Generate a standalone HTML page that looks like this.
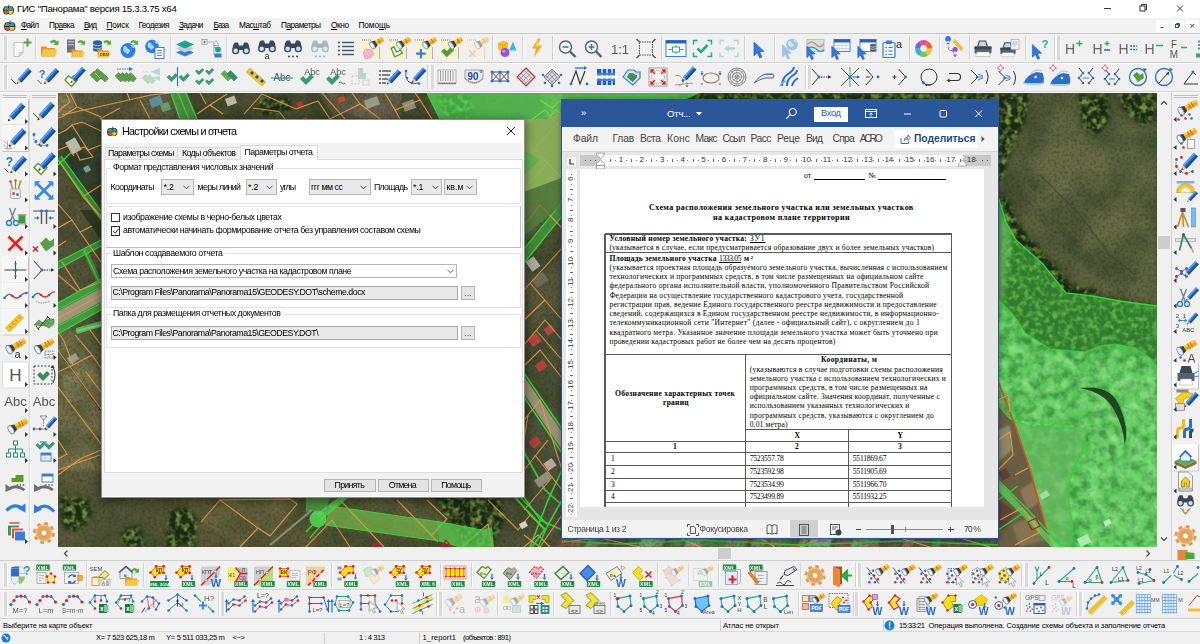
<!DOCTYPE html><html><head><meta charset="utf-8"><title>GIS</title><style>
*{box-sizing:border-box;margin:0;padding:0}
html,body{width:1200px;height:644px;overflow:hidden;background:#f0f0f0;font-family:"Liberation Sans",sans-serif;}
.a{position:absolute}
.t{position:absolute;white-space:nowrap;color:#000;line-height:1}
#title{left:0;top:0;width:1200px;height:18px;background:#fff}
#menu{left:0;top:18px;width:1200px;height:15px;background:#f3f3f3}
.sepv{position:absolute;width:1px;background:#d2d2d2;box-shadow:1px 0 0 #fbfbfb}
.seph{position:absolute;height:1px;background:#d0d0d0;box-shadow:0 1px 0 #fff}
.grip{position:absolute;width:3px;background:#dadada;box-shadow:-1px 0 0 #fafafa,1px 0 0 #fafafa}
svg{position:absolute;overflow:visible}
</style></head><body><svg width="0" height="0" style="left:0;top:0"><defs>
<g id="pen"><path d="M-7.500 8l1.300-4.800 3.600 3.400z" fill="#f2c48a"/><path d="M-7.500 8l.6-2.100 1.500 1.400z" fill="#2b2b2b"/><path d="M-6.200 3.200l10.200-11.200 3.600 3.400-10.200 11.200z" fill="#2468c8"/><path d="M-6.200 3.200l10.200-11.200 1.200 1.100-10.200 11.200z" fill="#5fa2ee"/><path d="M-3.800 5.500l10.200-11.200 1.200 1.100-10.200 11.200z" fill="#174a98"/></g>
<g id="flL"><g transform="rotate(-30)"><rect x="-2" y="-2.800" width="13" height="5.600" rx="1" fill="#f5a81c"/><rect x="-2" y="-2.800" width="13" height="2" rx="1" fill="#fbd24e"/><rect x="2" y="-2.800" width="1.300" height="5.600" fill="#c97f10"/><rect x="5" y="-2.800" width="1.300" height="5.600" fill="#c97f10"/><path d="M-7.500-4.600l5.500 1.600v6l-5.500 1.600z" fill="#323e4a"/><ellipse cx="-7.500" cy="0" rx="2.300" ry="4.600" fill="#e9f0f7" stroke="#7f8d9d" stroke-width=".9"/></g></g>
<g id="fl"><g transform="rotate(-32)"><rect x="-1" y="-2.600" width="8.500" height="5.200" rx=".8" fill="#f5a81c"/><rect x="-1" y="-2.600" width="8.500" height="1.800" fill="#fbd24e"/><rect x="2.300" y="-2.600" width="1.200" height="5.200" fill="#c97f10"/><path d="M-6-4.300l5 1.300v6l-5 1.300z" fill="#323e4a"/><ellipse cx="-6" cy="0" rx="2.100" ry="4.300" fill="#e9f0f7" stroke="#7f8d9d" stroke-width=".9"/></g></g>
<g id="xml"><rect x="-6.700" y="-3" width="13.400" height="6" rx=".6" fill="#1e8a3c"/><text x="0" y="2" font-size="5.200" font-weight="bold" fill="#fff" text-anchor="middle" font-family="'Liberation Sans',sans-serif" letter-spacing=".3">XML</text></g>
<g id="W"><text x="0" y="0" font-size="11" font-weight="bold" fill="#2b6cc4" text-anchor="middle" font-family="'Liberation Sans',sans-serif">W</text></g>
<g id="xl"><rect x="-4" y="-4.500" width="8" height="9" fill="#1d7a43"/><rect x="1" y="-3.500" width="4.500" height="7" fill="#7fc89a"/><text x="-1.200" y="2.500" font-size="6.500" font-weight="bold" fill="#fff" text-anchor="middle" font-family="'Liberation Sans',sans-serif">x</text></g>
<g id="ptr"><path d="M-4-6l0 11 2.600-2.500 2 4.300 1.800-.8-2-4.300 3.600-.2z" fill="#2f7be0" stroke="#1c55b0" stroke-width=".5"/></g>
<g id="ptrg"><path d="M-4-6l0 11 2.600-2.500 2 4.300 1.800-.8-2-4.300 3.600-.2z" fill="#fff" stroke="#777" stroke-width=".7"/></g>
<g id="bino"><path d="M-8.500 1.500q0-6 2.500-7.500h3l1 3h4l1-3h3q2.500 1.500 2.500 7.500z" fill="#3b4753"/><circle cx="-5.300" cy="2.200" r="3.600" fill="#3b4753"/><circle cx="5.300" cy="2.200" r="3.600" fill="#3b4753"/><circle cx="-5.300" cy="2.200" r="2.300" fill="#bfe2fa"/><circle cx="5.300" cy="2.200" r="2.300" fill="#bfe2fa"/></g>
<g id="gear"><circle r="8.100" fill="none" stroke="#dc9850" stroke-width="2.800" stroke-dasharray="3.180 3.180"/><circle r="5" fill="none" stroke="#e6a45c" stroke-width="4.600"/><circle r="6.800" fill="none" stroke="#f0c48c" stroke-width=".9"/><circle r="2.700" fill="#fbf6ee" stroke="#c98840" stroke-width=".7"/></g>
<g id="fold"><path d="M-8 6v-10h5l1.500 1.500h7.500v8.500z" fill="#e59a1c"/><path d="M-8 6l2.200-7h14.300l-2.500 7z" fill="#f8c450"/></g>
<g id="garr"><path d="M-4-1q4-3.500 7 0l1.500-1.500v5h-5l1.600-1.600q-2-2-4 0z" fill="#57ad3c"/></g>
<g id="globe"><circle r="6.500" fill="#2d7de0"/><path d="M-4-3q2-2 3 0t2 2q2 1 0 3t-3 0q-3-1-2-5zM2-5q3 0 3.500 2.500q-2 1-3.500-2.500z" fill="#a8d5ff"/></g>
<g id="prn"><path d="M-6-2l2-6h7l2 6z" fill="#3d4852"/><path d="M-4.500-2.500l1.300-4.500h5.400l1.300 4.500z" fill="#cfd6dd"/><rect x="-8.500" y="-2" width="17" height="7" rx="1" fill="#56616c"/><rect x="-8.500" y="-2" width="17" height="2.500" fill="#3d4852"/><path d="M-6 3.500h12l1.500 4.500h-15z" fill="#fff" stroke="#9aa3ab" stroke-width=".5"/></g>
<g id="poly5"><path d="M-7-4.500l7.500-2 5.500 3-2 8-8 1.500z" fill="none" stroke="#2aa58c" stroke-width="1.100"/><g fill="#2a6fd0"><circle cx="-7" cy="-4.500" r="1.500"/><circle cx=".5" cy="-6.500" r="1.500"/><circle cx="6" cy="-3.500" r="1.500"/><circle cx="4" cy="4.500" r="1.500"/><circle cx="-4" cy="6" r="1.500"/></g></g>
<g id="ypoly"><path d="M-9 0l6-6.500h8v7h-4.500l-5 4.500z" fill="#f7e018" stroke="#e25a1a" stroke-width=".9"/><g fill="#e02020"><circle cx="-9" cy="0" r="1.400"/><circle cx="-3" cy="-6.500" r="1.400"/><circle cx="5" cy="-6.500" r="1.400"/><circle cx="5" cy=".5" r="1.400"/><circle cx=".5" cy=".5" r="1.400"/><circle cx="-4.500" cy="5" r="1.400"/></g></g>
<g id="arc"><path d="M-10 3l6-8h8" fill="none" stroke="#e05050" stroke-width="1" stroke-dasharray="1.500 1"/><path d="M4-5l4.500 5.500" fill="none" stroke="#2aa58c" stroke-width="1.100"/><g fill="#2a6fd0"><circle cx="-10" cy="3" r="1.600"/><circle cx="-4" cy="-5" r="1.600"/><circle cx="4" cy="-5" r="1.600"/></g><g fill="#e02020"><circle cx="-7" cy="-1" r="1.600"/><circle cx="0" cy="-5.300" r="1.600"/><circle cx="8.500" cy=".5" r="1.600"/></g></g>
<g id="dots"><g fill="#2a6fd0"><circle cx="-7" cy="-3" r="1.300"/><circle cx="-3" cy="-6" r="1.300"/><circle cx="-5" cy="2" r="1.300"/><circle cx="-1" cy="6" r="1.300"/></g><g fill="#e02020"><circle cx="-2" cy="-1" r="1.300"/><circle cx="-7" cy="6" r="1.300"/><circle cx="2" cy="3" r="1.300"/></g></g>
<g id="chk"><path d="M-6-1l3-3 3 3 5-5 3 3-8 8z" fill="#3d9a74"/></g>
<g id="arrd"><path d="M0-3v4" stroke="#2a6fd0" stroke-width="1.500"/><path d="M-2.200 1h4.400l-2.200 3z" fill="#2a6fd0"/></g>
</defs></svg><div class="a" id="title"></div><svg style="left:3.0px;top:3.5px" width="11" height="11" viewBox="0 0 20 20"><ellipse cx="6" cy="11.500" rx="5.800" ry="7.600" fill="#1b1b1b"/><ellipse cx="14" cy="11.500" rx="5.800" ry="7.600" fill="#1b1b1b"/><path d="M1.500 11a4.500 6 0 0 1 8.500-3v3z" fill="#2fb34a"/><path d="M18.500 11a4.500 6 0 0 0-8.500-3v3z" fill="#3b8eea"/><path d="M1.500 12a4.500 6 0 0 0 8.500 3v-3z" fill="#e94a5a"/><path d="M18.500 12a4.500 6 0 0 1-8.500 3v-3z" fill="#f2d21a"/><path d="M10 6q-.5-3 1.500-5" stroke="#1b1b1b" stroke-width="1.600" fill="none"/></svg><div class="t" style="left:17.0px;top:3.8px;font-size:9.70px;letter-spacing:-0.303px;color:#000;">ГИС "Панорама" версия 15.3.3.75 x64</div><svg style="left:1100px;top:0" width="100" height="18" viewBox="0 0 100 18"><g stroke="#222" stroke-width="0.9" fill="none"><path d="M4 8.5h7"/><rect x="40" y="6" width="5" height="5"/><path d="M41.5 6v-1.5h5v5h-1.5"/><path d="M77 5.5l6 6M83 5.5l-6 6"/></g></svg><div class="a" id="menu"></div><svg style="left:4.0px;top:20.0px" width="11.5" height="11.5" viewBox="0 0 20 20"><ellipse cx="6" cy="11.500" rx="5.800" ry="7.600" fill="#1b1b1b"/><ellipse cx="14" cy="11.500" rx="5.800" ry="7.600" fill="#1b1b1b"/><path d="M1.500 11a4.500 6 0 0 1 8.500-3v3z" fill="#2fb34a"/><path d="M18.500 11a4.500 6 0 0 0-8.500-3v3z" fill="#3b8eea"/><path d="M1.500 12a4.500 6 0 0 0 8.500 3v-3z" fill="#e94a5a"/><path d="M18.500 12a4.500 6 0 0 1-8.500 3v-3z" fill="#f2d21a"/><path d="M10 6q-.5-3 1.500-5" stroke="#1b1b1b" stroke-width="1.600" fill="none"/></svg><div class="t" style="left:21.0px;top:20.9px;font-size:8.30px;letter-spacing:-0.802px;color:#000;"><u>Ф</u>айл</div><div class="t" style="left:49.0px;top:20.9px;font-size:8.30px;letter-spacing:-0.507px;color:#000;">Пр<u>а</u>вка</div><div class="t" style="left:84.0px;top:20.9px;font-size:8.30px;letter-spacing:-1.008px;color:#000;"><u>В</u>ид</div><div class="t" style="left:106.5px;top:20.9px;font-size:8.30px;letter-spacing:-0.125px;color:#000;"><u>П</u>оиск</div><div class="t" style="left:138.5px;top:20.9px;font-size:8.30px;letter-spacing:-0.600px;color:#000;">Геодезия</div><div class="t" style="left:179.0px;top:20.9px;font-size:8.30px;letter-spacing:-0.673px;color:#000;"><u>З</u>адачи</div><div class="t" style="left:213.5px;top:20.9px;font-size:8.30px;letter-spacing:-0.964px;color:#000;"><u>Б</u>аза</div><div class="t" style="left:239.0px;top:20.9px;font-size:8.30px;letter-spacing:-0.585px;color:#000;">Мас<u>ш</u>таб</div><div class="t" style="left:281.0px;top:20.9px;font-size:8.30px;letter-spacing:-0.531px;color:#000;">П<u>а</u>раметры</div><div class="t" style="left:331.0px;top:20.9px;font-size:8.30px;letter-spacing:-0.429px;color:#000;"><u>О</u>кно</div><div class="t" style="left:358.5px;top:20.9px;font-size:8.30px;letter-spacing:-0.111px;color:#000;">Помо<u>щ</u>ь</div><div class="a" style="left:1156px;top:20px;width:13px;height:12px;background:#fcfcfc"></div><div class="a" style="left:1171px;top:20px;width:13px;height:12px;background:#fcfcfc"></div><div class="a" style="left:1186px;top:20px;width:13px;height:12px;background:#fcfcfc"></div><svg style="left:1155px;top:18px" width="45" height="15" viewBox="0 0 45 15"><g stroke="#2f4f78" stroke-width="1" fill="none"><path d="M5.5 9.5h3"/><rect x="20.5" y="6.5" width="3" height="3"/><path d="M21.5 6.5v-1h3v3h-1"/><path d="M35.5 6l3.5 3.5M39 6l-3.500 3.500"/></g></svg><div class="a" style="left:0;top:32.500px;width:1200px;height:1.500px;background:#c8c8c8"></div><div class="a" style="left:0;top:34px;width:1200px;height:59px;background:#f0f0f0"></div><div class="a" style="left:0;top:62px;width:1200px;height:1px;background:#d4d4d4"></div><div class="a" style="left:0;top:63px;width:1200px;height:1px;background:#fbfbfb"></div><div class="a" style="left:0;top:91px;width:1200px;height:1px;background:#d4d4d4"></div><div class="a" style="left:0;top:92px;width:1200px;height:1px;background:#fbfbfb"></div><div class="a" style="left:0;top:93px;width:58px;height:467px;background:#f0f0f0"></div><div class="a" style="left:29px;top:95px;width:1px;height:452px;background:#d8d8d8"></div><div class="a" style="left:30px;top:95px;width:1px;height:452px;background:#fcfcfc"></div><div class="a" style="left:1157px;top:93px;width:14px;height:454px;background:#f0f0f0"></div><div class="a" style="left:1158px;top:235.500px;width:12px;height:13px;background:#cdcdcd"></div><svg style="left:1157px;top:93px" width="14" height="454" viewBox="0 0 14 454"><g stroke="#404040" stroke-width="1.1" fill="none"><path d="M4 11.500l3-3 3 3"/><path d="M4 444.500l3 3 3-3"/></g></svg><div class="a" style="left:1171px;top:93px;width:1px;height:467px;background:#d0d0d0"></div><div class="a" style="left:1172px;top:93px;width:28px;height:467px;background:#f0f0f0"></div><div class="a" style="left:1174px;top:95px;width:24px;height:3px;border-top:1px solid #c0c0c0;border-bottom:1px solid #c0c0c0"></div><div class="a" style="left:3px;top:95px;width:24px;height:3px;border-top:1px solid #c0c0c0;border-bottom:1px solid #c0c0c0"></div><div class="a" style="left:32px;top:95px;width:24px;height:3px;border-top:1px solid #c0c0c0;border-bottom:1px solid #c0c0c0"></div><div class="a" style="left:58px;top:547px;width:1113px;height:13px;background:#f0f0f0"></div><div class="a" style="left:718px;top:548px;width:13px;height:11px;background:#cdcdcd"></div><svg style="left:58px;top:547px" width="1099" height="13" viewBox="0 0 1099 13"><g stroke="#404040" stroke-width="1.1" fill="none"><path d="M9.500 3.500l-3 3 3 3"/><path d="M1088.500 3.500l3 3-3 3"/></g></svg><div class="a" style="left:0;top:560px;width:1200px;height:1px;background:#cfcfcf"></div><div class="a" style="left:0;top:561px;width:1200px;height:58px;background:#f0f0f0"></div><div class="a" style="left:0;top:589px;width:1200px;height:1px;background:#d4d4d4"></div><div class="a" style="left:0;top:590px;width:1200px;height:1px;background:#fbfbfb"></div><div class="a" style="left:0;top:618px;width:1200px;height:1px;background:#cfcfcf"></div><div class="a" style="left:0;top:619px;width:1200px;height:13px;background:#f3f3f3"></div><div class="a" style="left:0;top:631px;width:1200px;height:1px;background:#d9d9d9"></div><div class="a" style="left:0;top:632px;width:1200px;height:12px;background:#f0f0f0"></div><div class="a" style="left:719.5px;top:620px;width:1px;height:11px;background:#cfcfcf"></div><div class="a" style="left:883.0px;top:620px;width:1px;height:11px;background:#cfcfcf"></div><div class="a" style="left:324.0px;top:633px;width:1px;height:11px;background:#cfcfcf"></div><div class="a" style="left:419.0px;top:633px;width:1px;height:11px;background:#cfcfcf"></div><div class="t" style="left:3.0px;top:621.7px;font-size:7.60px;letter-spacing:-0.173px;color:#000;">Выберите на карте объект</div><div class="t" style="left:723.0px;top:621.7px;font-size:7.60px;letter-spacing:-0.097px;color:#000;">Атлас не открыт</div><div class="t" style="left:899.0px;top:621.7px;font-size:7.60px;letter-spacing:-0.512px;color:#000;">15:33:21</div><div class="t" style="left:928.5px;top:621.7px;font-size:7.60px;letter-spacing:-0.132px;color:#000;">Операция выполнена. Создание схемы объекта и заполнение отчета</div><svg style="left:884px;top:620px" width="11" height="11" viewBox="0 0 11 11"><circle cx="5.5" cy="5.5" r="5" fill="#1a7fd8"/><rect x="4.900" y="2" width="1.3" height="4.500" fill="#fff"/><rect x="4.900" y="7.300" width="1.3" height="1.400" fill="#fff"/></svg><div class="t" style="left:96.0px;top:633.9px;font-size:7.60px;letter-spacing:-0.340px;color:#000;">X= 7 523 625,18 m</div><div class="t" style="left:166.0px;top:633.9px;font-size:7.60px;letter-spacing:-0.305px;color:#000;">Y= 5 511 033,25 m</div><div class="t" style="left:232.5px;top:633.9px;font-size:7.60px;letter-spacing:-0.407px;color:#000;">&lt;~&gt;</div><div class="t" style="left:359.0px;top:633.9px;font-size:7.60px;letter-spacing:-0.448px;color:#000;">1 : 4 313</div><div class="t" style="left:422.5px;top:633.9px;font-size:7.60px;letter-spacing:0.121px;color:#000;">1_report1</div><div class="t" style="left:463.0px;top:633.9px;font-size:7.60px;letter-spacing:-0.563px;color:#000;">(объектов : 891)</div><svg style="left:1px;top:633px" width="10" height="10" viewBox="0 0 10 10"><circle cx="5" cy="5" r="4.500" fill="#1e78d2"/><path d="M2 3q2-1 2.500 1t2 .5q1 1-.5 2.500" stroke="#bfe0ff" fill="none" stroke-width="1.200"/></svg><svg style="left:58px;top:93px" width="1099" height="454" viewBox="58 93 1099 454"><defs>
<filter color-interpolation-filters="sRGB" id="nz" x="0" y="0" width="100%" height="100%"><feTurbulence type="fractalNoise" baseFrequency="0.022" numOctaves="3" seed="7"/><feColorMatrix type="matrix" values="0 0 0 0 0.19  0 0 0 0 0.24  0 0 0 0 0.13  1.5 0 0 0 -0.55"/></filter>
<filter color-interpolation-filters="sRGB" id="nl" x="0" y="0" width="100%" height="100%"><feTurbulence type="fractalNoise" baseFrequency="0.035" numOctaves="3" seed="21"/><feColorMatrix type="matrix" values="0 0 0 0 0.46  0 0 0 0 0.45  0 0 0 0 0.29  0 1.5 0 0 -0.62"/></filter>
<filter color-interpolation-filters="sRGB" id="gr" x="0" y="0" width="100%" height="100%"><feTurbulence type="fractalNoise" baseFrequency="0.35" numOctaves="2" seed="3"/><feColorMatrix type="matrix" values="0 0 0 0 0.12  0 0 0 0 0.15  0 0 0 0 0.08  0 0 0.8 0 -0.34"/></filter>
<filter color-interpolation-filters="sRGB" id="tr" x="-5%" y="-5%" width="110%" height="110%"><feTurbulence type="fractalNoise" baseFrequency="0.11" numOctaves="3" seed="4"/><feColorMatrix type="matrix" values="0 0 0 0 0.07  0 0 0 0 0.30  0 0 0 0 0.10  0 0 2.6 0 -1.0"/><feComposite in2="SourceGraphic" operator="in"/></filter>
<filter color-interpolation-filters="sRGB" id="tw" x="-5%" y="-5%" width="110%" height="110%"><feTurbulence type="fractalNoise" baseFrequency="0.09" numOctaves="3" seed="14"/><feColorMatrix type="matrix" values="0 0 0 0 0.72  0 0 0 0 1.0  0 0 0 0 0.68  0 2.4 0 0 -0.95"/><feComposite in2="SourceGraphic" operator="in"/></filter>
<filter color-interpolation-filters="sRGB" id="tl" x="-10%" y="-10%" width="120%" height="120%"><feGaussianBlur in="SourceAlpha" stdDeviation="2.200" result="m"/><feTurbulence type="fractalNoise" baseFrequency="0.17" numOctaves="2" seed="9"/><feColorMatrix type="matrix" values="0 0 0 0 0.45  0 0 0 0 0.56  0 0 0 0 0.26  0 3.2 0 0 -1.36"/><feComposite in2="m" operator="in"/></filter>
<filter color-interpolation-filters="sRGB" id="td" x="-10%" y="-10%" width="120%" height="120%"><feGaussianBlur in="SourceAlpha" stdDeviation="2.500" result="m"/><feTurbulence type="fractalNoise" baseFrequency="0.12" numOctaves="2" seed="19"/><feColorMatrix type="matrix" values="0 0 0 0 0.10  0 0 0 0 0.16  0 0 0 0 0.07  0 0 2.0 0 0.05"/><feComposite in2="m" operator="in"/></filter>
<filter color-interpolation-filters="sRGB" id="bl"><feGaussianBlur stdDeviation="2.500"/></filter>
<filter color-interpolation-filters="sRGB" id="bl1"><feGaussianBlur stdDeviation="1.200"/></filter>
<clipPath id="mc"><rect x="58" y="93" width="1099" height="454"/></clipPath>
</defs><g clip-path="url(#mc)"><rect x="58" y="93" width="1099" height="454" fill="#50533a"/><g filter="url(#bl)"><polygon points="58,93 180,93 175,120 58,130" fill="#625d40" stroke="none" stroke-width="1"/><polygon points="58,130 101,120 101,160 70,175 58,160" fill="#3d4630" stroke="none" stroke-width="1"/><polygon points="58,160 80,185 101,240 101,270 58,290" fill="#565438" stroke="none" stroke-width="1"/><polygon points="58,330 101,330 101,470 58,470" fill="#6f6b48" stroke="none" stroke-width="1"/><polygon points="58,470 101,470 160,480 200,497 200,547 58,547" fill="#585a3a" stroke="none" stroke-width="1"/><polygon points="150,497 340,497 330,547 160,547" fill="#5a5837" stroke="none" stroke-width="1"/><polygon points="340,497 470,497 480,547 330,547" fill="#4f5234" stroke="none" stroke-width="1"/><polygon points="180,93 430,93 430,120 180,120" fill="#454a30" stroke="none" stroke-width="1"/><polygon points="998,93 1157,93 1157,310 1090,300 1040,265 998,200" fill="#5d6441" stroke="none" stroke-width="1"/><polygon points="1020,150 1100,140 1157,170 1157,260 1080,250" fill="#676b47" stroke="none" stroke-width="1"/></g><g filter="url(#bl1)"><polygon points="201,522 222,498 258,531 240,547" fill="#6b6640" stroke="none" stroke-width="1" opacity="0.9"/><polygon points="222,498 290,497 297,512 270,536 258,531" fill="#6f6a42" stroke="none" stroke-width="1" opacity="0.9"/><polygon points="345,497 352,510 430,497" fill="#5d5e3a" stroke="none" stroke-width="1" opacity="0.9"/><polygon points="352,510 430,497 445,525 400,540 340,530" fill="#66643e" stroke="none" stroke-width="1" opacity="0.8"/><polygon points="58,345 75,336 101,380 101,440 58,375" fill="#7d7650" stroke="none" stroke-width="1" opacity="0.85"/><polygon points="58,375 101,440 101,470 58,470" fill="#77724c" stroke="none" stroke-width="1" opacity="0.85"/><polygon points="60,158 76,150 101,160 101,205 84,196" fill="#2c3a2a" stroke="none" stroke-width="1" opacity="0.85"/><polygon points="62,375 80,372 84,400 66,402" fill="#a0966c" stroke="none" stroke-width="1" opacity="0.7"/><polygon points="60,100 140,95 150,112 100,119 70,125" fill="#615b3d" stroke="none" stroke-width="1" opacity="0.8"/><polygon points="200,93 262,93 260,100 215,119" fill="#5b583a" stroke="none" stroke-width="1" opacity="0.8"/><polygon points="310,93 352,93 360,104 345,119" fill="#3a4a30" stroke="none" stroke-width="1" opacity="0.8"/><polygon points="524,130 562,180 562,200 524,245" fill="#6a7a45" stroke="none" stroke-width="1" opacity="0.8"/><polygon points="524,270 562,222 562,330 524,320" fill="#5a583c" stroke="none" stroke-width="1" opacity="0.8"/></g><g filter="url(#bl1)"><polygon points="318,93 402,93 398,119 335,119" fill="#7b6c5c" stroke="none" stroke-width="1" opacity="0.75"/><polygon points="58,93 76,93 72,112 58,118" fill="#8a8058" stroke="none" stroke-width="1" opacity="0.8"/><polygon points="540,93 562,93 562,119 548,119" fill="#9aa870" stroke="none" stroke-width="1" opacity="0.5"/></g><g filter="url(#bl1)"><polygon points="562,536 584,536 579,547 557,547" fill="#8e5a4c" stroke="none" stroke-width="1" opacity="0.8"/><polygon points="590,536 612,536 607,547 585,547" fill="#9fb88a" stroke="none" stroke-width="1" opacity="0.8"/><polygon points="616,536 642,536 637,547 611,547" fill="#5a7a48" stroke="none" stroke-width="1" opacity="0.8"/><polygon points="643,536 667,536 662,547 638,547" fill="#9fb88a" stroke="none" stroke-width="1" opacity="0.8"/><polygon points="672,536 685,536 680,547 667,547" fill="#6f9a5a" stroke="none" stroke-width="1" opacity="0.8"/><polygon points="688,536 705,536 700,547 683,547" fill="#a9a58a" stroke="none" stroke-width="1" opacity="0.8"/><polygon points="705,536 730,536 725,547 700,547" fill="#4f8a4a" stroke="none" stroke-width="1" opacity="0.8"/><polygon points="730,536 750,536 745,547 725,547" fill="#9fb88a" stroke="none" stroke-width="1" opacity="0.8"/><polygon points="755,536 768,536 763,547 750,547" fill="#c9c4b0" stroke="none" stroke-width="1" opacity="0.8"/><polygon points="768,536 792,536 787,547 763,547" fill="#6f9a5a" stroke="none" stroke-width="1" opacity="0.8"/><polygon points="792,536 801,536 796,547 787,547" fill="#5a7a48" stroke="none" stroke-width="1" opacity="0.8"/><polygon points="802,536 810,536 805,547 797,547" fill="#9fb88a" stroke="none" stroke-width="1" opacity="0.8"/><polygon points="812,536 834,536 829,547 807,547" fill="#c9c4b0" stroke="none" stroke-width="1" opacity="0.8"/><polygon points="840,536 854,536 849,547 835,547" fill="#8e5a4c" stroke="none" stroke-width="1" opacity="0.8"/><polygon points="855,536 872,536 867,547 850,547" fill="#9fb88a" stroke="none" stroke-width="1" opacity="0.8"/><polygon points="872,536 882,536 877,547 867,547" fill="#9fb88a" stroke="none" stroke-width="1" opacity="0.8"/><polygon points="887,536 903,536 898,547 882,547" fill="#6a6248" stroke="none" stroke-width="1" opacity="0.8"/><polygon points="907,536 917,536 912,547 902,547" fill="#b08a78" stroke="none" stroke-width="1" opacity="0.8"/><polygon points="919,536 934,536 929,547 914,547" fill="#8e5a4c" stroke="none" stroke-width="1" opacity="0.8"/><polygon points="936,536 944,536 939,547 931,547" fill="#6f9a5a" stroke="none" stroke-width="1" opacity="0.8"/><polygon points="948,536 959,536 954,547 943,547" fill="#6a6248" stroke="none" stroke-width="1" opacity="0.8"/><polygon points="959,536 976,536 971,547 954,547" fill="#6a6248" stroke="none" stroke-width="1" opacity="0.8"/><polygon points="976,536 984,536 979,547 971,547" fill="#4f8a4a" stroke="none" stroke-width="1" opacity="0.8"/><polygon points="984,536 998,536 993,547 979,547" fill="#5a7a48" stroke="none" stroke-width="1" opacity="0.8"/></g><rect x="58" y="93" width="1099" height="454" filter="url(#nz)"/><rect x="58" y="93" width="1099" height="454" filter="url(#nl)" opacity="0.35"/><rect x="58" y="93" width="1099" height="454" filter="url(#gr)"/><g filter="url(#td)"><polygon points="998,93 1030,93 1026,120 1012,150 1004,175 998,190" fill="#fff" stroke="none" stroke-width="1"/></g><g filter="url(#tl)"><polygon points="998,93 1030,93 1026,120 1012,150 1004,175 998,190" fill="#fff" stroke="none" stroke-width="1"/></g><g filter="url(#td)"><polygon points="1078,93 1108,93 1110,118 1098,136 1082,128" fill="#fff" stroke="none" stroke-width="1"/></g><g filter="url(#tl)"><polygon points="1078,93 1108,93 1110,118 1098,136 1082,128" fill="#fff" stroke="none" stroke-width="1"/></g><g filter="url(#td)"><polygon points="1118,93 1157,93 1157,122 1140,126 1124,112" fill="#fff" stroke="none" stroke-width="1"/></g><g filter="url(#tl)"><polygon points="1118,93 1157,93 1157,122 1140,126 1124,112" fill="#fff" stroke="none" stroke-width="1"/></g><g filter="url(#td)"><polygon points="1003,190 1020,225 1048,258 1072,285 1100,290 1100,300 1062,298 1036,270 1010,238 998,200" fill="#fff" stroke="none" stroke-width="1"/></g><g filter="url(#tl)"><polygon points="1003,190 1020,225 1048,258 1072,285 1100,290 1100,300 1062,298 1036,270 1010,238 998,200" fill="#fff" stroke="none" stroke-width="1"/></g><g filter="url(#td)"><polygon points="60,497 88,497 92,515 80,532 62,528" fill="#fff" stroke="none" stroke-width="1"/></g><g filter="url(#tl)"><polygon points="60,497 88,497 92,515 80,532 62,528" fill="#fff" stroke="none" stroke-width="1"/></g><g filter="url(#td)"><polygon points="168,512 185,505 198,520 195,547 165,547" fill="#fff" stroke="none" stroke-width="1"/></g><g filter="url(#tl)"><polygon points="168,512 185,505 198,520 195,547 165,547" fill="#fff" stroke="none" stroke-width="1"/></g><g filter="url(#td)"><polygon points="120,530 140,526 146,547 122,547" fill="#fff" stroke="none" stroke-width="1"/></g><g filter="url(#tl)"><polygon points="120,530 140,526 146,547 122,547" fill="#fff" stroke="none" stroke-width="1"/></g><g filter="url(#td)"><polygon points="432,497 500,497 505,520 492,547 462,547 448,520" fill="#fff" stroke="none" stroke-width="1"/></g><g filter="url(#tl)"><polygon points="432,497 500,497 505,520 492,547 462,547 448,520" fill="#fff" stroke="none" stroke-width="1"/></g><g filter="url(#td)"><polygon points="680,93 1000,93 1000,101 675,101" fill="#fff" stroke="none" stroke-width="1"/></g><g filter="url(#tl)"><polygon points="680,93 1000,93 1000,101 675,101" fill="#fff" stroke="none" stroke-width="1"/></g><g filter="url(#td)"><polygon points="436,93 470,93 474,119 446,119" fill="#fff" stroke="none" stroke-width="1"/></g><g filter="url(#tl)"><polygon points="436,93 470,93 474,119 446,119" fill="#fff" stroke="none" stroke-width="1"/></g><g filter="url(#td)"><polygon points="258,98 288,96 292,112 262,116" fill="#fff" stroke="none" stroke-width="1"/></g><g filter="url(#tl)"><polygon points="258,98 288,96 292,112 262,116" fill="#fff" stroke="none" stroke-width="1"/></g><polyline points="1040,175 1080,215 1110,255 1135,275" fill="none" stroke="#3f432b" stroke-width="1.5" opacity="0.6"/><polyline points="1020,178 1062,222 1100,262" fill="none" stroke="#62643f" stroke-width="1.2" opacity="0.5"/><polygon points="58,311 101,288 101,302 58,325" fill="#a39a7c" stroke="none" stroke-width="1" opacity="0.95"/><polygon points="58,303 101,279 101,287 58,310" fill="#46b846" stroke="none" stroke-width="1" opacity="0.7"/><polyline points="58,303 101,279" fill="none" stroke="#35d23a" stroke-width="1.3"/><polyline points="58,310 101,287" fill="none" stroke="#35d23a" stroke-width="1.3"/><polygon points="58,326 101,303 101,310 58,334" fill="#46b846" stroke="none" stroke-width="1" opacity="0.7"/><polyline points="58,326 101,303" fill="none" stroke="#35d23a" stroke-width="1.3"/><polyline points="58,334 101,310" fill="none" stroke="#35d23a" stroke-width="1.3"/><polyline points="58,318 101,295" fill="none" stroke="#e39a4c" stroke-width="1"/><polygon points="58,158 62,156 101,212 101,220" fill="#3fae3f" stroke="none" stroke-width="1" opacity="0.55"/><polyline points="58,160 101,219" fill="none" stroke="#35d23a" stroke-width="1.4"/><polyline points="61,156 101,211" fill="none" stroke="#35d23a" stroke-width="1.2"/><polyline points="58,165 74,150" fill="none" stroke="#35d23a" stroke-width="1.5"/><polygon points="58,262 100,240 101,246 58,269" fill="#48b548" stroke="none" stroke-width="1" opacity="0.55"/><polyline points="58,262 101,240" fill="none" stroke="#35d23a" stroke-width="1.2"/><polyline points="58,269 101,246" fill="none" stroke="#35d23a" stroke-width="1.2"/><polygon points="82,250 87,248 101,280 97,283" fill="#48b548" stroke="none" stroke-width="1" opacity="0.5"/><polyline points="84,250 99,282" fill="none" stroke="#35d23a" stroke-width="1.2"/><polygon points="80,210 92,210 101,222 101,240" fill="#27351f" stroke="none" stroke-width="1" opacity="0.85"/><polyline points="59,351 101,410" fill="none" stroke="#1c1c14" stroke-width="1.3" opacity="0.8"/><polyline points="76,331 101,325" fill="none" stroke="#35d23a" stroke-width="2"/><polygon points="76,328 101,321 101,327 77,334" fill="#7fe07f" stroke="none" stroke-width="1" opacity="0.6"/><polygon points="171,93 186,93 197,119 180,119" fill="#55b04a" stroke="none" stroke-width="1" opacity="0.6"/><polyline points="171,93 180,119" fill="none" stroke="#35d23a" stroke-width="1.4"/><polyline points="178,93 189,119" fill="none" stroke="#35d23a" stroke-width="1.2"/><polyline points="186,93 197,119" fill="none" stroke="#35d23a" stroke-width="1.4"/><polygon points="524,376 562,432 562,450 524,394" fill="#9f977b" stroke="none" stroke-width="1" opacity="0.92"/><polyline points="524,373 562,429" fill="none" stroke="#35d23a" stroke-width="1.5"/><polyline points="524,397 562,453" fill="none" stroke="#35d23a" stroke-width="1.5"/><polygon points="524,250 562,203 562,215 524,262" fill="#45b845" stroke="none" stroke-width="1" opacity="0.55"/><polyline points="524,249 562,202" fill="none" stroke="#35d23a" stroke-width="1.4"/><polyline points="524,263 562,216" fill="none" stroke="#35d23a" stroke-width="1.4"/><polyline points="524,452 545,490 562,505" fill="none" stroke="#35d23a" stroke-width="1.6"/><polyline points="530,547 548,500 562,470" fill="none" stroke="#35d23a" stroke-width="1.6"/><polyline points="524,497 540,520 562,530" fill="none" stroke="#35d23a" stroke-width="1.4"/><rect x="531" y="205" width="9" height="8" fill="#b5413c" transform="rotate(-35 535.5 209)"/><rect x="529" y="335" width="11" height="10" fill="#b2443f" transform="rotate(-35 534.5 340)"/><rect x="545" y="326" width="9" height="8" fill="#a84a44" transform="rotate(-35 549.5 330)"/><rect x="536" y="362" width="10" height="8" fill="#b0423d" transform="rotate(-35 541 366)"/><rect x="530" y="438" width="10" height="9" fill="#a8403c" transform="rotate(-35 535 442.5)"/><rect x="545" y="460" width="10" height="9" fill="#b9a79c" transform="rotate(-35 550 464.5)"/><rect x="528" y="258" width="10" height="12" fill="#a9a99b" transform="rotate(-35 533 264)"/><rect x="533" y="275" width="14" height="10" fill="#6c6a58" transform="rotate(-35 540 280)"/><rect x="535" y="475" width="16" height="9" fill="#8f8d7c" transform="rotate(-35 543 479.5)"/><rect x="68" y="139" width="11" height="14" fill="#b4bcb0" transform="rotate(-30 73.5 146)"/><rect x="84" y="166" width="6" height="6" fill="#7f9a8f" transform="rotate(-30 87 169)"/><rect x="68" y="355" width="10" height="7" fill="#9aa090" transform="rotate(-30 73 358.5)"/><rect x="150" y="97" width="12" height="9" fill="#5f8da0" transform="rotate(-20 156 101.5)"/><rect x="161" y="103" width="9" height="8" fill="#6a9a6a" transform="rotate(-20 165.5 107)"/><rect x="226" y="97" width="10" height="8" fill="#b9b7a6" transform="rotate(-20 231 101)"/><rect x="297" y="102" width="6" height="6" fill="#b5352c" transform="rotate(-25 300 105)"/><rect x="300" y="118" width="8" height="6" fill="#b5352c" transform="rotate(-25 304 121)"/><rect x="365" y="98" width="14" height="9" fill="#9a9a88" transform="rotate(-20 372 102.5)"/><rect x="403" y="101" width="12" height="9" fill="#8d8b78" transform="rotate(-20 409 105.5)"/><rect x="338" y="97" width="7" height="5" fill="#c2472f" transform="rotate(-20 341.5 99.5)"/><polyline points="66,93 70,102 62,108 58,112" fill="none" stroke="#e39a4c" stroke-width="1.1" opacity="0.95"/><polyline points="70,93 77,107 62,117 58,118" fill="none" stroke="#e39a4c" stroke-width="1.1" opacity="0.95"/><polyline points="77,107 101,117" fill="none" stroke="#e39a4c" stroke-width="1.1" opacity="0.95"/><polyline points="72,125 82,122 101,131" fill="none" stroke="#e39a4c" stroke-width="1.1" opacity="0.95"/><polyline points="72,125 88,150 101,145" fill="none" stroke="#e39a4c" stroke-width="1.1" opacity="0.95"/><polyline points="75,150 85,147 93,157 80,160 75,150" fill="none" stroke="#e39a4c" stroke-width="1.1" opacity="0.95"/><polyline points="58,134 66,130 72,125" fill="none" stroke="#e39a4c" stroke-width="1.1" opacity="0.95"/><polyline points="58,150 68,146 74,156" fill="none" stroke="#e39a4c" stroke-width="1.1" opacity="0.95"/><polyline points="84,196 101,185" fill="none" stroke="#e39a4c" stroke-width="1.1" opacity="0.95"/><polyline points="86,200 101,218" fill="none" stroke="#e39a4c" stroke-width="1.1" opacity="0.95"/><polyline points="60,162 84,198 101,216" fill="none" stroke="#e39a4c" stroke-width="1.1" opacity="0.95"/><polyline points="58,228 72,220 58,204" fill="none" stroke="#e39a4c" stroke-width="1.1" opacity="0.95"/><polyline points="72,220 80,232 101,262" fill="none" stroke="#e39a4c" stroke-width="1.1" opacity="0.95"/><polyline points="58,246 66,241" fill="none" stroke="#e39a4c" stroke-width="1.1" opacity="0.95"/><polyline points="80,232 92,226" fill="none" stroke="#e39a4c" stroke-width="1.1" opacity="0.95"/><polyline points="62,262 80,290 101,282" fill="none" stroke="#e39a4c" stroke-width="1.1" opacity="0.95"/><polyline points="58,275 78,292" fill="none" stroke="#e39a4c" stroke-width="1.1" opacity="0.95"/><polyline points="58,350 101,409" fill="none" stroke="#e39a4c" stroke-width="1.1" opacity="0.95"/><polyline points="58,387 101,444" fill="none" stroke="#e39a4c" stroke-width="1.1" opacity="0.95"/><polyline points="75,335 92,355 101,368" fill="none" stroke="#e39a4c" stroke-width="1.1" opacity="0.95"/><polyline points="73,365 92,355" fill="none" stroke="#e39a4c" stroke-width="1.1" opacity="0.95"/><polyline points="64,341 73,365 58,372" fill="none" stroke="#e39a4c" stroke-width="1.1" opacity="0.95"/><polyline points="58,475 80,459 101,450" fill="none" stroke="#e39a4c" stroke-width="1.1" opacity="0.95"/><polyline points="58,440 67,454 58,459" fill="none" stroke="#e39a4c" stroke-width="1.1" opacity="0.95"/><polyline points="86,372 101,392" fill="none" stroke="#e39a4c" stroke-width="1.1" opacity="0.95"/><polyline points="58,332 64,341" fill="none" stroke="#e39a4c" stroke-width="1.1" opacity="0.95"/><polyline points="90,330 101,345" fill="none" stroke="#e39a4c" stroke-width="1.1" opacity="0.95"/><polyline points="62,115 151,95 170,93" fill="none" stroke="#e39a4c" stroke-width="1.1" opacity="0.95"/><polyline points="127,93 130,100" fill="none" stroke="#e39a4c" stroke-width="1.1" opacity="0.95"/><polyline points="197,114 210,105 223,114" fill="none" stroke="#e39a4c" stroke-width="1.1" opacity="0.95"/><polyline points="227,94 210,105" fill="none" stroke="#e39a4c" stroke-width="1.1" opacity="0.95"/><polyline points="244,114 262,94" fill="none" stroke="#e39a4c" stroke-width="1.1" opacity="0.95"/><polyline points="253,108 279,111.5" fill="none" stroke="#e39a4c" stroke-width="1.1" opacity="0.95"/><polyline points="262,94 296,109 318,101" fill="none" stroke="#e39a4c" stroke-width="1.1" opacity="0.95"/><polyline points="200,93 206,104" fill="none" stroke="#e39a4c" stroke-width="1.1" opacity="0.95"/><polyline points="279,111.5 285,119" fill="none" stroke="#e39a4c" stroke-width="1.1" opacity="0.95"/><polyline points="318,101 330,119" fill="none" stroke="#e39a4c" stroke-width="1.1" opacity="0.95"/><polyline points="322,93 345,119" fill="none" stroke="#e39a4c" stroke-width="1.1" opacity="0.95"/><polyline points="330,119 360,104 352,93" fill="none" stroke="#e39a4c" stroke-width="1.1" opacity="0.95"/><polyline points="360,104 380,119" fill="none" stroke="#e39a4c" stroke-width="1.1" opacity="0.95"/><polyline points="385,93 395,110 420,100 415,93" fill="none" stroke="#e39a4c" stroke-width="1.1" opacity="0.95"/><polyline points="395,110 400,119" fill="none" stroke="#e39a4c" stroke-width="1.1" opacity="0.95"/><polyline points="420,100 432,119" fill="none" stroke="#e39a4c" stroke-width="1.1" opacity="0.95"/><polyline points="540,100 552,108 562,100" fill="none" stroke="#e39a4c" stroke-width="1.1" opacity="0.95"/><polyline points="548,119 556,110 562,114" fill="none" stroke="#e39a4c" stroke-width="1.1" opacity="0.95"/><polyline points="100,119 120,108" fill="none" stroke="#e39a4c" stroke-width="1.1" opacity="0.95"/><polyline points="140,100 150,119" fill="none" stroke="#e39a4c" stroke-width="1.1" opacity="0.95"/><polyline points="524,125 545,110 562,130" fill="none" stroke="#e39a4c" stroke-width="1.1" opacity="0.95"/><polyline points="524,160 562,118" fill="none" stroke="#e39a4c" stroke-width="1.1" opacity="0.95"/><polyline points="535,150 562,178" fill="none" stroke="#e39a4c" stroke-width="1.1" opacity="0.95"/><polyline points="524,190 550,160" fill="none" stroke="#e39a4c" stroke-width="1.1" opacity="0.95"/><polyline points="524,225 540,205 562,228" fill="none" stroke="#e39a4c" stroke-width="1.1" opacity="0.95"/><polyline points="524,290 562,248" fill="none" stroke="#e39a4c" stroke-width="1.1" opacity="0.95"/><polyline points="530,283 562,320" fill="none" stroke="#e39a4c" stroke-width="1.1" opacity="0.95"/><polyline points="524,320 545,300" fill="none" stroke="#e39a4c" stroke-width="1.1" opacity="0.95"/><polyline points="524,345 545,320 562,340" fill="none" stroke="#e39a4c" stroke-width="1.1" opacity="0.95"/><polyline points="536,330 562,360" fill="none" stroke="#e39a4c" stroke-width="1.1" opacity="0.95"/><polyline points="524,366 540,350 562,378" fill="none" stroke="#e39a4c" stroke-width="1.1" opacity="0.95"/><polyline points="524,420 540,400 562,470" fill="none" stroke="#e39a4c" stroke-width="1.1" opacity="0.95"/><polyline points="528,415 524,440" fill="none" stroke="#e39a4c" stroke-width="1.1" opacity="0.95"/><polyline points="524,470 548,440" fill="none" stroke="#e39a4c" stroke-width="1.1" opacity="0.95"/><polyline points="535,455 562,490" fill="none" stroke="#e39a4c" stroke-width="1.1" opacity="0.95"/><polyline points="524,510 550,480" fill="none" stroke="#e39a4c" stroke-width="1.1" opacity="0.95"/><polyline points="540,547 562,515" fill="none" stroke="#e39a4c" stroke-width="1.1" opacity="0.95"/><polyline points="524,535 540,547" fill="none" stroke="#e39a4c" stroke-width="1.1" opacity="0.95"/><polyline points="201,522 220,500 258,528 240,547" fill="none" stroke="#e39a4c" stroke-width="1.1" opacity="0.95"/><polyline points="220,500 290,499 297,504 270,536 258,528" fill="none" stroke="#e39a4c" stroke-width="1.1" opacity="0.95"/><polyline points="340,500 384,547" fill="none" stroke="#e39a4c" stroke-width="1.1" opacity="0.95"/><polyline points="397,500 438,542" fill="none" stroke="#e39a4c" stroke-width="1.1" opacity="0.95"/><polyline points="427,500 447,519 431,536" fill="none" stroke="#e39a4c" stroke-width="1.1" opacity="0.95"/><polyline points="306,547 332,520 350,547" fill="none" stroke="#e39a4c" stroke-width="1.1" opacity="0.95"/><polyline points="488,500 518,530 530,515 516,497" fill="none" stroke="#e39a4c" stroke-width="1.1" opacity="0.95"/><polyline points="462,547 488,524 492,547" fill="none" stroke="#e39a4c" stroke-width="1.1" opacity="0.95"/><polyline points="530,515 545,530" fill="none" stroke="#e39a4c" stroke-width="1.1" opacity="0.95"/><polyline points="524,547 538,535 550,547" fill="none" stroke="#e39a4c" stroke-width="1.1" opacity="0.95"/><polyline points="58,470 80,462 100,455" fill="none" stroke="#e39a4c" stroke-width="1.1" opacity="0.95"/><polyline points="562,542 600,538 640,547" fill="none" stroke="#e39a4c" stroke-width="1.1" opacity="0.95"/><polyline points="680,538 700,547" fill="none" stroke="#e39a4c" stroke-width="1.1" opacity="0.95"/><polyline points="760,538 775,547" fill="none" stroke="#e39a4c" stroke-width="1.1" opacity="0.95"/><polyline points="800,547 820,538" fill="none" stroke="#e39a4c" stroke-width="1.1" opacity="0.95"/><polyline points="900,538 930,547" fill="none" stroke="#e39a4c" stroke-width="1.1" opacity="0.95"/><polyline points="960,538 990,547" fill="none" stroke="#e39a4c" stroke-width="1.1" opacity="0.95"/><polyline points="730,538 800,547" fill="none" stroke="#d8402a" stroke-width="1.2"/><polyline points="850,538 880,547" fill="none" stroke="#d8402a" stroke-width="1.2"/><polygon points="306,497 330,497 326,510 306,512" fill="#4fc34f" stroke="none" stroke-width="1" opacity="0.55"/><polygon points="330,506 440,522 482,530 492,527 494,547 460,547 440,541 325,525" fill="#7fc850" stroke="none" stroke-width="1" opacity="0.6"/><polygon points="436,521 482,530 492,527 494,547 460,547 440,541" fill="#3fc850" stroke="none" stroke-width="1" opacity="0.45"/><polyline points="330,506 440,522 482,530" fill="none" stroke="#35d23a" stroke-width="1.2"/><polyline points="325,525 440,541 460,547" fill="none" stroke="#35d23a" stroke-width="1.2"/><circle cx="318" cy="519" r="8.500" fill="#5bd65b" opacity="0.85"/><polygon points="316,514 343,494 348,498 322,520" fill="#5bd65b" stroke="none" stroke-width="1" opacity="0.7"/><polyline points="306,532 318,519 345,497" fill="none" stroke="#35d23a" stroke-width="1.6"/><polyline points="310,538 322,524" fill="none" stroke="#35d23a" stroke-width="1.3"/><polyline points="520,497 548,525 562,500" fill="none" stroke="#35d23a" stroke-width="1.6"/><polyline points="514,497 545,529 532,547" fill="none" stroke="#35d23a" stroke-width="1.6"/><polyline points="548,525 538,547" fill="none" stroke="#35d23a" stroke-width="1.4"/><polyline points="562,541 620,544 700,540 800,545 900,541 998,545" fill="none" stroke="#35d23a" stroke-width="1.5" opacity="0.8"/><polyline points="270,545 312,510" fill="none" stroke="#9a9884" stroke-width="2.2" opacity="0.8"/><polygon points="441,547 446,540 452,547" fill="none" stroke="#c02020" stroke-width="1.3"/><polygon points="372,547 377,542 382,547" fill="none" stroke="#c02020" stroke-width="1.3"/><rect x="520" y="522" width="7" height="6" fill="#d8d0c0" transform="rotate(-30 523.5 525)"/><polygon points="427,93 700,93 685,100 562,100 562,112 545,119 440,119" fill="#58e65c" stroke="none" stroke-width="1" opacity="0.66"/><polygon points="524,119 545,119 562,112 562,178 524,192" fill="#8db35c" stroke="none" stroke-width="1" opacity="0.92"/><polygon points="524,192 562,178 562,205 524,236" fill="#55803f" stroke="none" stroke-width="1" opacity="0.8"/><polygon points="524,150 540,160 524,175" fill="#5fb050" stroke="none" stroke-width="1" opacity="0.8"/><polyline points="427,93 440,119" fill="none" stroke="#35d23a" stroke-width="1.2"/><g filter="url(#bl1)"><polygon points="1013,420 1086,428 1083,450 1070,478 1069,500 1073,530 1070,547 1052,547 1030,470" fill="#6a7a55" stroke="none" stroke-width="1" opacity="0.9"/><polygon points="1040,460 1062,470 1066,495 1048,500" fill="#7a7a66" stroke="none" stroke-width="1" opacity="0.8"/><polygon points="998,383 1013,420 1030,470 1045,525 1052,547 998,547" fill="#6e6248" stroke="none" stroke-width="1" opacity="0.85"/><polygon points="998,430 1010,425 1012,450 998,462" fill="#9a9270" stroke="none" stroke-width="1" opacity="0.8"/><polygon points="1020,490 1035,480 1042,500 1028,510" fill="#9a8060" stroke="none" stroke-width="1" opacity="0.8"/><polygon points="998,498 1015,512 1005,530 998,528" fill="#5a3f34" stroke="none" stroke-width="1" opacity="0.85"/><polygon points="1012,525 1035,515 1045,540 1020,547" fill="#8a7a58" stroke="none" stroke-width="1" opacity="0.8"/></g><g filter="url(#td)"><polygon points="1000,236 1013,232 1040,262 1066,295 1100,296 1157,307 1157,367 1135,348 1100,346 1085,352 1050,349 1025,333 1015,317 1003,300" fill="#fff" stroke="none" stroke-width="1"/></g><g filter="url(#tl)"><polygon points="1000,236 1013,232 1040,262 1066,295 1100,296 1157,307 1157,367 1135,348 1100,346 1085,352 1050,349 1025,333 1015,317 1003,300" fill="#fff" stroke="none" stroke-width="1"/></g><polygon points="998,196 1006,222 1016,240 1042,263 1066,293 1092,296 1120,301 1157,306 1157,547 1052,547 1045,525 1030,470 1013,420 1006,405 998,383" fill="#46cf4c" stroke="none" stroke-width="1" opacity="0.5"/><polygon points="998,299 1015,317 1025,333 1050,349 1085,352 1100,346 1115,344 1135,348 1150,358 1157,367 1157,547 1070,547 1073,530 1069,500 1070,478 1083,450 1086,428 1030,426 1010,419 998,405" fill="#5ef062" stroke="none" stroke-width="1" opacity="0.5"/><polygon points="1013,420 1086,428 1083,450 1070,478 1069,500 1073,530 1070,547 1052,547 1030,470" fill="#6fe070" stroke="none" stroke-width="1" opacity="0.3"/><g filter="url(#bl)"><polygon points="1000,200 1012,236 1003,300 998,300" fill="#9af090" stroke="none" stroke-width="1" opacity="0.35"/><polygon points="1090,360 1157,372 1157,547 1080,547 1076,480 1092,445" fill="#8fe88a" stroke="none" stroke-width="1" opacity="0.3"/><polygon points="1000,320 1030,345 1085,362 1085,420 1000,400" fill="#8fe88a" stroke="none" stroke-width="1" opacity="0.22"/></g><g filter="url(#tr)" opacity="0.4"><polygon points="998,299 1015,317 1025,333 1050,349 1085,352 1100,346 1115,344 1135,348 1150,358 1157,367 1157,547 1070,547 1073,530 1069,500 1070,478 1083,450 1086,428 1030,426 1010,419 998,405" fill="#fff" stroke="none" stroke-width="1"/></g><g filter="url(#tw)" opacity="0.45"><polygon points="998,299 1015,317 1025,333 1050,349 1085,352 1100,346 1115,344 1135,348 1150,358 1157,367 1157,547 1070,547 1073,530 1069,500 1070,478 1083,450 1086,428 1030,426 1010,419 998,405" fill="#fff" stroke="none" stroke-width="1"/></g><g filter="url(#tw)" opacity="0.25"><polygon points="1013,420 1086,428 1083,450 1070,478 1069,500 1073,530 1070,547 1052,547 1030,470" fill="#fff" stroke="none" stroke-width="1"/></g><polyline points="998,196 1006,222 1016,240 1042,263 1066,293 1092,296 1120,301 1157,306" fill="none" stroke="#35d23a" stroke-width="1.300"/><polyline points="998,299 1015,317 1025,333 1050,349 1085,352 1100,346 1115,344 1135,348 1150,358 1157,367" fill="none" stroke="#35d23a" stroke-width="1.100" opacity=".9"/><polyline points="1070,547 1073,530 1069,500 1070,478 1083,450 1086,428 1030,426 1010,419 998,405" fill="none" stroke="#35d23a" stroke-width="1.100" opacity=".9"/><path d="M1080 388q30-5 40 18t5 40q-2-22-12-38t-33-20z" fill="#1d3a1c" opacity="0.92"/><path d="M1080 388q30-5 40 18t5 40" fill="none" stroke="#2fc23a" stroke-width="1"/><rect x="1078" y="536" width="12" height="9" fill="#a8eea8" transform="rotate(-25 1084 540.5)"/><rect x="1104" y="520" width="7" height="5" fill="#b5f2b5" transform="rotate(-25 1107.5 522.5)"/><rect x="1040" y="492" width="9" height="6" fill="#a8d8b0" transform="rotate(-30 1044.5 495)"/><polyline points="998,381 1013,420 1030,470 1045,525 1052,547" fill="none" stroke="#c8502a" stroke-width="1.7"/><polygon points="998,481 1060,547 1052,547 998,489" fill="#6fe06f" stroke="none" stroke-width="1" opacity="0.6"/><polyline points="998,480 1030,512 1062,547" fill="none" stroke="#35d23a" stroke-width="1.5"/><polyline points="998,490 1025,517 1052,547" fill="none" stroke="#35d23a" stroke-width="1.3"/><polyline points="998,500 1018,486" fill="none" stroke="#35d23a" stroke-width="1.3"/><polyline points="998,530 1025,512" fill="none" stroke="#35d23a" stroke-width="1.3"/><polyline points="998,440 1010,432 1013,455 998,470" fill="none" stroke="#e39a4c" stroke-width="1.1"/><polyline points="1000,520 1022,508 1040,532 1015,545" fill="none" stroke="#e39a4c" stroke-width="1.1"/><polyline points="1015,475 1028,468" fill="none" stroke="#e39a4c" stroke-width="1.1"/><polyline points="998,400 1008,395 1010,412" fill="none" stroke="#e39a4c" stroke-width="1.1"/><polygon points="1028,522 1036,518 1040,526 1032,530" fill="none" stroke="#b02020" stroke-width="1.2"/><rect x="1000" y="470" width="9" height="9" fill="#5a4038" transform="rotate(-30 1004.5 474.5)"/></g></svg><svg style="left:0;top:0" width="1200" height="644" viewBox="0 0 1200 644"><g transform="translate(21 48.5)"><path d="M-7-6h9v10l-4 4h-5z" fill="#fafafa" stroke="#b5b5b5" stroke-width="0.8"/><path d="M2 4l-4 4v-4z" fill="#ddd" stroke="#b5b5b5" stroke-width="0.6"/><path d="M2.500-6h8M6.500-10v8" fill="none" stroke="#4aa83c" stroke-width="2"/></g><g transform="translate(50 48.5)"><use href="#fold" transform="translate(-1 2)"/><use href="#garr" transform="translate(4 -6)"/></g><g transform="translate(76 48.5)"><rect x="-9" y="-9" width="8" height="13" fill="#6a737c"/><rect x="-8" y="-7.5" width="6" height="1.5" fill="#aeb6be"/><rect x="-8" y="-4.5" width="6" height="1.5" fill="#aeb6be"/><use href="#fold" transform="translate(2 4) scale(0.8)"/><use href="#garr" transform="translate(5 -6) scale(0.9)"/></g><g transform="translate(102 48.5)"><path d="M-9-7q4.500-2.500 9 0v9q-4.500 2.500-9 0z" fill="#2f5f9e"/><path d="M-9-4q4.500 2.500 9 0M-9-1q4.500 2.500 9 0" fill="none" stroke="#9cc4f0" stroke-width="1.2"/><use href="#fold" transform="translate(2 4) scale(0.8)"/><text x="2.5" y="7.5" font-size="4" fill="#7a4a00" text-anchor="middle" font-weight="bold" font-family="'Liberation Sans',sans-serif">DBM</text><use href="#garr" transform="translate(5 -6) scale(0.9)"/></g><g transform="translate(129 48.5)"><use href="#globe" transform="translate(-1 2) scale(1.15)"/><use href="#garr" transform="translate(5 -6) scale(0.9)"/></g><g transform="translate(155 48.5)"><use href="#globe" transform="translate(-3 -2) scale(1.05)"/><rect x="0" y="-1" width="9" height="11" fill="#fff" stroke="#3d7dcc" stroke-width="1"/><path d="M2 2h5M2 4.500h5M2 7h5" fill="none" stroke="#3d7dcc" stroke-width="0.9"/></g><g transform="translate(185 48.5)"><path d="M-9 4l9-4 9 4-9 4z" fill="#2f7de0"/><path d="M-9 0l9-4 9 4-9 4z" fill="#c9cdd2"/><path d="M-9-4l9-4 9 4-9 4z" fill="#1fa393"/></g><g transform="translate(211 48.5)"><rect x="-9" y="-9" width="5" height="5" fill="#fff" stroke="#888" stroke-width="0.7"/><path d="M-8-6.500h3M-6.500-8v3" fill="none" stroke="#555" stroke-width="0.7"/><path d="M-3-6.500h6v13h3M3-1h3" fill="none" stroke="#999" stroke-width="0.8"/><path d="M2-3l3-5 3 5z" fill="#eee" stroke="#999" stroke-width="0.7"/><circle cx="7" cy="1" r="3" fill="#22a890"/><rect x="3.5" y="5" width="7" height="4" fill="#2f7de0"/></g><g transform="translate(241 48.5)"><use href="#bino" transform="translate(0 0)"/></g><g transform="translate(267 48.5)"><use href="#bino" transform="translate(0 -2)"/><text x="0" y="10" font-size="9" fill="#333" text-anchor="middle" font-family="'Liberation Sans',sans-serif">a</text></g><g transform="translate(293 48.5)"><use href="#bino" transform="translate(0 -2)"/><circle cx="-4" cy="8" r="0.9" fill="#333"/><circle cx="0" cy="8" r="0.9" fill="#333"/><circle cx="4" cy="8" r="0.9" fill="#333"/></g><g transform="translate(320 48.5)"><g opacity="0.35"><use href="#bino" transform="translate(0 -2)"/></g><circle cx="-4" cy="8" r="0.9" fill="#7aa7e8"/><circle cx="0" cy="8" r="0.9" fill="#9ab"/><circle cx="4" cy="8" r="0.9" fill="#7aa7e8"/></g><g transform="translate(346 48.5)"><circle cx="-7" cy="-6" r="1" fill="#4a545e"/><path d="M-4 -6h12" fill="none" stroke="#4a545e" stroke-width="1.4"/><circle cx="-7" cy="-2" r="1" fill="#4a545e"/><path d="M-4 -2h12" fill="none" stroke="#4a545e" stroke-width="1.4"/><circle cx="-7" cy="2" r="1" fill="#4a545e"/><path d="M-4 2h12" fill="none" stroke="#4a545e" stroke-width="1.4"/><circle cx="-7" cy="6" r="1" fill="#4a545e"/><path d="M-4 6h12" fill="none" stroke="#4a545e" stroke-width="1.4"/></g><g transform="translate(372 48.5)"><g><rect x="-10" y="-8" width="17.5" height="18.5" fill="#f8f4c8"/><path d="M-10-8.500h9" fill="none" stroke="#777" stroke-width="1" stroke-dasharray="1 1"/><path d="M7.500-1v11" fill="none" stroke="#777" stroke-width="1" stroke-dasharray="1 1"/><g transform="translate(-1.500 2) scale(1.050)"><path d="M-7 2l3-3.500 5 1 2 4-3 3.500-5 1z" fill="#f6b4cc" stroke="#e78aa8" stroke-width="0.7"/></g><use href="#fl" transform="translate(5 -6) scale(0.95)"/></g></g><g transform="translate(399 48.5)"><g><rect x="-10" y="-8" width="17.5" height="18.5" fill="#f8f4c8"/><path d="M-10-8.500h9" fill="none" stroke="#777" stroke-width="1" stroke-dasharray="1 1"/><path d="M7.500-1v11" fill="none" stroke="#777" stroke-width="1" stroke-dasharray="1 1"/><g transform="translate(-1.500 2) scale(1.050)"><path d="M-6-2l2.500-1.500 2.500 5 4-2 1.500 3-7 3.500z" fill="#fff" stroke="#4f9a45" stroke-width="1.3"/></g><use href="#fl" transform="translate(5 -6) scale(0.95)"/></g></g><g transform="translate(425 48.5)"><g><rect x="-10" y="-8" width="17.5" height="18.5" fill="#f8f4c8"/><path d="M-10-8.500h9" fill="none" stroke="#777" stroke-width="1" stroke-dasharray="1 1"/><path d="M7.500-1v11" fill="none" stroke="#777" stroke-width="1" stroke-dasharray="1 1"/><g transform="translate(-1.500 2) scale(1.050)"><path d="M-7 3h9M-2.500-1.500v9" fill="none" stroke="#2f7de0" stroke-width="2"/></g><use href="#fl" transform="translate(5 -6) scale(0.95)"/></g></g><g transform="translate(451 48.5)"><g><rect x="-10" y="-8" width="17.5" height="18.5" fill="#f8f4c8"/><path d="M-10-8.500h9" fill="none" stroke="#777" stroke-width="1" stroke-dasharray="1 1"/><path d="M7.500-1v11" fill="none" stroke="#777" stroke-width="1" stroke-dasharray="1 1"/><g transform="translate(-1.500 2) scale(1.050)"><path d="M-8 1l3-3 2.500 2.500 4-4 3 3-7 7z" fill="#4f9a45"/></g><use href="#fl" transform="translate(5 -6) scale(0.95)"/></g></g><g transform="translate(477 48.5)"><g opacity="0.45"><rect x="-10" y="-8" width="17.5" height="18.5" fill="#f8f4c8"/><path d="M-10-8.500h9" fill="none" stroke="#777" stroke-width="1" stroke-dasharray="1 1"/><path d="M7.500-1v11" fill="none" stroke="#777" stroke-width="1" stroke-dasharray="1 1"/><g transform="translate(-1.500 2) scale(1.050)"><path d="M-6 0l6 6M0 0l-6 6" fill="none" stroke="#e68aa0" stroke-width="1.5"/></g><use href="#fl" transform="translate(5 -6) scale(0.95)"/></g></g><g transform="translate(506 48.5)"><path d="M-8-5l5-3 5 2v6l-5 3-5-2z" fill="#f6c12a"/><path d="M-8-5l5 2 5-2M-3-3v6" fill="none" stroke="#d99a10" stroke-width="0.7"/><path d="M3 2l4-9 3.500 9z" fill="#38b7e8"/><circle cx="-1" cy="4" r="4.5" fill="#9a4fd8"/><circle cx="-2.2" cy="2.8" r="1.5" fill="#c99af0"/></g><g transform="translate(537 48.5)"><path d="M1-10l-6 10h4l-2 9 8-12h-4.500l3-7z" fill="#f7a81b"/><path d="M1-10l-3 8h3z" fill="#fbd04a"/></g><g transform="translate(567 48.5)"><circle cx="-1.5" cy="-1.5" r="6" fill="#f4f6f8" stroke="#56616c" stroke-width="1.4"/><path d="M3 3l5.500 5.500" fill="none" stroke="#56616c" stroke-width="2.4"/><path d="M-4.500-1.500h6" fill="none" stroke="#2a6fd0" stroke-width="1.5"/></g><g transform="translate(593 48.5)"><circle cx="-1.5" cy="-1.5" r="6" fill="#f4f6f8" stroke="#56616c" stroke-width="1.4"/><path d="M3 3l5.500 5.500" fill="none" stroke="#56616c" stroke-width="2.4"/><path d="M-4.500-1.500h6" fill="none" stroke="#2a6fd0" stroke-width="1.5"/><path d="M-1.500-4.500v6" fill="none" stroke="#2a6fd0" stroke-width="1.5"/></g><g transform="translate(620 48.5)"><text x="0" y="5" font-size="13" fill="#555" text-anchor="middle" font-family="'Liberation Sans',sans-serif">1:1</text></g><g transform="translate(646 48.5)"><rect x="-6.5" y="-6.5" width="13" height="13" fill="none" stroke="#444" stroke-width="1" stroke-dasharray="1.500 1"/><path d="M-9.500-9.500l3 3M9.500-9.500l-3 3M-9.500 9.500l3-3M9.500 9.500l-3-3" fill="none" stroke="#444" stroke-width="1.2"/></g><g transform="translate(676 48.5)"><rect x="-10" y="-8" width="20" height="16" fill="#fff" stroke="#3d7dcc" stroke-width="1"/><rect x="-10" y="-8" width="20" height="3" fill="#2b62b8"/><rect x="-3.5" y="-1.5" width="7" height="5" fill="#fff" stroke="#22a890" stroke-width="1"/><path d="M-7.500 1h4M3.500 1h4M0-1.500v-2M0 3.500v2" fill="none" stroke="#22a890" stroke-width="1"/></g><g transform="translate(702.5 48.5)"><path d="M-9-4v-4h4M5-8h4v4M9 4v4h-4M-5 8h-4v-4" fill="none" stroke="#22a890" stroke-width="1.5"/><path d="M-5 0l3.500 3.500 6.500-7" fill="none" stroke="#22a890" stroke-width="2.6"/></g><g transform="translate(729 48.5)"><g opacity="0.3"><path d="M-9-4v-4h4M5-8h4v4M9 4v4h-4M-5 8h-4v-4" fill="none" stroke="#22a890" stroke-width="1.5"/><path d="M6-1.300h-6v-2.200l-5 3.500 5 3.500v-2.200h6z" fill="#22a890"/></g></g><g transform="translate(759 48.5)"><use href="#ptr" transform="translate(0 1) scale(1.25)"/></g><g transform="translate(790 48.5)"><g opacity="0.4"><use href="#globe" transform="translate(2 -4) scale(0.9)"/><use href="#ptr" transform="translate(-3 3) scale(1.1)"/></g></g><g transform="translate(815 48.5)"><rect x="-8" y="-9" width="17" height="12" fill="#cfe8c0" stroke="#9ab" stroke-width="0.6"/><path d="M-8-4q5-5 9 0t8-1" fill="none" stroke="#e07ad0" stroke-width="1.4"/><path d="M-8 0q6-3 10 1t7 0" fill="none" stroke="#4a90e2" stroke-width="1.4"/><use href="#ptr" transform="translate(-4 4) scale(1.05)"/></g><g transform="translate(841 48.5)"><rect x="-7" y="-9" width="16" height="12" fill="#fff" stroke="#2b62b8" stroke-width="0.8"/><rect x="-7" y="-9" width="16" height="3" fill="#2b62b8"/><path d="M-7-3h16M-7 0h16M-3-6v9M1-6v9M5-6v9" fill="none" stroke="#9bb7e0" stroke-width="0.5"/><use href="#ptr" transform="translate(-5 4) scale(1.05)"/></g><g transform="translate(867 48.5)"><rect x="-7" y="-9" width="16" height="12" fill="#fff" stroke="#2b62b8" stroke-width="0.8"/><rect x="-7" y="-9" width="16" height="3" fill="#2b62b8"/><path d="M3-4q3-1.500 6 0v6q-3 1.500-6 0z" fill="#56616c"/><path d="M3-2q3 1.500 6 0M3 0q3 1.500 6 0" fill="none" stroke="#cfd6dd" stroke-width="0.7"/><use href="#ptr" transform="translate(-5 4) scale(1.05)"/></g><g transform="translate(892 48.5)"><rect x="-9" y="-6" width="12" height="15" fill="#eef5fc" stroke="#3d7dcc" stroke-width="1.2" rx="1"/><rect x="-6" y="-8" width="6" height="3.5" fill="#3d7dcc"/><path d="M-6.500-1h1.500M-3.500-1h4M-6.500 2.500h1.500M-3.500 2.500h4M-6.500 6h1.500M-3.500 6h4" fill="none" stroke="#3d7dcc" stroke-width="1.1"/><text x="7" y="-1" font-size="11" fill="#222" text-anchor="middle" font-family="'Liberation Sans',sans-serif">a</text></g><g transform="translate(923.6 48.5)"><path d="M0 0L8.5 0A8.500 8.500 0 0 1 4.24998 7.36123Z" fill="#f2c230"/><path d="M0 0L4.24998 7.36123A8.500 8.500 0 0 1 -4.25004 7.3612Z" fill="#7ac74f"/><path d="M0 0L-4.25004 7.3612A8.500 8.500 0 0 1 -8.5 -6.24445e-05Z" fill="#2fb4e0"/><path d="M0 0L-8.5 -6.24445e-05A8.500 8.500 0 0 1 -4.24993 -7.36126Z" fill="#7a5fd8"/><path d="M0 0L-4.24993 -7.36126A8.500 8.500 0 0 1 4.25009 -7.36116Z" fill="#e0509a"/><path d="M0 0L4.25009 -7.36116A8.500 8.500 0 0 1 8.5 0.000124889Z" fill="#f0603a"/><circle cx="0" cy="0" r="3.3" fill="#f0f0f0"/></g><g transform="translate(954 48.5)"><path d="M-6-6.500a3 3 0 1 1 .1 0zM-6-3.500l-2-2.500h4z" fill="#2f7de0"/><circle cx="-6" cy="-6.5" r="1.1" fill="#fff"/><path d="M-6-2q0 4 3 4t3 3" fill="none" stroke="#888" stroke-width="1"/><path d="M1 4a2.800 2.800 0 1 1 .1 0zM1 9l-2-3h4z" fill="#9a4fd8"/><circle cx="1" cy="4" r="1" fill="#fff"/><path d="M1-9l8 9-2 2-8-9z" fill="#f4c22a" stroke="#d49a10" stroke-width="0.5"/></g><g transform="translate(983 48.5)"><use href="#prn" transform="translate(0 0)"/></g><g transform="translate(1010 48.5)"><use href="#prn" transform="translate(-2 1) scale(0.9)"/><rect x="1" y="-9" width="8" height="10" fill="#eef2f6" stroke="#9aa3ab" stroke-width="0.6"/><path d="M2.500-6.500h5M2.500-4.500h5M2.500-2.500h3" fill="none" stroke="#9aa3ab" stroke-width="0.7"/></g><g transform="translate(1039 48.5)"><use href="#ptr" transform="translate(-2 3) scale(1.15)"/><text x="6" y="-1" font-size="11" fill="#22a890" text-anchor="middle" font-weight="bold" font-family="'Liberation Sans',sans-serif">?</text></g><g transform="translate(1073.5 48.5)"><text x="-3.5" y="5" font-size="14" fill="#666" text-anchor="middle" font-family="'Liberation Sans',sans-serif">H</text><path d="M3-5h6M6-8v6" fill="none" stroke="#3aa860" stroke-width="1.4"/></g><g transform="translate(1101 48.5)"><text x="-3.5" y="5" font-size="14" fill="#666" text-anchor="middle" font-family="'Liberation Sans',sans-serif">H</text><path d="M3.500-5h5M6-7.500v5" fill="none" stroke="#3aa860" stroke-width="1.3"/><path d="M3 1.500h6" fill="none" stroke="#2a6fd0" stroke-width="1.6"/></g><g transform="translate(1127 48.5)"><text x="-3.5" y="5" font-size="14" fill="#666" text-anchor="middle" font-family="'Liberation Sans',sans-serif">H</text><path d="M3-2.500h7M3 1h7" fill="none" stroke="#2a6fd0" stroke-width="1.4" stroke-dasharray="2 1"/></g><g transform="translate(1153 48.5)"><text x="-3.5" y="5" font-size="14" fill="#666" text-anchor="middle" font-family="'Liberation Sans',sans-serif">H</text><path d="M3-3h7" fill="none" stroke="#3aa860" stroke-width="1.5"/></g><g transform="translate(1178 48.5)"><text x="-4" y="-1" font-size="10" fill="#555" text-anchor="middle" font-family="'Liberation Sans',sans-serif">F</text><text x="-4" y="9" font-size="10" fill="#555" text-anchor="middle" font-family="'Liberation Sans',sans-serif">M</text><path d="M3-1h6" fill="none" stroke="#3aa860" stroke-width="1.5"/></g><g transform="translate(1199 48.5)"><path d="M0-8v10" fill="none" stroke="#2a6fd0" stroke-width="1.5" stroke-dasharray="2 1.500"/><rect x="-3" y="5" width="6" height="4" fill="#3aa860"/></g><g transform="translate(21 77)"><use href="#pen" transform="translate(3 -1)"/><path d="M-10 2l5 5" fill="none" stroke="#333" stroke-width="0.9"/></g><g transform="translate(47.5 77)"><use href="#pen" transform="translate(4 -1)"/><path d="M-10 3l4 4" fill="none" stroke="#333" stroke-width="0.9"/><text x="-5.5" y="1" font-size="11" fill="#2a6fd0" text-anchor="middle" font-weight="bold" font-family="'Liberation Sans',sans-serif">?</text></g><g transform="translate(74 77)"><path d="M-9 3l3.500-4 3 2 2-2 4 4-6 6.500z" fill="#fff" stroke="#5c9a2e" stroke-width="1.4"/><use href="#pen" transform="translate(4 -2)"/></g><g transform="translate(99 77)"><path d="M-9 -2l7 7l3.500-3.500l-7 -7z" fill="#5f9e4f" stroke="#3f7a36" stroke-width="0.5"/><path d="M-5 -5l7 7l3.500-3.500l-7 -7z" fill="#5f9e4f" stroke="#3f7a36" stroke-width="0.5"/><path d="M-1 -2l7 7l3.500-3.500l-7 -7z" fill="#5f9e4f" stroke="#3f7a36" stroke-width="0.5"/><path d="M-4-4l5 5" fill="none" stroke="#d9e84a" stroke-width="0.9"/></g><g transform="translate(125 77)"><path d="M-10 -1l6 6l3.500-3.500l-6 -6z" fill="#5f9e4f" stroke="#3f7a36" stroke-width="0.5"/><path d="M-6 -1l6 6l3.500-3.500l-6 -6z" fill="#5f9e4f" stroke="#3f7a36" stroke-width="0.5"/><path d="M-2 -1l6 6l3.500-3.500l-6 -6z" fill="#5f9e4f" stroke="#3f7a36" stroke-width="0.5"/><path d="M2 -1l6 6l3.500-3.500l-6 -6z" fill="#5f9e4f" stroke="#3f7a36" stroke-width="0.5"/><path d="M-8-8h12" fill="none" stroke="#2a6fd0" stroke-width="1.2" stroke-dasharray="1.500 1"/><path d="M4-10l4 2-4 2z" fill="#2a6fd0"/></g><g transform="translate(151 77)"><g opacity="0.45"><path d="M-9 1l6 6l3.500-3.500l-6 -6z" fill="#7ab88a" stroke="#7ab88a" stroke-width="0.5"/><path d="M-5 1l6 6l3.500-3.500l-6 -6z" fill="#7ab88a" stroke="#7ab88a" stroke-width="0.5"/><path d="M9-9l-10 4 10 3zM9-1l-8 1.500 8 3.500z" fill="#5fc0b0"/><path d="M-8-5h6" fill="none" stroke="#999" stroke-width="1" stroke-dasharray="1 1"/></g></g><g transform="translate(177.5 77)"><g transform="translate(-6 1) scale(0.8)"><use href="#chk" transform="translate(0 0)"/></g><g transform="translate(6 1) scale(0.8)"><use href="#chk" transform="translate(0 0)"/></g><path d="M0-10v19" fill="none" stroke="#2a6fd0" stroke-width="1.1"/></g><g transform="translate(204 77)"><g transform="translate(-5 -5) scale(0.65)"><use href="#chk" transform="translate(0 0)"/></g><g transform="translate(5 -5) scale(0.65)"><use href="#chk" transform="translate(0 0)"/></g><g transform="translate(-5 5) scale(0.65)"><use href="#chk" transform="translate(0 0)"/></g><g transform="translate(5 5) scale(0.65)"><use href="#chk" transform="translate(0 0)"/></g></g><g transform="translate(230 77)"><path d="M-9 -3l7 7l3.500-3.500l-7 -7z" fill="#6aa85a" stroke="#4f8a40" stroke-width="0.5"/><path d="M-3 -3l7 7l3.500-3.500l-7 -7z" fill="#2f8f6a" stroke="#1f6f50" stroke-width="0.5"/></g><g transform="translate(256 77)"><path d="M-10-5l4-4 16 14-4 4z" fill="#f2c428" stroke="#c99a10" stroke-width="0.5"/><path d="M-6 -4l2-2 2 2-2 2z" fill="#1d4fa0"/><path d="M-1 0l2-2 2 2-2 2z" fill="#1d4fa0"/><path d="M4 4l2-2 2 2-2 2z" fill="#1d4fa0"/></g><g transform="translate(282 77)"><text x="0" y="4" font-size="10" fill="#555" text-anchor="middle" font-family="'Liberation Sans',sans-serif">Abc</text><path d="M-11 1h22" fill="none" stroke="#2a9a80" stroke-width="1.2"/></g><g transform="translate(309 77)"><g transform="translate(-3 3) scale(1)"><use href="#chk" transform="translate(0 0)"/></g><text x="3" y="-2" font-size="9" fill="#555" text-anchor="middle" font-family="'Liberation Sans',sans-serif">Abc</text></g><g transform="translate(335 77)"><g transform="translate(-3 3) scale(1)"><use href="#chk" transform="translate(0 0)"/></g><text x="3" y="-2" font-size="9" fill="#555" text-anchor="middle" font-family="'Liberation Sans',sans-serif">Abc</text><path d="M4 6q1.500-2 3 0t3 0" fill="none" stroke="#555" stroke-width="1"/></g><g transform="translate(361 77)"><g opacity="0.35"><rect x="-9" y="-1" width="7" height="8" fill="none" stroke="#e0506a" stroke-width="1" stroke-dasharray="2 1.500"/><path d="M-3-9h5v5h3v6h-8z" fill="#5fa86a"/><rect x="2" y="3" width="6" height="5" fill="none" stroke="#8aa0c0" stroke-width="1"/></g></g><g transform="translate(389 77)"><circle cx="-9" cy="-6" r="0.9" fill="#444"/><path d="M-7 -6h9" fill="none" stroke="#444" stroke-width="1.3"/><circle cx="-9" cy="-2" r="0.9" fill="#444"/><path d="M-7 -2h8" fill="none" stroke="#444" stroke-width="1.3"/><circle cx="-9" cy="2" r="0.9" fill="#444"/><path d="M-7 2h6" fill="none" stroke="#444" stroke-width="1.3"/><circle cx="-9" cy="6" r="0.9" fill="#444"/><path d="M-7 6h4" fill="none" stroke="#444" stroke-width="1.3"/><use href="#pen" transform="translate(5 0) scale(0.95)"/></g><g transform="translate(415 77)"><path d="M-9-6q-1 8 3 11t9 1" fill="none" stroke="#555" stroke-width="1"/><circle cx="-9" cy="-6" r="1.3" fill="#2a6fd0"/><circle cx="-8" cy="1" r="1.3" fill="#2a6fd0"/><circle cx="-3" cy="6" r="1.3" fill="#2a6fd0"/><circle cx="4" cy="6.5" r="1.3" fill="#2a6fd0"/><use href="#pen" transform="translate(4 -2) scale(0.95)"/></g><g transform="translate(447 77)"><rect x="-9" y="-7" width="18" height="13" fill="#f4f4f4" stroke="#999" stroke-width="0.7"/><path d="M-6.5-6v10" fill="none" stroke="#8a8a8a" stroke-width="0.8"/><path d="M-4-6v10" fill="none" stroke="#8a8a8a" stroke-width="0.8"/><path d="M-1.5-6v10" fill="none" stroke="#8a8a8a" stroke-width="0.8"/><path d="M1-6v10" fill="none" stroke="#8a8a8a" stroke-width="0.8"/><path d="M3.5-6v10" fill="none" stroke="#8a8a8a" stroke-width="0.8"/><path d="M6-6v10" fill="none" stroke="#8a8a8a" stroke-width="0.8"/><path d="M-9 6.500h18" fill="none" stroke="#e0506a" stroke-width="1.4"/></g><g transform="translate(474 77)"><path d="M-9-7h18v9q-9 9-18 0z" fill="#e8eaee" stroke="#888" stroke-width="0.7"/><path d="M-9 1q9 9 18 0" fill="none" stroke="#e02020" stroke-width="1" stroke-dasharray="1 1"/><text x="-1" y="3" font-size="10" fill="#1d4fa0" text-anchor="middle" font-weight="bold" font-family="'Liberation Sans',sans-serif">90</text><text x="7" y="-1" font-size="7" fill="#1d4fa0" text-anchor="middle" font-weight="bold" font-family="'Liberation Sans',sans-serif">°</text></g><g transform="translate(500 77)"><path d="M-8-5h16M-8 4h16M-8-5v9M0-5v9M8-5v9M-8-5l8 9 8-9M-8 4l8-9 8 9" fill="none" stroke="#333" stroke-width="0.8"/><circle cx="-8" cy="-5" r="1.5" fill="#2a6fd0"/><circle cx="-8" cy="4" r="1.5" fill="#2a6fd0"/><circle cx="0" cy="-5" r="1.5" fill="#2a6fd0"/><circle cx="0" cy="4" r="1.5" fill="#2a6fd0"/><circle cx="8" cy="-5" r="1.5" fill="#2a6fd0"/><circle cx="8" cy="4" r="1.5" fill="#2a6fd0"/></g><g transform="translate(526 77)"><path d="M0-9l9 9-9 9-9-9z" fill="#d9dce0" stroke="#e02020" stroke-width="1.1"/><path d="M-5-4l9 9M-2-7l9 9M-7-1l8 8M-4 5l8-8M-6 2l8-8M-1 7l7-7" fill="none" stroke="#888" stroke-width="0.6"/></g><g transform="translate(552 77)"><path d="M0-8l8 8-8 8-8-8z" fill="#d0d4d8" stroke="#555" stroke-width="0.8"/><path d="M-4-4l8 8M-1-6l7 7M-6-1l7 7M-4 4l8-8M-6 1l7-7M-1 6l6-6" fill="none" stroke="#777" stroke-width="0.6"/><circle cx="-9" cy="-2" r="1.3" fill="#2a6fd0"/><circle cx="9" cy="-2" r="1.3" fill="#2a6fd0"/><circle cx="-7" cy="6" r="1.3" fill="#2a6fd0"/><circle cx="7" cy="6" r="1.3" fill="#2a6fd0"/><circle cx="0" cy="9" r="1.3" fill="#2a6fd0"/></g><g transform="translate(579 77)"><path d="M-8 7l5-13 4 13 5-13" fill="none" stroke="#333" stroke-width="1.2"/><circle cx="-8" cy="7" r="1.4" fill="#2a6fd0"/><circle cx="8" cy="7" r="1.4" fill="#2a6fd0"/><path d="M-4-9h9" fill="none" stroke="#2a6fd0" stroke-width="1.3"/><path d="M5-11l3 2-3 2z" fill="#2a6fd0"/></g><g transform="translate(606 77)"><rect x="-9" y="-8" width="18" height="16" fill="#1f5fc0"/><path d="M-9-3h18M-9 3h18M-4-8v16M1-8v16M6-8v16" fill="none" stroke="#fff" stroke-width="1.3"/><rect x="-11" y="-1.5" width="22" height="3" fill="#fff"/><path d="M-9-3h18M-9 3h18" fill="none" stroke="#1f5fc0" stroke-width="1.5"/></g><g transform="translate(632 77)"><path d="M-9 0l5-7h6l2 2h4v6l-7 7z" fill="#cfe2f5" stroke="#3d7dcc" stroke-width="1.2"/><path d="M-6 0l3.500-4.500h3.500l2 2h2.500v3l-5 5z" fill="#3f8f5a" stroke="#fff" stroke-width="0.8"/></g><g transform="translate(658 77)"><rect x="-9" y="-9" width="18" height="18" fill="#f6f6f4" stroke="#888" stroke-width="0.8"/><circle cx="0" cy="0" r="6.5" fill="none" stroke="#999" stroke-width="0.7"/><path d="M-3-3l-4-4M-7-4v-3h3" fill="none" stroke="#e02020" stroke-width="1.3"/><path d="M3-3l4-4M7-4v-3h-3" fill="none" stroke="#e02020" stroke-width="1.3"/><path d="M-3 3l-4 4M-7 4v3h3" fill="none" stroke="#e02020" stroke-width="1.3"/><path d="M3 3l4 4M7 4v3h-3" fill="none" stroke="#e02020" stroke-width="1.3"/></g><g transform="translate(685 77)"><path d="M-10-2q6 0 8 4t-4 7M-10 8q8-1 18-2" fill="none" stroke="#b89a6a" stroke-width="1"/><use href="#pen" transform="translate(4 -3) scale(0.95)"/><circle cx="-2" cy="3.5" r="1.4" fill="#2a6fd0"/><path d="M2 5v5M1 8.500l1 1.500 1-1.500" fill="#2a6fd0" stroke="#2a6fd0" stroke-width="0.6"/></g><g transform="translate(711 77)"><ellipse cx="0" cy="1" rx="8" ry="5" fill="none" stroke="#9a7a4a" stroke-width="1.200"/><path d="M-9-6v4M9-6v4" fill="none" stroke="#2a6fd0" stroke-width="1"/><path d="M-10.500-4l1.500 2.500 1.500-2.500zM7.500-4l1.500 2.500 1.500-2.500z" fill="#2a6fd0"/><path d="M-9 6v2M9 6v2" fill="none" stroke="#2a6fd0" stroke-width="1"/></g><g transform="translate(737 77)"><circle cx="0" cy="0" r="2" fill="none" stroke="#666" stroke-width="0.8"/><circle cx="0" cy="0" r="4.5" fill="none" stroke="#666" stroke-width="0.8"/><circle cx="0" cy="0" r="7" fill="none" stroke="#666" stroke-width="0.8"/><circle cx="0" cy="0" r="9" fill="none" stroke="#666" stroke-width="0.8"/><path d="M-9 0h18M0-9v18M-6.500-6.500l13 13M6.500-6.500l-13 13" fill="none" stroke="#888" stroke-width="0.5"/></g><g transform="translate(764 77)"><path d="M-10 6q6-8 12-9l7 0q2 2 0 4l-8 0q-5 1-11 5z" fill="#e4e8ee" stroke="#55657a" stroke-width="1"/><path d="M2-2.500h6" fill="none" stroke="#55657a" stroke-width="0.8"/></g><g transform="translate(790 77)"><path d="M-8 9q0-8 6-12t6-7M-3 9q0-7 5-10t5-6M2 9q1-5 6-8" fill="none" stroke="#2f6ec8" stroke-width="2"/><path d="M-10 9q2-4 6-5" fill="none" stroke="#7ab0f0" stroke-width="1.5"/></g><g transform="translate(822 77)"><path d="M-10-8l7 8-7 8" fill="none" stroke="#333" stroke-width="1"/><circle cx="-3" cy="0" r="1.5" fill="#2a6fd0"/><path d="M-1 0h7" fill="none" stroke="#333" stroke-width="1" stroke-dasharray="1.500 1"/><path d="M6-1.800l3.500 1.800-3.500 1.800z" fill="#333"/></g><g transform="translate(850 77)"><path d="M-9-9l9 9-9 9M9-9l-9 9 9 9" fill="none" stroke="#333" stroke-width="0.9"/><path d="M0-10v20" fill="none" stroke="#5fc090" stroke-width="1.4"/><circle cx="0" cy="0" r="1.6" fill="#2a6fd0"/><path d="M2 0h6" fill="none" stroke="#2a6fd0" stroke-width="1.1"/><path d="M7-1.800l3 1.800-3 1.800z" fill="#2a6fd0"/></g><g transform="translate(875 77)"><path d="M-9-8l7 8-7 8" fill="none" stroke="#333" stroke-width="1"/><circle cx="3" cy="0" r="1.4" fill="#2a6fd0"/><path d="M-9 0h4" fill="none" stroke="#333" stroke-width="1"/></g><g transform="translate(901.6 77)"><path d="M-3-8l7 8-7 8" fill="none" stroke="#333" stroke-width="1"/><circle cx="4" cy="0" r="1.4" fill="#2a6fd0"/><path d="M-9 0h4M-7-2v4" fill="none" stroke="#333" stroke-width="0.9"/></g><g transform="translate(929 77)"><circle cx="0" cy="0" r="8" fill="none" stroke="#333" stroke-width="1"/><circle cx="-5.5" cy="5.8" r="1.5" fill="#2a6fd0"/><path d="M-2 8h4" fill="none" stroke="#333" stroke-width="1"/><path d="M-2 6.500l-2.500 1.500 2.500 1.500z" fill="#333"/></g><g transform="translate(955 77)"><path d="M-6-3.500h8a3.500 3.500 0 0 1 0 7h-10" fill="none" stroke="#333" stroke-width="1.1"/><path d="M-5.500 1.500l-3 2 3 2z" fill="#333"/></g><g transform="translate(980 77)"><path d="M-9-7l7 7-7 7" fill="none" stroke="#333" stroke-width="1"/><path d="M6-7q4 7 0 14" fill="none" stroke="#333" stroke-width="1"/><path d="M-2 0h5M-2-3l5 2M-2 3l5-2" fill="none" stroke="#2a6fd0" stroke-width="0.9"/><circle cx="-3" cy="0" r="1.2" fill="#2a6fd0"/></g><g transform="translate(1007.5 77)"><path d="M-9-6l7 7-7 7" fill="none" stroke="#333" stroke-width="1"/><path d="M6-6q4 7 0 14" fill="none" stroke="#333" stroke-width="1"/><path d="M-2 1h5M-2-2l5 2M-2 4l5-2" fill="none" stroke="#2a6fd0" stroke-width="0.9"/><circle cx="-3" cy="1" r="1.2" fill="#2a6fd0"/><path d="M-7-12.500l1.200 2.300 2.300 1.200-2.300 1.200-1.200 2.300-1.200-2.300-2.300-1.200 2.300-1.200z" fill="#fff" stroke="#e05068" stroke-width="0.8"/></g><g transform="translate(1033.6 77)"><path d="M-10 6q3-8 13-11l6 1q2 5 1 10z" fill="#2f6ec8"/><path d="M-10 6q10 2.500 20 0" fill="none" stroke="#9cc4f0" stroke-width="1.4"/><path d="M-3-3q5-6 11-3" fill="none" stroke="#b8c4d0" stroke-width="1.2"/><circle cx="2" cy="0" r="1.2" fill="#fff"/></g><g transform="translate(1060 77)"><g transform="translate(0 1)"><path d="M-10 6q3-8 13-11l6 1q2 5 1 10z" fill="#2f6ec8"/><path d="M-10 6q10 2.500 20 0" fill="none" stroke="#9cc4f0" stroke-width="1.4"/><path d="M-3-3q5-6 11-3" fill="none" stroke="#b8c4d0" stroke-width="1.2"/><circle cx="2" cy="0" r="1.2" fill="#fff"/></g><path d="M-7-12.500l1.200 2.300 2.300 1.200-2.300 1.200-1.200 2.300-1.200-2.300-2.300-1.200 2.300-1.200z" fill="#fff" stroke="#e05068" stroke-width="0.8"/></g><g transform="translate(1086 77)"><path d="M-7-9l4 5-4 5 4 5M7-9l-4 5 4 5-4 5" fill="none" stroke="#333" stroke-width="1"/><path d="M-3 1h6" fill="none" stroke="#2a6fd0" stroke-width="0.9"/><circle cx="-3" cy="-4" r="1.3" fill="#2a6fd0"/><circle cx="3" cy="-4" r="1.3" fill="#2a6fd0"/><circle cx="-3" cy="6" r="1.3" fill="#2a6fd0"/><circle cx="3" cy="6" r="1.3" fill="#2a6fd0"/><circle cx="-7" cy="1" r="1.3" fill="#2a6fd0"/><circle cx="7" cy="1" r="1.3" fill="#2a6fd0"/></g><g transform="translate(1112 77)"><path d="M-7-8l4 5-4 5 4 5M7-8l-4 5 4 5-4 5" fill="none" stroke="#333" stroke-width="1"/><path d="M-3 2h6" fill="none" stroke="#2a6fd0" stroke-width="0.9"/><circle cx="-3" cy="-3" r="1.3" fill="#2a6fd0"/><circle cx="3" cy="-3" r="1.3" fill="#2a6fd0"/><circle cx="-3" cy="7" r="1.3" fill="#2a6fd0"/><circle cx="3" cy="7" r="1.3" fill="#2a6fd0"/><circle cx="-7" cy="2" r="1.3" fill="#2a6fd0"/><circle cx="7" cy="2" r="1.3" fill="#2a6fd0"/><path d="M-7-12.500l1.200 2.300 2.300 1.200-2.300 1.200-1.200 2.300-1.200-2.300-2.300-1.200 2.300-1.200z" fill="#fff" stroke="#e05068" stroke-width="0.8"/></g><g transform="translate(1138 77)"><circle cx="0" cy="0" r="8.5" fill="none" stroke="#2f6ec8" stroke-width="1.3"/><path d="M-5-2l4-3 3 3 3-2 1 5-6 4z" fill="#5c9a3e"/><path d="M5-9l4 1-2.500 3z" fill="#2f6ec8"/></g><g transform="translate(1164 77)"><circle cx="0" cy="0" r="8.5" fill="none" stroke="#2f6ec8" stroke-width="1.3"/><path d="M-5 6l10-11" fill="none" stroke="#333" stroke-width="1"/><path d="M5-5l-.5 3.500-2.500-2.500z" fill="#333"/><path d="M5-9l4 1-2.500 3z" fill="#2f6ec8"/></g><g transform="translate(1192 77)"><path d="M-8 7l9-12 3 3M-8 7h14" fill="none" stroke="#333" stroke-width="1"/><circle cx="1" cy="-5" r="1.5" fill="#2a6fd0"/></g><g transform="translate(19 575.5)"><path d="M-8-7h8v8h-8z" fill="#2f6ec8"/><path d="M-8-7q0-2 4-2h4v2z" fill="#2f6ec8"/><path d="M0-9q6 0 6 7h-6z" fill="#e6eef8" stroke="#99a" stroke-width="0.5"/><path d="M-8 1h8v0q0 6-5 8q-3-3-3-8z" fill="#e6eef8" stroke="#99a" stroke-width="0.5"/><path d="M0 1h6q0 5-6 8z" fill="#8fc46a"/><text x="8" y="-1" font-size="12" fill="#22a890" text-anchor="middle" font-weight="bold" font-family="'Liberation Sans',sans-serif">?</text></g><g transform="translate(46 575.5)"><use href="#xml" transform="translate(-3 -8)"/><rect x="-9" y="-3" width="9" height="11" fill="#eee" stroke="#999" stroke-width="0.7"/><path d="M-7 0h5M-7 2.500h5M-7 5h3" fill="none" stroke="#aaa" stroke-width="0.8"/><path d="M1 1l4-3 4 3-1 6h-6z" fill="#f7e88a" stroke="#c9a020" stroke-width="0.7"/><circle cx="1" cy="1" r="1.2" fill="#e02020"/><circle cx="5" cy="-2" r="1.2" fill="#e02020"/><circle cx="9" cy="1" r="1.2" fill="#e02020"/><circle cx="8" cy="7" r="1.2" fill="#e02020"/><circle cx="2" cy="7" r="1.2" fill="#e02020"/></g><g transform="translate(72.5 575.5)"><use href="#xml" transform="translate(-3 -8)"/><rect x="-8" y="-3" width="14" height="11" fill="#f4f4f4" stroke="#999" stroke-width="0.7"/><path d="M-4 2a4 4 0 0 1 7-1M3 5a4 4 0 0 1-7 1" fill="none" stroke="#2f5fb0" stroke-width="1.4"/><path d="M3-1.500v3h-3zM-4 8.500v-3h3z" fill="#2f5fb0"/><rect x="5" y="0" width="5" height="5" fill="#f4a83a" stroke="#c97a10" stroke-width="0.5"/></g><g transform="translate(101 575.5)"><text x="-5" y="-5" font-size="5.8" fill="#444" text-anchor="middle" font-family="'Liberation Sans',sans-serif">SEM</text><path d="M-3 2l7-7 4 4-4 4-3-1z" fill="#f4e67a" stroke="#7a7a2a" stroke-width="1"/><rect x="-9" y="2" width="7" height="8" fill="#f4f0e0" stroke="#c99a40" stroke-width="0.9"/><rect x="-7.5" y="0.8" width="4" height="2" fill="#c99a40"/><rect x="0" y="4" width="9" height="6" fill="#eee" stroke="#999" stroke-width="0.6"/><text x="4.5" y="9" font-size="4.5" fill="#666" text-anchor="middle" font-family="'Liberation Sans',sans-serif">A B</text></g><g transform="translate(129 575.5)"><path d="M-9-3l6-5 6 5v6h-12z" fill="#e8eef2" stroke="#667" stroke-width="0.6"/><path d="M-10-3l7-6 7 6" fill="none" stroke="#4a5560" stroke-width="1.4"/><rect x="-5" y="-1" width="2.5" height="2.5" fill="#4a90e2"/><use href="#fold" transform="translate(3 5) scale(0.85)"/><use href="#garr" transform="translate(6 -5) scale(0.9)"/></g><g transform="translate(159 575.5)"><use href="#ypoly" transform="translate(0 -3) scale(0.95)"/><text x="0" y="-3.5" font-size="5" fill="#5a4a00" text-anchor="middle" font-weight="bold" font-family="'Liberation Sans',sans-serif">КП</text><use href="#arrd" transform="translate(7 2) scale(0.8)"/><g transform="translate(0 8.500)"><rect x="-9" y="-3" width="19" height="6" fill="#1e8a3c" rx="0.6"/><text x="0.5" y="2" font-size="4.3" fill="#fff" text-anchor="middle" font-weight="bold" font-family="'Liberation Sans',sans-serif">XML 2024</text></g></g><g transform="translate(185 575.5)"><use href="#ypoly" transform="translate(0 -3) scale(0.95)"/><text x="0" y="-3.5" font-size="5" fill="#5a4a00" text-anchor="middle" font-weight="bold" font-family="'Liberation Sans',sans-serif">КП</text><use href="#arrd" transform="translate(7 2) scale(0.8)"/><use href="#xml" transform="translate(3.5 8.5)"/></g><g transform="translate(211 575.5)"><path d="M-10-9h19v8l-11 11h-8z" fill="#cfcfcf"/><path d="M-10 10l19-19" fill="none" stroke="#e02020" stroke-width="1.5"/><circle cx="4" cy="-4" r="1.3" fill="#fff" stroke="#777" stroke-width="0.6"/><circle cx="-5" cy="5" r="1.3" fill="#fff" stroke="#777" stroke-width="0.6"/><text x="-4" y="-2" font-size="5.5" fill="#444" text-anchor="middle" font-family="'Liberation Sans',sans-serif">КПТ</text><use href="#arrd" transform="translate(5 0) scale(0.8)"/><use href="#W" transform="translate(5 11)"/></g><g transform="translate(237.5 575.5)"><path d="M-10-8h8l5 6-5 8h-8z" fill="#f0ee7a"/><path d="M-2-8h12v6h-7z" fill="#b9bcc2"/><path d="M3-2h7v8h-12z" fill="#c8a8dc"/><path d="M-2-8l5 6h7M3-2l-5 8" fill="none" stroke="#e02020" stroke-width="1.4"/><text x="-6" y="1" font-size="4.8" fill="#555" text-anchor="middle" font-family="'Liberation Sans',sans-serif">Ж1</text><text x="6" y="-3.5" font-size="4.5" fill="#555" text-anchor="middle" font-family="'Liberation Sans',sans-serif">П</text><text x="5" y="4" font-size="4.5" fill="#555" text-anchor="middle" font-family="'Liberation Sans',sans-serif">ОД</text><use href="#xml" transform="translate(3.5 8.5)"/></g><g transform="translate(264 575.5)"><path d="M-10-9h19l-19 19z" fill="#cfcfcf"/><path d="M9-9v19h-19z" fill="#b4dc7a"/><path d="M-10 10l19-19" fill="none" stroke="#e02020" stroke-width="1.5"/><circle cx="3" cy="-3" r="1.3" fill="#fff" stroke="#777" stroke-width="0.6"/><circle cx="-4" cy="4" r="1.3" fill="#fff" stroke="#777" stroke-width="0.6"/><text x="-4" y="-2" font-size="5.5" fill="#444" text-anchor="middle" font-family="'Liberation Sans',sans-serif">НП</text><use href="#xml" transform="translate(4 8.5)"/></g><g transform="translate(290 575.5)"><path d="M-10-7h8v8h-8z" fill="#f7e018" stroke="#e25a1a" stroke-width="0.8"/><circle cx="-10" cy="-7" r="1.2" fill="#e02020"/><circle cx="-2" cy="-7" r="1.2" fill="#e02020"/><circle cx="-2" cy="1" r="1.2" fill="#e02020"/><circle cx="-10" cy="1" r="1.2" fill="#e02020"/><text x="-6" y="-1.5" font-size="4.5" fill="#5a4a00" text-anchor="middle" font-weight="bold" font-family="'Liberation Sans',sans-serif">ВИ</text><rect x="0" y="-5" width="10" height="10" fill="#f0f0f0" stroke="#aaa" stroke-width="0.6"/><path d="M2-2h6M2 0h6M2 2h4" fill="none" stroke="#aaa" stroke-width="0.7"/><use href="#xml" transform="translate(3.5 8.5)"/></g><g transform="translate(316 575.5)"><path d="M-10-9h19v4l-15 15h-4z" fill="#f0cfa0"/><path d="M-8 10l17-17" fill="none" stroke="#e02020" stroke-width="1.6" stroke-dasharray="4 2"/><text x="-4" y="-1" font-size="6.5" fill="#6a4a2a" text-anchor="middle" font-family="'Liberation Sans',sans-serif">РФ</text><use href="#xml" transform="translate(4 8.5)"/></g><g transform="translate(347.5 575.5)"><rect x="-10" y="-9" width="4" height="3" fill="#999"/><rect x="-10" y="2" width="4" height="3" fill="#999"/><use href="#ypoly" transform="translate(1 -3) scale(0.95)"/><use href="#arrd" transform="translate(8 1) scale(0.8)"/><use href="#xml" transform="translate(3.5 8.5)"/></g><g transform="translate(372.5 575.5)"><g opacity="0.45"><path d="M-9-6l6-3 5 3-2 6-7 1z" fill="#a8d89a" stroke="#7ab87a" stroke-width="0.7"/><path d="M-4 0l8-3 4 6-7 6z" fill="#f4e89a" stroke="#e0a0a0" stroke-width="0.7"/><use href="#fl" transform="translate(5.5 -5.5) scale(0.86)"/></g></g><g transform="translate(399 575.5)"><use href="#ypoly" transform="translate(0 -3) scale(0.95)"/><text x="0" y="-3.5" font-size="5" fill="#5a4a00" text-anchor="middle" font-weight="bold" font-family="'Liberation Sans',sans-serif">ЗУ</text><use href="#arrd" transform="translate(7 2) scale(0.8)"/><use href="#xml" transform="translate(3.5 8.5)"/></g><g transform="translate(425 575.5)"><use href="#ypoly" transform="translate(0 -3) scale(0.95)"/><text x="0" y="-3.5" font-size="5" fill="#5a4a00" text-anchor="middle" font-weight="bold" font-family="'Liberation Sans',sans-serif">ЗУ</text><g transform="translate(3 8.500)"><rect x="-8" y="-3" width="16" height="6" fill="#1e8a3c" rx="0.6"/><text x="0" y="2" font-size="4.6" fill="#fff" text-anchor="middle" font-weight="bold" font-family="'Liberation Sans',sans-serif">XML 6</text></g></g><g transform="translate(455 575.5)"><rect x="-11" y="-9.5" width="22" height="13" fill="#f4ece0" stroke="#d89a9a" stroke-width="0.9"/><rect x="-9" y="-7" width="18" height="8" fill="#f7e018" stroke="#e02020" stroke-width="0.6"/><path d="M-4.500-7v8M0-7v8M4.500-7v8" fill="none" stroke="#e02020" stroke-width="0.6"/><circle cx="-9" cy="-7" r="0.9" fill="#e02020"/><circle cx="-9" cy="1" r="0.9" fill="#e02020"/><circle cx="-4.5" cy="-7" r="0.9" fill="#e02020"/><circle cx="-4.5" cy="1" r="0.9" fill="#e02020"/><circle cx="0" cy="-7" r="0.9" fill="#e02020"/><circle cx="0" cy="1" r="0.9" fill="#e02020"/><circle cx="4.5" cy="-7" r="0.9" fill="#e02020"/><circle cx="4.5" cy="1" r="0.9" fill="#e02020"/><circle cx="9" cy="-7" r="0.9" fill="#e02020"/><circle cx="9" cy="1" r="0.9" fill="#e02020"/><use href="#xml" transform="translate(3 8.5)"/></g><g transform="translate(485 575.5)"><path d="M-8-3l5-6 4 2 2-2 3 3-7 9z" fill="#f4f4d0" stroke="#4f8a3e" stroke-width="1.2"/><text x="-2" y="-1" font-size="3.5" fill="#333" text-anchor="middle" font-family="'Liberation Sans',sans-serif">К№</text><use href="#arrd" transform="translate(7 1) scale(0.9)"/><use href="#xml" transform="translate(3.5 8.5)"/></g><g transform="translate(511 575.5)"><path d="M-8-2l5-6 4 2 2-2 3 3-7 9z" fill="#aab0a8" stroke="#777" stroke-width="1"/><circle cx="-3" cy="-8" r="1" fill="#f4d21a"/><circle cx="3" cy="-8" r="1" fill="#f4d21a"/><circle cx="6" cy="-5" r="1" fill="#f4d21a"/><text x="-2" y="-1" font-size="3.5" fill="#333" text-anchor="middle" font-family="'Liberation Sans',sans-serif">К№</text><use href="#arrd" transform="translate(7 1) scale(0.9)"/><use href="#xml" transform="translate(3.5 8.5)"/></g><g transform="translate(537.5 575.5)"><path d="M-8-3l5-6 4 2 2-2 3 3-7 9z" fill="#f4b0b8" stroke="#c0506a" stroke-width="1.2" stroke-dasharray="2 1"/><text x="-2" y="-1" font-size="3.5" fill="#333" text-anchor="middle" font-family="'Liberation Sans',sans-serif">К№</text><use href="#arrd" transform="translate(7 1) scale(0.9)"/><use href="#xml" transform="translate(3.5 8.5)"/></g><g transform="translate(564 575.5)"><path d="M-9-2l8-7 6 6-8 7z" fill="#e4f0d8" stroke="#3f7a3e" stroke-width="1.3"/><text x="-1" y="-2" font-size="4" fill="#333" text-anchor="middle" font-family="'Liberation Sans',sans-serif">…</text><use href="#arrd" transform="translate(7 1) scale(0.9)"/><use href="#xml" transform="translate(3.5 8.5)"/></g><g transform="translate(590 575.5)"><path d="M-10-2l8-8 7 7-8 8z" fill="#4a8ae0" stroke="#1f5fc0" stroke-width="1.3"/><use href="#arrd" transform="translate(7 2) scale(0.9)"/><use href="#xml" transform="translate(3.5 8.5)"/></g><g transform="translate(616 575.5)"><path d="M-10-2l11-7 5 7-11 7z" fill="#f4f0c0" stroke="#667" stroke-width="0.8"/><text x="-3" y="1" font-size="4" fill="#333" text-anchor="middle" font-family="'Liberation Sans',sans-serif">К№</text><path d="M5-10l4 2-3 3z" fill="#eee" stroke="#888" stroke-width="0.6"/><use href="#arrd" transform="translate(5 1) scale(0.8)"/><use href="#W" transform="translate(5 11) scale(0.95)"/></g><g transform="translate(642.5 575.5)"><path d="M-10-3l6-6 4 4-3 3 4 3-4 4z" fill="#f7e018" stroke="#c9a020" stroke-width="0.8"/><path d="M3-4l6 6M9-4l-6 6" fill="none" stroke="#e02020" stroke-width="1.6"/><use href="#xml" transform="translate(3.5 8.5)"/></g><g transform="translate(672.5 575.5)"><g opacity="0.45"><path d="M-9-5l5-4 6 3-3 5-6 1z" fill="#f0b0b8" stroke="#a0c0a0" stroke-width="0.7"/><path d="M-6 2l8-3 5 6-8 5z" fill="#f0c0c0" stroke="#a0c0a0" stroke-width="0.7"/><circle cx="-9" cy="-5" r="1" fill="#7ab89a"/><circle cx="-4" cy="-9" r="1" fill="#7ab89a"/><circle cx="2" cy="-6" r="1" fill="#7ab89a"/><circle cx="-6" cy="2" r="1" fill="#7ab89a"/><circle cx="7" cy="5" r="1" fill="#7ab89a"/><circle cx="-1" cy="10" r="1" fill="#7ab89a"/><use href="#fl" transform="translate(5.5 -5.5) scale(0.86)"/></g></g><g transform="translate(702.5 575.5)"><g opacity="0.4"><rect x="-9" y="-7" width="14" height="12" fill="#eee" stroke="#aaa" stroke-width="0.7"/><path d="M-6-1l3-5 3 5z" fill="#7ac08a"/><use href="#fl" transform="translate(5.5 -5.5) scale(0.82)"/><use href="#xml" transform="translate(3 8.5)"/></g></g><g transform="translate(732.5 575.5)"><use href="#xml" transform="translate(-3 -8)"/><rect x="-7" y="-4" width="12" height="13" fill="#dfeafc" stroke="#7aa0d8" stroke-width="0.8"/><path d="M-7-4l3-2h12v13l-3 2" fill="none" stroke="#7aa0d8" stroke-width="0.7"/><path d="M0 0v8M-4 4h8" fill="none" stroke="#e02020" stroke-width="2.2"/></g><g transform="translate(759 575.5)"><use href="#xml" transform="translate(-3 -8)"/><rect x="-4" y="-4" width="12" height="13" fill="#f0f0f0" stroke="#888" stroke-width="0.8"/><path d="M-1 0h6M-1 3h6M-1 6h4" fill="none" stroke="#aaa" stroke-width="0.8"/><path d="M-9-4l9 10-1 2-2-.5-8-10z" fill="#e8852a" stroke="#a04a10" stroke-width="0.5"/><path d="M-9-4l2-1.500 1 1" fill="none" stroke="#e02020" stroke-width="1.2"/></g><g transform="translate(786 575.5)"><path d="M8-9l3 3-9 6-4-1 1-4z" fill="#e4e8ee" stroke="#333" stroke-width="0.9"/><path d="M7-7l2 2" fill="none" stroke="#2f6ec8" stroke-width="1.5"/><path d="M-3 0l-3 4" fill="none" stroke="#333" stroke-width="1.2"/><path d="M-9 8q3-3 5 0t4-1 5 0M-10 10h18" fill="none" stroke="#333" stroke-width="0.9"/></g><g transform="translate(815 575.5)"><use href="#gear" transform="translate(0 0) scale(1.1)"/></g><g transform="translate(841 575.5)"><path d="M-8-9h9l0 18h-9z" fill="#a05a2a"/><path d="M-8-9l7 3v18l-7-3z" fill="#e8893a"/><path d="M11 0h-8M6-4.500l-5 4.500 5 4.500z" fill="#2fa84a" stroke="#2fa84a" stroke-width="2.2"/></g><g transform="translate(877 575.5)"><path d="M-10-8l12 16" fill="none" stroke="#555" stroke-width="1"/><use href="#dots" transform="translate(-1 1) scale(0.95)"/><use href="#fl" transform="translate(6 -6) scale(0.9)"/></g><g transform="translate(903 575.5)"><path d="M-10-8l12 16" fill="none" stroke="#555" stroke-width="1"/><use href="#dots" transform="translate(-1 1) scale(0.95)"/><use href="#fl" transform="translate(6 -6) scale(0.9)"/></g><g transform="translate(929 575.5)"><path d="M-10-8l12 16" fill="none" stroke="#555" stroke-width="1"/><use href="#dots" transform="translate(-1 1) scale(0.95)"/><use href="#fl" transform="translate(6 -6) scale(0.9)"/></g><g transform="translate(955 575.5)"><rect x="-7" y="-7" width="9" height="14" fill="none" stroke="#555" stroke-width="0.8" stroke-dasharray="1.500 1"/><use href="#dots" transform="translate(-1 1) scale(0.95)"/><use href="#fl" transform="translate(6 -6) scale(0.9)"/><use href="#ptrg" transform="translate(5 5) scale(0.9)"/></g><g transform="translate(981 575.5)"><path d="M-9-5l6-3 4 4-3 8-7-2z" fill="none" stroke="#555" stroke-width="0.8" stroke-dasharray="1.500 1"/><use href="#dots" transform="translate(-1 1) scale(0.95)"/><use href="#fl" transform="translate(6 -6) scale(0.9)"/><use href="#ptrg" transform="translate(5 5) scale(0.9)"/></g><g transform="translate(1007.5 575.5)"><path d="M-9-3l7-5 6 4-3 10-8-1z" fill="#f7e84a" stroke="#c9a020" stroke-width="0.7"/><use href="#dots" transform="translate(-1 1) scale(0.95)"/><use href="#fl" transform="translate(6 -6) scale(0.9)"/><use href="#ptrg" transform="translate(5 5) scale(0.9)"/></g><g transform="translate(1042 575.5)"><path d="M-7-9l2 5M-3-9l-2 5v8l-3 4M-5 4l12-12" fill="none" stroke="#2aa58c" stroke-width="1.1"/><circle cx="-8" cy="8" r="1.4" fill="#2a6fd0"/><circle cx="7" cy="-8" r="1.4" fill="#e02020"/><text x="-1" y="0" font-size="5.5" fill="#333" text-anchor="middle" font-family="'Liberation Sans',sans-serif">L</text><text x="5" y="9" font-size="6.5" fill="#333" text-anchor="middle" font-family="'Liberation Sans',sans-serif">L</text></g><g transform="translate(1068 575.5)"><path d="M-9 6l15-13M-9 6h13" fill="none" stroke="#2aa58c" stroke-width="1.1"/><circle cx="-9" cy="6" r="1.4" fill="#2a6fd0"/><circle cx="6" cy="-7" r="1.4" fill="#2a6fd0"/><circle cx="4" cy="6" r="1.4" fill="#e02020"/><text x="-1" y="4" font-size="5.5" fill="#333" text-anchor="middle" font-family="'Liberation Sans',sans-serif">α</text><text x="6" y="12" font-size="6.5" fill="#333" text-anchor="middle" font-family="'Liberation Sans',sans-serif">L</text></g><g transform="translate(1094 575.5)"><path d="M-9 7L3 -8L8 7z" fill="none" stroke="#2aa58c" stroke-width="1.1"/><circle cx="-9" cy="7" r="1.4" fill="#2a6fd0"/><circle cx="3" cy="-8" r="1.4" fill="#2a6fd0"/><circle cx="8" cy="7" r="1.4" fill="#e02020"/><text x="-4" y="6" font-size="5.5" fill="#333" text-anchor="middle" font-family="'Liberation Sans',sans-serif">α</text><text x="3" y="3" font-size="5.5" fill="#333" text-anchor="middle" font-family="'Liberation Sans',sans-serif">β</text></g><g transform="translate(1120 575.5)"><path d="M-9 7L3 -8L8 5z" fill="none" stroke="#2aa58c" stroke-width="1.1"/><circle cx="-9" cy="7" r="1.4" fill="#2a6fd0"/><circle cx="3" cy="-8" r="1.4" fill="#2a6fd0"/><circle cx="8" cy="5" r="1.4" fill="#e02020"/><text x="-5" y="-5" font-size="5.5" fill="#333" text-anchor="middle" font-family="'Liberation Sans',sans-serif">L2</text><text x="1" y="5" font-size="5.5" fill="#333" text-anchor="middle" font-family="'Liberation Sans',sans-serif">L1</text></g><g transform="translate(1146 575.5)"><path d="M-8-3l8 2 8 6-15 3" fill="none" stroke="#2aa58c" stroke-width="1.1"/><circle cx="-8" cy="-3" r="1.4" fill="#2a6fd0"/><circle cx="0" cy="-1" r="1.4" fill="#2a6fd0"/><circle cx="8" cy="5" r="1.4" fill="#e02020"/><circle cx="-7" cy="8" r="1.4" fill="#2a6fd0"/><circle cx="4" cy="-6" r="1.4" fill="#2a6fd0"/><text x="-7" y="-6" font-size="5" fill="#333" text-anchor="middle" font-family="'Liberation Sans',sans-serif">L2</text><text x="2" y="-3" font-size="4.5" fill="#333" text-anchor="middle" font-family="'Liberation Sans',sans-serif">L3</text><text x="-5" y="6" font-size="5" fill="#333" text-anchor="middle" font-family="'Liberation Sans',sans-serif">L1</text></g><g transform="translate(1172.5 575.5)"><path d="M-9 7l9-8 9 5M0-1l5-8" fill="none" stroke="#2aa58c" stroke-width="1.1"/><circle cx="-9" cy="7" r="1.4" fill="#2a6fd0"/><circle cx="0" cy="-1" r="1.4" fill="#fff"/><circle cx="9" cy="4" r="1.4" fill="#2a6fd0"/><circle cx="5" cy="-9" r="1.4" fill="#2a6fd0"/><text x="-6" y="-3" font-size="5" fill="#333" text-anchor="middle" font-family="'Liberation Sans',sans-serif">L1</text><text x="8" y="-1" font-size="5" fill="#333" text-anchor="middle" font-family="'Liberation Sans',sans-serif">L2</text></g><g transform="translate(1198 575.5)"><path d="M-9 6l9-8" fill="none" stroke="#2aa58c" stroke-width="1.1"/><circle cx="-9" cy="6" r="1.4" fill="#2a6fd0"/><circle cx="0" cy="-8" r="1.4" fill="#2a6fd0"/></g><g transform="translate(20 603.5)"><use href="#arc" transform="translate(1 -2)"/><text x="0" y="9.5" font-size="7.5" fill="#555" text-anchor="middle" font-family="'Liberation Sans',sans-serif">M=?</text></g><g transform="translate(46 603.5)"><use href="#arc" transform="translate(1 -2)"/><text x="0" y="9.5" font-size="7.5" fill="#555" text-anchor="middle" font-family="'Liberation Sans',sans-serif">L=m</text></g><g transform="translate(72.5 603.5)"><use href="#arc" transform="translate(1 -2)"/><text x="0" y="9.5" font-size="6.5" fill="#555" text-anchor="middle" font-family="'Liberation Sans',sans-serif">S=m·m</text></g><g transform="translate(99 603.5)"><path d="M-9-1l5-7h10l2 6M-4-8v6M2-8v5M-9-1l5 6" fill="none" stroke="#2aa58c" stroke-width="1"/><circle cx="-9" cy="-1" r="1.3" fill="#2a6fd0"/><circle cx="-4" cy="-8" r="1.3" fill="#2a6fd0"/><circle cx="6" cy="-8" r="1.3" fill="#2a6fd0"/><circle cx="8" cy="-2" r="1.3" fill="#2a6fd0"/><circle cx="-4" cy="-2" r="1.3" fill="#e02020"/><circle cx="2" cy="-3" r="1.3" fill="#e02020"/><circle cx="-4" cy="5" r="1.3" fill="#e02020"/><use href="#xl" transform="translate(4 5)"/></g><g transform="translate(125 603.5)"><path d="M-9-1l5-7h10l2 6M-7-4l12-1M-9-1l5 6" fill="none" stroke="#2aa58c" stroke-width="1"/><path d="M-4-8l-3 8M6-8l-2 6" fill="none" stroke="#555" stroke-width="0.7"/><circle cx="-9" cy="-1" r="1.3" fill="#2a6fd0"/><circle cx="-4" cy="-8" r="1.3" fill="#2a6fd0"/><circle cx="6" cy="-8" r="1.3" fill="#2a6fd0"/><circle cx="8" cy="-2" r="1.3" fill="#2a6fd0"/><circle cx="0" cy="-4" r="1.3" fill="#e02020"/><circle cx="-4" cy="5" r="1.3" fill="#e02020"/><use href="#xl" transform="translate(4 5)"/></g><g transform="translate(151 603.5)"><path d="M-9-2l5-5 6 1 6 6-3 6" fill="none" stroke="#2f6ec8" stroke-width="1"/><path d="M-6 8l12-12M-4-7l2 12M2-6l1 10" fill="none" stroke="#e04040" stroke-width="0.8"/><circle cx="-9" cy="-2" r="1.3" fill="#2a6fd0"/><circle cx="-4" cy="-7" r="1.3" fill="#2a6fd0"/><circle cx="2" cy="-6" r="1.3" fill="#2a6fd0"/><circle cx="8" cy="0" r="1.3" fill="#2a6fd0"/><circle cx="5" cy="6" r="1.3" fill="#2a6fd0"/><circle cx="-2" cy="5" r="1.3" fill="#2a6fd0"/><path d="M-9 9l3-5" fill="none" stroke="#333" stroke-width="1"/></g><g transform="translate(177.5 603.5)"><path d="M-9-3l9-6 9 6M0-9v8l-9 8M0-1l9 8" fill="none" stroke="#2f6ec8" stroke-width="1"/><circle cx="-9" cy="-3" r="1.3" fill="#2a6fd0"/><circle cx="0" cy="-9" r="1.3" fill="#2a6fd0"/><circle cx="9" cy="-3" r="1.3" fill="#2a6fd0"/><circle cx="-9" cy="7" r="1.3" fill="#2a6fd0"/><circle cx="9" cy="7" r="1.3" fill="#2a6fd0"/><path d="M0 3v-6" fill="none" stroke="#333" stroke-width="1"/><path d="M-1.500-2l1.500-2.500 1.500 2.500z" fill="#333"/><text x="4" y="3" font-size="6" fill="#444" text-anchor="middle" font-family="'Liberation Sans',sans-serif">H</text></g><g transform="translate(204 603.5)"><text x="5" y="-3" font-size="8" fill="#555" text-anchor="middle" font-family="'Liberation Sans',sans-serif">H?</text><path d="M-9-8l6 6M4 3l5 5" fill="none" stroke="#2aa58c" stroke-width="1.1"/><circle cx="-9" cy="-8" r="1.3" fill="#2a6fd0"/><circle cx="9" cy="8" r="1.3" fill="#2a6fd0"/><path d="M-5 2h8M-1-2v8" fill="none" stroke="#3a8ae8" stroke-width="2"/></g><g transform="translate(237.5 603.5)"><path d="M-11 9v-11" fill="none" stroke="#2a6fd0" stroke-width="1.2"/><path d="M-11-4.500l2 3h-4z" fill="#2a6fd0"/><path d="M-9 6l5-5 6 1 6-5" fill="none" stroke="#e04040" stroke-width="1"/><path d="M-9 0l5-4 6 1 5-4" fill="none" stroke="#2f6ec8" stroke-width="1"/><circle cx="-9" cy="6" r="1.3" fill="#2a6fd0"/><circle cx="-4" cy="1" r="1.3" fill="#e02020"/><circle cx="2" cy="2" r="1.3" fill="#2a6fd0"/><circle cx="8" cy="-3" r="1.3" fill="#e02020"/><circle cx="-9" cy="0" r="1.3" fill="#2a6fd0"/><circle cx="-4" cy="-4" r="1.3" fill="#2a6fd0"/><circle cx="2" cy="-3" r="1.3" fill="#e02020"/><circle cx="7" cy="-7" r="1.3" fill="#2a6fd0"/></g><g transform="translate(264 603.5)"><path d="M-11 9v-11" fill="none" stroke="#2a6fd0" stroke-width="1.2"/><path d="M-11-4.500l2 3h-4z" fill="#2a6fd0"/><g transform="translate(0 2)"><path d="M-9 6l5-5 6 1 6-5" fill="none" stroke="#e04040" stroke-width="1"/><path d="M-9 0l5-4 6 1 5-4" fill="none" stroke="#2f6ec8" stroke-width="1"/><circle cx="-9" cy="6" r="1.3" fill="#2a6fd0"/><circle cx="-4" cy="1" r="1.3" fill="#e02020"/><circle cx="2" cy="2" r="1.3" fill="#2a6fd0"/><circle cx="8" cy="-3" r="1.3" fill="#e02020"/><circle cx="-9" cy="0" r="1.3" fill="#2a6fd0"/><circle cx="-4" cy="-4" r="1.3" fill="#2a6fd0"/><circle cx="2" cy="-3" r="1.3" fill="#e02020"/><circle cx="7" cy="-7" r="1.3" fill="#2a6fd0"/></g><text x="-1" y="-6" font-size="7" fill="#444" text-anchor="middle" font-family="'Liberation Sans',sans-serif">L=?</text></g><g transform="translate(290 603.5)"><path d="M-11 9v-11" fill="none" stroke="#2a6fd0" stroke-width="1.2"/><path d="M-11-4.500l2 3h-4z" fill="#2a6fd0"/><path d="M-9 6l5-5 6 1 6-5" fill="none" stroke="#e04040" stroke-width="1"/><path d="M-9 0l5-4 6 1 5-4" fill="none" stroke="#2f6ec8" stroke-width="1"/><circle cx="-9" cy="6" r="1.3" fill="#2a6fd0"/><circle cx="-4" cy="1" r="1.3" fill="#e02020"/><circle cx="2" cy="2" r="1.3" fill="#2a6fd0"/><circle cx="8" cy="-3" r="1.3" fill="#e02020"/><circle cx="-9" cy="0" r="1.3" fill="#2a6fd0"/><circle cx="-4" cy="-4" r="1.3" fill="#2a6fd0"/><circle cx="2" cy="-3" r="1.3" fill="#e02020"/><circle cx="7" cy="-7" r="1.3" fill="#2a6fd0"/><g transform="translate(-1.500 -1.500) scale(.6)"><path d="M-4-9l1.500 3 3.300-1-2 3 2 2.500-3.300-.5-1.500 3-1-3-3.300.5 2.500-2.500-2.500-3 3.300 1z" fill="#f060c0"/></g></g><g transform="translate(317.5 603.5)"><path d="M-8-6h14M-8 0h12M-8-6v14M6-6l4 12" fill="none" stroke="#2f6ec8" stroke-width="1"/><circle cx="-8" cy="-6" r="1.3" fill="#2a6fd0"/><circle cx="6" cy="-6" r="1.3" fill="#e02020"/><circle cx="-8" cy="0" r="1.3" fill="#e02020"/><circle cx="4" cy="0" r="1.3" fill="#2a6fd0"/><circle cx="-8" cy="8" r="1.3" fill="#2a6fd0"/><circle cx="10" cy="6" r="1.3" fill="#2a6fd0"/><text x="0" y="8" font-size="5.8" fill="#444" text-anchor="middle" font-family="'Liberation Sans',sans-serif">L=?</text><path d="M11 9v-11" fill="none" stroke="#2a6fd0" stroke-width="1.2"/><path d="M11-4.500l2 3h-4z" fill="#2a6fd0"/></g><g transform="translate(344 603.5)"><path d="M-7-7h11l5 6-4 8h-10l-4-6z" fill="none" stroke="#2aa58c" stroke-width="1"/><circle cx="-7" cy="-7" r="1.3" fill="#2a6fd0"/><circle cx="4" cy="-7" r="1.3" fill="#2a6fd0"/><circle cx="9" cy="-1" r="1.3" fill="#2a6fd0"/><circle cx="5" cy="7" r="1.3" fill="#2a6fd0"/><circle cx="-5" cy="7" r="1.3" fill="#2a6fd0"/><circle cx="-9" cy="1" r="1.3" fill="#2a6fd0"/><rect x="-5" y="-3" width="11" height="7" fill="#f4f4e4" stroke="#888" stroke-width="0.6"/><text x="0.5" y="3" font-size="5.8" fill="#444" text-anchor="middle" font-family="'Liberation Sans',sans-serif">L=?</text><path d="M-12 9v-11" fill="none" stroke="#2a6fd0" stroke-width="1.2"/><path d="M-12-4.500l2 3h-4z" fill="#2a6fd0"/></g><g transform="translate(370 603.5)"><path d="M-9-8h14M-9-8v14M-9 0h8M5-8v8l5 8" fill="none" stroke="#2f6ec8" stroke-width="1"/><circle cx="-9" cy="-8" r="1.3" fill="#2a6fd0"/><circle cx="5" cy="-8" r="1.3" fill="#e02020"/><circle cx="-2" cy="-8" r="1.3" fill="#e02020"/><circle cx="-9" cy="0" r="1.3" fill="#2a6fd0"/><circle cx="-1" cy="0" r="1.3" fill="#2a6fd0"/><circle cx="-9" cy="6" r="1.3" fill="#2a6fd0"/><circle cx="10" cy="8" r="1.3" fill="#2a6fd0"/><use href="#ptrg" transform="translate(3 3) scale(0.95)"/></g><g transform="translate(396 603.5)"><path d="M-5-8h11v8M-5-8l-6 9 6 7h8" fill="none" stroke="#2aa58c" stroke-width="1"/><circle cx="-5" cy="-8" r="1.3" fill="#2a6fd0"/><circle cx="6" cy="-8" r="1.3" fill="#2a6fd0"/><circle cx="6" cy="0" r="1.3" fill="#e02020"/><circle cx="-11" cy="1" r="1.3" fill="#2a6fd0"/><circle cx="-5" cy="8" r="1.3" fill="#2a6fd0"/><circle cx="0" cy="-3" r="1.3" fill="#e02020"/><circle cx="-4" cy="-3" r="1.3" fill="#e02020"/><use href="#ptrg" transform="translate(5 4) scale(0.95)"/></g><g transform="translate(422.5 603.5)"><path d="M-10 5l18-13 3 3-18 13z" fill="#f4e24a"/><path d="M-10 0l20-9M-10 5l20-9M-10 10l20-9" fill="none" stroke="#2aa58c" stroke-width="0.9"/><circle cx="-4" cy="-3" r="1.3" fill="#2a6fd0"/><circle cx="4" cy="-6" r="1.3" fill="#e02020"/><circle cx="-3" cy="2" r="1.3" fill="#e02020"/><circle cx="5" cy="-2" r="1.3" fill="#2a6fd0"/><circle cx="-2" cy="7" r="1.3" fill="#2a6fd0"/><circle cx="6" cy="3" r="1.3" fill="#e02020"/><path d="M1-11v4M0 11v-3" fill="none" stroke="#e02020" stroke-width="0.9"/></g><g transform="translate(456 603.5)"><g opacity="0.35"><use href="#fl" transform="translate(-1.5 -3.5) scale(1.09)"/><text x="6" y="9" font-size="11" fill="#444" text-anchor="middle" font-family="'Liberation Sans',sans-serif">a</text><circle cx="-6" cy="6" r="1.2" fill="#e04040"/><circle cx="-2" cy="9" r="1.2" fill="#4a80d0"/><circle cx="1" cy="5" r="1.2" fill="#e04040"/></g></g><g transform="translate(482.5 603.5)"><g opacity="0.35"><text x="-5" y="-1" font-size="12" fill="#444" text-anchor="middle" font-family="'Liberation Sans',sans-serif">a</text><use href="#fl" transform="translate(5.5 -3.5) scale(1.01)"/><circle cx="-5" cy="6" r="2.5" fill="none" stroke="#e04040" stroke-width="0.8"/><circle cx="4" cy="7" r="2.5" fill="none" stroke="#e04040" stroke-width="0.8"/><circle cx="-5" cy="6" r="0.9" fill="#4a80d0"/><circle cx="4" cy="7" r="0.9" fill="#4a80d0"/></g></g><g transform="translate(512.5 603.5)"><g opacity="0.4"><path d="M-10-8h7v4h4v4h-11z" fill="#f4e24a"/><use href="#fl" transform="translate(5.5 -4.5) scale(0.94)"/><rect x="-9" y="3" width="3" height="3" fill="none" stroke="#777" stroke-width="0.8"/><rect x="-5" y="3" width="3" height="3" fill="none" stroke="#777" stroke-width="0.8"/><rect x="0" y="2" width="8" height="7" fill="#9ad0c0" stroke="#5a9a8a" stroke-width="0.7"/></g></g><g transform="translate(539 603.5)"><path d="M-10-8h7v4h-3v3h-4z" fill="#f0dc2a" stroke="#a09010" stroke-width="0.6"/><path d="M10-8h-7v4h3v3h4z" fill="#f0dc2a" stroke="#a09010" stroke-width="0.6"/><path d="M-2-8l3 3M1-8l-3 3" fill="none" stroke="#e02020" stroke-width="1.1"/><path d="M-3 0h6" fill="none" stroke="#2a6fd0" stroke-width="1.2"/><path d="M2-2l3 2-3 2z" fill="#2a6fd0"/><rect x="-9" y="2" width="3.5" height="3.5" fill="none" stroke="#555" stroke-width="1"/><rect x="-4.5" y="2" width="3.5" height="3.5" fill="none" stroke="#555" stroke-width="1"/><rect x="-9" y="6.5" width="3.5" height="3.5" fill="none" stroke="#555" stroke-width="1"/><rect x="-4.5" y="6.5" width="3.5" height="3.5" fill="none" stroke="#555" stroke-width="1"/><rect x="2" y="2" width="8" height="8" fill="#3a8a7a" stroke="#2a6a5a" stroke-width="0.6"/><rect x="3.5" y="3.5" width="2" height="2" fill="#cfe"/><rect x="6.5" y="3.5" width="2" height="2" fill="#cfe"/><rect x="3.5" y="6.5" width="2" height="2" fill="#cfe"/><rect x="6.5" y="6.5" width="2" height="2" fill="#cfe"/></g><g transform="translate(570 603.5)"><path d="M-9-8l5-3 8 8-8 8-5-3 5-5z" fill="#ece43a" stroke="#7a7a1a" stroke-width="0.8"/><rect x="-1" y="2" width="11" height="8" fill="#e8e8e8" stroke="#666" stroke-width="0.8"/><text x="4.5" y="9" font-size="6" fill="#555" text-anchor="middle" font-weight="bold" font-family="'Liberation Sans',sans-serif">&lt;&gt;</text></g><g transform="translate(595 603.5)"><path d="M-9-8l5-3 8 8-8 8-5-3 5-5z" fill="#ece43a" stroke="#7a7a1a" stroke-width="0.8"/><rect x="-1" y="2" width="11" height="8" fill="#e8e8e8" stroke="#666" stroke-width="0.8"/><text x="4.5" y="1" font-size="3.8" fill="#555" text-anchor="middle" font-family="'Liberation Sans',sans-serif">OPEN</text><text x="4.5" y="9" font-size="6" fill="#555" text-anchor="middle" font-weight="bold" font-family="'Liberation Sans',sans-serif">&lt;&gt;</text></g><g transform="translate(626 603.5)"><path d="M-9-5l13-2.500 1 9.500-7 6-6-5z" fill="none" stroke="#3fae98" stroke-width="1.3"/><circle cx="-9" cy="-5" r="1.5" fill="#2a6fd0"/><circle cx="4" cy="-7.5" r="1.5" fill="#2a6fd0"/><circle cx="5" cy="2" r="1.5" fill="#2a6fd0"/><circle cx="-2" cy="8" r="1.5" fill="#2a6fd0"/><circle cx="-8" cy="3" r="1.5" fill="#2a6fd0"/><circle cx="-8" cy="-5" r="1.5" fill="#e02020"/><text x="-11" y="-7" font-size="5" fill="#333" text-anchor="middle" font-family="'Liberation Sans',sans-serif">1</text></g><g transform="translate(652.5 603.5)"><path d="M-9-5l13-2.500 1 9.500-7 6-6-5z" fill="none" stroke="#3fae98" stroke-width="1.3"/><circle cx="-9" cy="-5" r="1.5" fill="#2a6fd0"/><circle cx="4" cy="-7.5" r="1.5" fill="#2a6fd0"/><circle cx="5" cy="2" r="1.5" fill="#2a6fd0"/><circle cx="-2" cy="8" r="1.5" fill="#2a6fd0"/><circle cx="-8" cy="3" r="1.5" fill="#2a6fd0"/><text x="-11.5" y="-7" font-size="5" fill="#333" text-anchor="middle" font-family="'Liberation Sans',sans-serif">1</text><text x="5" y="-10" font-size="5" fill="#333" text-anchor="middle" font-family="'Liberation Sans',sans-serif">2</text><text x="8.5" y="4" font-size="5" fill="#333" text-anchor="middle" font-family="'Liberation Sans',sans-serif">3</text><text x="1" y="11" font-size="5" fill="#333" text-anchor="middle" font-family="'Liberation Sans',sans-serif">4</text><text x="-11.5" y="8" font-size="5" fill="#333" text-anchor="middle" font-family="'Liberation Sans',sans-serif">5</text></g><g transform="translate(677.5 603.5)"><path d="M-9-5l13-2.500 1 9.500-7 6-6-5z" fill="none" stroke="#e04040" stroke-width="1.3"/><circle cx="-9" cy="-5" r="1.5" fill="#2a6fd0"/><circle cx="4" cy="-7.5" r="1.5" fill="#2a6fd0"/><circle cx="5" cy="2" r="1.5" fill="#2a6fd0"/><circle cx="-2" cy="8" r="1.5" fill="#2a6fd0"/><circle cx="-8" cy="3" r="1.5" fill="#2a6fd0"/><text x="-11.5" y="-7" font-size="5" fill="#333" text-anchor="middle" font-family="'Liberation Sans',sans-serif">1</text><text x="5" y="-10" font-size="5" fill="#333" text-anchor="middle" font-family="'Liberation Sans',sans-serif">2</text><text x="8.5" y="4" font-size="5" fill="#333" text-anchor="middle" font-family="'Liberation Sans',sans-serif">3</text><text x="1" y="11" font-size="5" fill="#333" text-anchor="middle" font-family="'Liberation Sans',sans-serif">4</text><text x="-11.5" y="8" font-size="5" fill="#333" text-anchor="middle" font-family="'Liberation Sans',sans-serif">5</text></g><g transform="translate(704 603.5)"><path d="M-9-5l13-2.500 1 9.500-7 6-6-5z" fill="#6ac4ec" stroke="#2f6ec8" stroke-width="1.2"/><circle cx="-9" cy="-5" r="1.5" fill="#2a6fd0"/><circle cx="4" cy="-7.5" r="1.5" fill="#2a6fd0"/><circle cx="5" cy="2" r="1.5" fill="#2a6fd0"/><circle cx="-2" cy="8" r="1.5" fill="#2a6fd0"/><circle cx="-8" cy="3" r="1.5" fill="#2a6fd0"/><text x="5" y="10" font-size="5.5" fill="#444" text-anchor="middle" font-family="'Liberation Sans',sans-serif">Area</text></g><g transform="translate(730 603.5)"><path d="M-9-5l13-2.500 1 9.500-7 6-6-5z" fill="none" stroke="#3fae98" stroke-width="1.3"/><circle cx="-9" cy="-5" r="1.5" fill="#2a6fd0"/><circle cx="4" cy="-7.5" r="1.5" fill="#2a6fd0"/><circle cx="5" cy="2" r="1.5" fill="#2a6fd0"/><circle cx="-2" cy="8" r="1.5" fill="#2a6fd0"/><circle cx="-8" cy="3" r="1.5" fill="#2a6fd0"/><text x="9.5" y="-4" font-size="6" fill="#444" text-anchor="middle" font-family="'Liberation Sans',sans-serif">X</text><text x="9.5" y="2" font-size="6" fill="#444" text-anchor="middle" font-family="'Liberation Sans',sans-serif">Y</text><text x="9.5" y="8" font-size="6" fill="#444" text-anchor="middle" font-family="'Liberation Sans',sans-serif">H</text></g><g transform="translate(756 603.5)"><path d="M-9-5l13-2.500 1 9.500-7 6-6-5z" fill="none" stroke="#3fae98" stroke-width="1.3"/><circle cx="-9" cy="-5" r="1.5" fill="#2a6fd0"/><circle cx="4" cy="-7.5" r="1.5" fill="#2a6fd0"/><circle cx="5" cy="2" r="1.5" fill="#2a6fd0"/><circle cx="-2" cy="8" r="1.5" fill="#2a6fd0"/><circle cx="-8" cy="3" r="1.5" fill="#2a6fd0"/><text x="9.5" y="-2" font-size="6.5" fill="#444" text-anchor="middle" font-family="'Liberation Sans',sans-serif">B</text><text x="9.5" y="5" font-size="6.5" fill="#444" text-anchor="middle" font-family="'Liberation Sans',sans-serif">L</text></g><g transform="translate(782.5 603.5)"><path d="M-9-5l13-2.500 1 9.500-7 6-6-5z" fill="none" stroke="#3fae98" stroke-width="1.3"/><circle cx="-9" cy="-5" r="1.5" fill="#2a6fd0"/><circle cx="4" cy="-7.5" r="1.5" fill="#2a6fd0"/><circle cx="5" cy="2" r="1.5" fill="#2a6fd0"/><circle cx="-2" cy="8" r="1.5" fill="#2a6fd0"/><circle cx="-8" cy="3" r="1.5" fill="#2a6fd0"/><text x="6" y="10" font-size="5.5" fill="#444" text-anchor="middle" font-family="'Liberation Sans',sans-serif">Len</text></g><g transform="translate(812.5 603.5)"><rect x="-10" y="-8" width="6" height="6" fill="#f0e8a0" stroke="#c060d0" stroke-width="0.9"/><rect x="-3" y="-8" width="6" height="6" fill="#a0d8a0" stroke="#c060d0" stroke-width="0.9"/><rect x="-10" y="0" width="6" height="6" fill="#f0c070" stroke="#c060d0" stroke-width="0.9"/><use href="#fl" transform="translate(6.5 -5.5) scale(0.86)"/><rect x="-2" y="1" width="12" height="7" fill="#4a8ae0" stroke="#2a5ab0" stroke-width="0.6"/><text x="4" y="6.5" font-size="5" fill="#fff" text-anchor="middle" font-weight="bold" font-family="'Liberation Sans',sans-serif">PDF</text></g><g transform="translate(839 603.5)"><rect x="-10" y="-10" width="19" height="14" fill="none" stroke="#555" stroke-width="0.8" stroke-dasharray="1.500 1"/><path d="M-8 0l6-7 5 3-3 4 3 4-5 3z" fill="#f7e018" stroke="#e25a1a" stroke-width="0.7"/><circle cx="4" cy="-6" r="1" fill="#e02020"/><circle cx="7" cy="-3" r="1" fill="#e02020"/><circle cx="5" cy="-1" r="1" fill="#e02020"/><rect x="-1" y="2" width="12" height="7" fill="#4a8ae0" stroke="#2a5ab0" stroke-width="0.6"/><text x="5" y="7.5" font-size="5" fill="#fff" text-anchor="middle" font-weight="bold" font-family="'Liberation Sans',sans-serif">PDF</text></g><g transform="translate(875.5 603.5)"><path d="M-12-2l6-6 5 3-4 4 2 4-4 3z" fill="#f7e84a" stroke="#e02020" stroke-width="0.9"/><circle cx="-12" cy="-2" r="1.2" fill="#e02020"/><circle cx="-6" cy="-8" r="1.2" fill="#e02020"/><circle cx="-1" cy="-5" r="1.2" fill="#e02020"/><circle cx="-5" cy="-1" r="1.2" fill="#e02020"/><circle cx="-7" cy="6" r="1.2" fill="#e02020"/><rect x="-3" y="-9" width="5" height="5" fill="#d8a0e8" stroke="#9a50c0" stroke-width="0.7"/><use href="#arrd" transform="translate(2 0) scale(0.8)"/><use href="#W" transform="translate(2 11) scale(0.95)"/></g><g transform="translate(899 603.5)"><path d="M-10-1l6-7 5 3-4 4 3 4-5 3z" fill="#f7e84a" stroke="#e02020" stroke-width="1.1"/><circle cx="-10" cy="-1" r="1.2" fill="#e02020"/><circle cx="-4" cy="-8" r="1.2" fill="#e02020"/><use href="#arrd" transform="translate(5 0) scale(0.8)"/><use href="#W" transform="translate(5 11) scale(0.95)"/></g><g transform="translate(926 603.5)"><rect x="-9" y="-5" width="10" height="13" fill="#e4e4e4" stroke="#888" stroke-width="0.8"/><path d="M-7-2h6M-7 1h6M-7 4h6" fill="none" stroke="#999" stroke-width="0.9"/><rect x="-7" y="-7" width="10" height="13" fill="none" stroke="#888" stroke-width="0.6"/><use href="#fl" transform="translate(5.5 -5.5) scale(0.9)"/><use href="#W" transform="translate(5 11) scale(0.95)"/></g><g transform="translate(952.5 603.5)"><path d="M-10-1l6-7h7v6h-4l2 5-6 4z" fill="#f7e018" stroke="#e25a1a" stroke-width="0.8"/><circle cx="-10" cy="-1" r="1.2" fill="#e02020"/><circle cx="-4" cy="-8" r="1.2" fill="#e02020"/><circle cx="3" cy="-8" r="1.2" fill="#e02020"/><circle cx="-5" cy="7" r="1.2" fill="#e02020"/><use href="#xl" transform="translate(5 5)"/></g><g transform="translate(978.6 603.5)"><path d="M-4-4l7-5 6 5-3 6h-8z" fill="#f7d018" stroke="#d4a010" stroke-width="0.7"/><circle cx="-6" cy="1" r="4" fill="none" stroke="#2f5fb0" stroke-width="1"/><circle cx="-6" cy="1" r="1.6" fill="#e02020"/><use href="#arrd" transform="translate(6 2) scale(0.8)"/><use href="#W" transform="translate(5 11) scale(0.95)"/></g><g transform="translate(1004.8 603.5)"><circle cx="-6" cy="2" r="4" fill="none" stroke="#2f5fb0" stroke-width="1"/><circle cx="-6" cy="2" r="1.6" fill="#e02020"/><circle cx="-9" cy="-6" r="1.2" fill="#2a6fd0"/><circle cx="-1" cy="-3" r="1.2" fill="#e02020"/><circle cx="0" cy="4" r="1.2" fill="#2a6fd0"/><use href="#fl" transform="translate(5.5 -5.5) scale(0.9)"/><use href="#W" transform="translate(5 11) scale(0.95)"/></g><g transform="translate(1035 603.5)"><text x="-3" y="-4" font-size="6.5" fill="#555" text-anchor="middle" font-family="'Liberation Sans',sans-serif">GPS</text><rect x="4" y="-8" width="6" height="5" fill="none" stroke="#888" stroke-width="0.7"/><use href="#dots" transform="translate(-4 4) scale(0.6)"/><rect x="-1" y="0" width="11" height="10" fill="#fff" stroke="#2f5fb0" stroke-width="1"/><rect x="-1" y="0" width="11" height="2" fill="#2f5fb0"/><circle cx="2" cy="5" r="0.9" fill="#2a6fd0"/><circle cx="6" cy="4" r="0.9" fill="#e02020"/><circle cx="4" cy="8" r="0.9" fill="#2a6fd0"/><circle cx="8" cy="7" r="0.9" fill="#2a6fd0"/></g><g transform="translate(1061 603.5)"><g opacity="0.3"><text x="-3" y="-4" font-size="6.5" fill="#555" text-anchor="middle" font-family="'Liberation Sans',sans-serif">GPS</text><use href="#fl" transform="translate(5.5 -3.5) scale(0.86)"/><use href="#dots" transform="translate(-4 4) scale(0.6)"/><use href="#W" transform="translate(5 11) scale(0.95)"/></g></g><g transform="translate(1097 603.5)"><path d="M-9 8l16-16 3 3-16 16z" fill="#f4c22a" stroke="#d49a10" stroke-width="0.5"/><path d="M-10 5q0-10 12-14" fill="none" stroke="#2f6ec8" stroke-width="0.9"/><circle cx="-10" cy="5" r="1.3" fill="#2a6fd0"/><circle cx="-9" cy="-1" r="1.3" fill="#2a6fd0"/><circle cx="-6" cy="-5" r="1.3" fill="#2a6fd0"/><circle cx="-2" cy="-8" r="1.3" fill="#2a6fd0"/><circle cx="2" cy="-9" r="1.3" fill="#2a6fd0"/></g><g transform="translate(1121.6 603.5)"><path d="M-2 9l12-12 3 3-12 12z" fill="#f4c22a" stroke="#d49a10" stroke-width="0.5"/><path d="M-5-4l-5-5M-5-4l5-5M-5-4l-5 5M-5-4l5 5" fill="none" stroke="#3a8ae8" stroke-width="2.4"/><path d="M-10-9h4l-4 4zM0-9h-4l4 4zM-10 1h4l-4-4zM0 1h-4l4-4z" fill="#3a8ae8"/><circle cx="-5" cy="-4" r="2.5" fill="#3a8ae8"/></g><g transform="translate(1146.4 603.5)"><rect x="-10" y="-9" width="14" height="19" fill="#eaf2fc"/><path d="M-10-9v19M-7.200-9v19M-4.400-9v19M-1.600-9v19M1.200-9v19M4-9v19M-10-9h14M-10-6h14M-10-3h14M-10 0h14M-10 3h14M-10 6h14M-10 9h14" fill="none" stroke="#5a9ae8" stroke-width="0.7"/><text x="9" y="-2" font-size="5" fill="#444" text-anchor="middle" font-family="'Liberation Sans',sans-serif">MM</text></g><g transform="translate(1172.5 603.5)"><rect x="-10" y="-9" width="14" height="19" fill="#eaf2fc"/><path d="M-10-9v19M-7.200-9v19M-4.400-9v19M-1.600-9v19M1.200-9v19M4-9v19M-10-9h14M-10-6h14M-10-3h14M-10 0h14M-10 3h14M-10 6h14M-10 9h14" fill="none" stroke="#5a9ae8" stroke-width="0.7"/><text x="8" y="-2" font-size="5.5" fill="#444" text-anchor="middle" font-family="'Liberation Sans',sans-serif">M</text></g><g transform="translate(1197 603.5)"><path d="M-8 2l8-10 6 3" fill="#fff" stroke="#e02020" stroke-width="1"/><rect x="-9" y="5" width="14" height="3" fill="#f4c22a"/></g><g transform="translate(15.5 112)"><rect x="-13" y="-13" width="26" height="26" fill="#f6f6f6" stroke="#fff" stroke-width="1"/><path d="M-13 13h26v-26" fill="none" stroke="#c4c4c4" stroke-width="1"/><use href="#pen" transform="translate(1 0) scale(1.15)"/><path d="M9.500 7l3 2.500-3 2.500z" fill="#333"/></g><g transform="translate(15.5 138.5)"><rect x="-13" y="-13" width="26" height="26" fill="#f6f6f6" stroke="#fff" stroke-width="1"/><path d="M-13 13h26v-26" fill="none" stroke="#c4c4c4" stroke-width="1"/><path d="M-12 2l8 8M-12 6l6 5M-11 10h8M-8 2v9" fill="none" stroke="#999" stroke-width="0.7"/><use href="#pen" transform="translate(2 -1) scale(1.15)"/><path d="M9.500 7l3 2.500-3 2.500z" fill="#333"/></g><g transform="translate(15.5 164.5)"><use href="#pen" transform="translate(3 0) scale(1.1)"/><path d="M-11 4l4 4" fill="none" stroke="#333" stroke-width="0.9"/><text x="-6" y="1" font-size="12" fill="#2a6fd0" text-anchor="middle" font-weight="bold" font-family="'Liberation Sans',sans-serif">?</text><path d="M9.500 7l3 2.500-3 2.500z" fill="#333"/></g><g transform="translate(15.5 190.5)"><rect x="-5" y="-2" width="10" height="10" fill="#e8eef2" stroke="#9aa" stroke-width="0.8" rx="1.5"/><rect x="-5" y="-2" width="10" height="2" fill="#cfd8de"/><path d="M-3-2l-2-7M0-2v-8M3-2l2-7" fill="none" stroke="#b07a3a" stroke-width="1.2"/><circle cx="-5" cy="-9" r="1.3" fill="#e04040"/><circle cx="0" cy="-10" r="1.3" fill="#3a9a4a"/><circle cx="5" cy="-9" r="1.3" fill="#e0a020"/><circle cx="-2" cy="3" r="1.5" fill="#e04040"/><circle cx="2" cy="4" r="1.5" fill="#3a7de0"/><path d="M9.500 7l3 2.500-3 2.500z" fill="#333"/></g><g transform="translate(15.5 217)"><g transform="translate(-3 0)"><path d="M-3-9l5 13M3-9l-5 13" fill="none" stroke="#7a8590" stroke-width="1.5"/><circle cx="-3.5" cy="6" r="2.5" fill="none" stroke="#2f7de0" stroke-width="1.4"/><circle cx="3.5" cy="6" r="2.5" fill="none" stroke="#2f7de0" stroke-width="1.4"/></g><rect x="3" y="-2" width="7" height="8" fill="#3a9a4a"/><rect x="2" y="-3" width="9" height="1.5" fill="#c9a060"/><rect x="2" y="6" width="9" height="1.5" fill="#c9a060"/><path d="M9.500 7l3 2.500-3 2.500z" fill="#333"/></g><g transform="translate(15.5 243.5)"><path d="M-7-7l14 14M7-7l-14 14" fill="none" stroke="#e02020" stroke-width="2.6"/><path d="M9.500 7l3 2.500-3 2.500z" fill="#333"/></g><g transform="translate(15.5 270)"><rect x="-13" y="-13" width="26" height="26" fill="#f6f6f6" stroke="#fff" stroke-width="1"/><path d="M-13 13h26v-26" fill="none" stroke="#c4c4c4" stroke-width="1"/><path d="M-11 0h22M0-9v18" fill="none" stroke="#333" stroke-width="0.9"/><circle cx="0" cy="0" r="1.6" fill="#2a6fd0"/><path d="M-1.500-6.500h3l-1.500 2.500zM-1.500 6.500h3l-1.500-2.500z" fill="#2a6fd0"/><path d="M9.500 7l3 2.500-3 2.500z" fill="#333"/></g><g transform="translate(15.5 296)"><rect x="-13" y="-13" width="26" height="26" fill="#f6f6f6" stroke="#fff" stroke-width="1"/><path d="M-13 13h26v-26" fill="none" stroke="#c4c4c4" stroke-width="1"/><path d="M-11 2q4-6 8-2t8 0 6-3" fill="none" stroke="#e03030" stroke-width="1.2"/><path d="M-11 2q4-6 8-2" fill="none" stroke="#2a6fd0" stroke-width="1.2"/><circle cx="-11" cy="2" r="1.3" fill="#2a6fd0"/><circle cx="-3" cy="0" r="1.3" fill="#e03030"/><circle cx="5" cy="0" r="1.3" fill="#2a6fd0"/><circle cx="11" cy="-3" r="1.3" fill="#2a6fd0"/><path d="M9.500 7l3 2.500-3 2.500z" fill="#333"/></g><g transform="translate(15.5 322)"><rect x="-13" y="-13" width="26" height="26" fill="#f6f6f6" stroke="#fff" stroke-width="1"/><path d="M-13 13h26v-26" fill="none" stroke="#c4c4c4" stroke-width="1"/><path d="M-10 6l14-14 4 4-14 14z" fill="#f4c22a" stroke="#d49a10" stroke-width="0.6"/><path d="M-6 4l1.500 1.500M-3 1l1.500 1.500M0-2l1.500 1.500M3-5l1.500 1.500" fill="none" stroke="#8a6a10" stroke-width="0.8"/><path d="M9.500 7l3 2.500-3 2.500z" fill="#333"/></g><g transform="translate(15.5 348)"><use href="#flL" transform="translate(0 -2)"/><text x="2" y="10" font-size="11" fill="#333" text-anchor="middle" font-family="'Liberation Sans',sans-serif">a</text><path d="M9.500 7l3 2.500-3 2.500z" fill="#333"/></g><g transform="translate(15.5 375)"><rect x="-13" y="-13" width="26" height="26" fill="#fff" stroke="#ddd" stroke-width="1"/><text x="0" y="6" font-size="17" fill="#555" text-anchor="middle" font-family="'Liberation Sans',sans-serif">H</text><path d="M9.500 7l3 2.500-3 2.500z" fill="#333"/></g><g transform="translate(15.5 401)"><text x="0" y="5" font-size="13" fill="#555" text-anchor="middle" font-family="'Liberation Sans',sans-serif">Abc</text><path d="M9.500 7l3 2.500-3 2.500z" fill="#333"/></g><g transform="translate(15.5 425)"><use href="#flL" transform="translate(2 1)"/><path d="M9.500 7l3 2.500-3 2.500z" fill="#333"/></g><g transform="translate(15.5 451)"><path d="M0-6v4M-7 2v-4h14v4M0-2v4" fill="none" stroke="#2a8a70" stroke-width="1"/><rect x="-2" y="-10" width="4" height="4" fill="#fff" stroke="#2a8a70" stroke-width="1"/><rect x="-9" y="2" width="4" height="4" fill="#fff" stroke="#2a8a70" stroke-width="1"/><rect x="-2" y="2" width="4" height="4" fill="#fff" stroke="#2a8a70" stroke-width="1"/><rect x="5" y="2" width="4" height="4" fill="#fff" stroke="#2a8a70" stroke-width="1"/><path d="M9.500 7l3 2.500-3 2.500z" fill="#333"/></g><g transform="translate(15.5 484)"><rect x="0" y="-9" width="8" height="3" fill="#5c9a2e"/><rect x="-4" y="-6" width="12" height="4" fill="#5c9a2e"/><path d="M9 6q-8-6-16-1" fill="none" stroke="#6a6f75" stroke-width="2.8"/><path d="M-10 0l0 8 7-3z" fill="#6a6f75"/><circle cx="2" cy="1" r="0.8" fill="#333"/><circle cx="5" cy="1" r="0.8" fill="#333"/><circle cx="8" cy="1" r="0.8" fill="#333"/></g><g transform="translate(15.5 505.5)"><path d="M-9 5q8-8 16-2" fill="none" stroke="#2f7de0" stroke-width="3.2"/><path d="M10-2l0 9-8-4z" fill="#2f7de0"/></g><g transform="translate(15.5 532)"><rect x="-8" y="-7" width="12" height="11" fill="#3a9a4a" stroke="#fff" stroke-width="1"/><rect x="-4" y="-4" width="12" height="11" fill="#e04a4a" stroke="#fff" stroke-width="1"/><rect x="-1" y="-1" width="11" height="10" fill="#3a7de0" stroke="#fff" stroke-width="1"/><path d="M-6-9h10" fill="none" stroke="#e02020" stroke-width="1.2"/><path d="M9.500 7l3 2.500-3 2.500z" fill="#333"/></g><g transform="translate(44 112)"><use href="#pen" transform="translate(2 -1) scale(1.15)"/><path d="M-11 1l6 6" fill="none" stroke="#333" stroke-width="0.9"/></g><g transform="translate(44 138.5)"><path d="M-10-4q-1 8 3 10t9 1" fill="none" stroke="#2f6ec8" stroke-width="0.9" stroke-dasharray="2 1.500"/><circle cx="-10" cy="-4" r="1.4" fill="#2a6fd0"/><circle cx="-8" cy="3" r="1.4" fill="#2a6fd0"/><circle cx="-3" cy="7" r="1.4" fill="#2a6fd0"/><circle cx="3" cy="7" r="1.4" fill="#2a6fd0"/><use href="#pen" transform="translate(3 -2) scale(1.15)"/></g><g transform="translate(44 164.5)"><path d="M-10 3l4-4 3 2 2-2 4 4-6 7z" fill="#fff" stroke="#5c9a2e" stroke-width="1.5"/><use href="#pen" transform="translate(3 -3) scale(1.15)"/><path d="M9.500 7l3 2.500-3 2.500z" fill="#333"/></g><g transform="translate(44 190.5)"><g transform="scale(.85)"><path d="M0 0l-8-8M0 0l8-8M0 0l-8 8M0 0l8 8" fill="none" stroke="#3a8ae8" stroke-width="3.2"/><path d="M-11-11h7l-7 7zM11-11h-7l7 7zM-11 11h7l-7-7zM11 11h-7l7-7z" fill="#3a8ae8"/><circle cx="0" cy="0" r="2.5" fill="#3a8ae8"/></g></g><g transform="translate(44 217)"><path d="M-11-6h22" fill="none" stroke="#333" stroke-width="0.9"/><path d="M-2.500-6v13M2.500-6v13" fill="none" stroke="#555" stroke-width="1.4"/><circle cx="-2.5" cy="-6" r="1.4" fill="#2a6fd0"/><circle cx="2.5" cy="-6" r="1.4" fill="#2a6fd0"/><path d="M-10 1h4M10 1h-4" fill="none" stroke="#2a6fd0" stroke-width="1.2"/><path d="M-7-1l2.500 2-2.500 2zM7-1l-2.500 2 2.500 2z" fill="#2a6fd0"/><path d="M9.500 7l3 2.500-3 2.500z" fill="#333"/></g><g transform="translate(44 243.5)"><path d="M-4 0l6-6 4 4 4-3v7l-8 6z" fill="#5c9a4e"/><path d="M-11 3l5 5M-6 3l-5 5" fill="none" stroke="#e02020" stroke-width="1.5"/><path d="M9.500 7l3 2.500-3 2.500z" fill="#333"/></g><g transform="translate(44 270)"><path d="M-10-9l8 9-8 9" fill="none" stroke="#333" stroke-width="1"/><circle cx="-2" cy="0" r="1.6" fill="#2a6fd0"/><path d="M0 0h7" fill="none" stroke="#333" stroke-width="1" stroke-dasharray="1.500 1"/><path d="M7-1.800l3.500 1.800-3.500 1.800z" fill="#333"/></g><g transform="translate(44 296)"><path d="M-11 1q4-6 8-2t8 0 6-3" fill="none" stroke="#e03030" stroke-width="1.2"/><path d="M-11 1q4-6 8-2" fill="none" stroke="#2a6fd0" stroke-width="1.2"/><path d="M-8 5q5 4 14 0" fill="none" stroke="#666" stroke-width="0.8" stroke-dasharray="1.500 1"/><circle cx="-11" cy="1" r="1.3" fill="#2a6fd0"/><circle cx="-3" cy="-1" r="1.3" fill="#e03030"/><circle cx="5" cy="-1" r="1.3" fill="#2a6fd0"/><path d="M9.500 7l3 2.500-3 2.500z" fill="#333"/></g><g transform="translate(44 322)"><path d="M-10 3l5-5 4 3 3-3 3 3-3 3zM0 3l4-6 6 0v5l-5 4z" fill="#6aa85a" stroke="#3f7a36" stroke-width="0.6"/><path d="M-6 7l10-12M-8 4l3 4M3-6l3 3" fill="none" stroke="#222" stroke-width="0.9"/></g><g transform="translate(44 348)"><use href="#flL" transform="translate(0 -2)"/><rect x="1" y="3" width="8" height="7" fill="none" stroke="#666" stroke-width="0.8" stroke-dasharray="1.500 1"/><path d="M5 3v7M1 6.500h8" fill="none" stroke="#666" stroke-width="0.6" stroke-dasharray="1.500 1"/><path d="M9.500 7l3 2.500-3 2.500z" fill="#333"/></g><g transform="translate(44 375)"><rect x="-10" y="-9" width="18" height="18" fill="none" stroke="#333" stroke-width="0.9" stroke-dasharray="2 1.500"/><path d="M-7 0l3-3 3 3 4-4 3 3-7 7z" fill="#3a8a5a"/><path d="M9-8q4 8 0 16" fill="none" stroke="#333" stroke-width="1"/><path d="M9-10l-2.500 3h4z" fill="#333"/></g><g transform="translate(44 401)"><text x="0" y="5" font-size="13" fill="#555" text-anchor="middle" font-family="'Liberation Sans',sans-serif">Abc</text></g><g transform="translate(44 425)"><path d="M-4-9h7l-3.500 4z" fill="#fff" stroke="#666" stroke-width="0.8"/><path d="M-.5-5v7" fill="none" stroke="#2aa58c" stroke-width="1" stroke-dasharray="1.500 1"/><path d="M-10 4h14" fill="none" stroke="#2aa58c" stroke-width="1"/><circle cx="-10" cy="4" r="1.4" fill="#2a6fd0"/><circle cx="-4" cy="4" r="1.4" fill="#e02020"/><circle cx="2" cy="4" r="1.4" fill="#2a6fd0"/><use href="#pen" transform="translate(7 -2) scale(0.8)"/><path d="M9.500 7l3 2.500-3 2.500z" fill="#333"/></g><g transform="translate(44 451)"><g transform="translate(-4 -5) scale(.75)"><use href="#chk" transform="translate(0 0)"/></g><g transform="translate(5 -5) scale(.75)"><use href="#chk" transform="translate(0 0)"/></g><path d="M-4-9h7" fill="none" stroke="#2a6fd0" stroke-width="1"/><rect x="-3" y="2" width="10" height="8" fill="#fff" stroke="#3d7dcc" stroke-width="0.9"/><rect x="-3" y="2" width="10" height="2.5" fill="#3d7dcc"/><path d="M-3 7h10M1 4.500v5.500" fill="none" stroke="#9bb7e0" stroke-width="0.7"/><path d="M9.500 7l3 2.500-3 2.500z" fill="#333"/></g><g transform="translate(44 484)"><rect x="-2" y="-10" width="11" height="8" fill="#fff" stroke="#3d7dcc" stroke-width="0.9"/><rect x="-2" y="-10" width="11" height="2.5" fill="#3d7dcc"/><path d="M9 6q-8-6-16-1" fill="none" stroke="#6a6f75" stroke-width="2.8"/><path d="M-10 0l0 8 7-3z" fill="#6a6f75"/><circle cx="2" cy="1" r="0.8" fill="#333"/><circle cx="5" cy="1" r="0.8" fill="#333"/><circle cx="8" cy="1" r="0.8" fill="#333"/></g><g transform="translate(44 505.5)"><path d="M10 6q-8-9-16-3" fill="none" stroke="#2f7de0" stroke-width="3.2"/><path d="M-10-1l0 9 8-4z" fill="#2f7de0"/></g><g transform="translate(44 532)"><use href="#gear" transform="translate(0 1) scale(1.15)"/></g><g transform="translate(1185.5 110.5)"><use href="#flL" transform="translate(2 -3)"/><circle cx="-4" cy="5" r="1.3" fill="#2a6fd0"/><circle cx="0" cy="8" r="1.3" fill="#e02020"/><circle cx="4" cy="4" r="1.3" fill="#2a6fd0"/><circle cx="6" cy="8" r="1.3" fill="#2a6fd0"/><circle cx="-7" cy="9" r="1.3" fill="#e02020"/><path d="M-9 6.500l-3 2.500 3 2.500z" fill="#333"/></g><g transform="translate(1185.5 138.5)"><use href="#flL" transform="translate(1 -3)"/><rect x="2" y="1" width="7" height="9" fill="#fff" stroke="#888" stroke-width="0.8"/><circle cx="-4" cy="5" r="1.3" fill="#2a6fd0"/><circle cx="-2" cy="9" r="1.3" fill="#e02020"/><path d="M-9 6.500l-3 2.500 3 2.500z" fill="#333"/></g><g transform="translate(1185.5 164.5)"><path d="M-9-5q-2 8 4 12t12-1" fill="none" stroke="#e02020" stroke-width="0.9" stroke-dasharray="1.500 1"/><circle cx="-9" cy="-5" r="1.4" fill="#2a6fd0"/><circle cx="-4" cy="-7" r="1.4" fill="#e02020"/><circle cx="-9" cy="2" r="1.4" fill="#e02020"/><circle cx="-5" cy="7" r="1.4" fill="#2a6fd0"/><circle cx="1" cy="9" r="1.4" fill="#e02020"/><circle cx="7" cy="7" r="1.4" fill="#2a6fd0"/><use href="#pen" transform="translate(4 -3) scale(1.1)"/><path d="M-9 6.500l-3 2.500 3 2.500z" fill="#333"/></g><g transform="translate(1185.5 190.5)"><path d="M-9 2a9 9 0 0 1 18 0z" fill="#f4c22a" stroke="#c99a10" stroke-width="0.7"/><path d="M-5 2a5 5 0 0 1 10 0z" fill="#f0f0f0"/><rect x="-9" y="-9.5" width="18" height="2.5" fill="#7ab0f0"/><use href="#pen" transform="translate(7 6) scale(0.7)"/><path d="M-9 6.500l-3 2.500 3 2.500z" fill="#333"/></g><g transform="translate(1185.5 218)"><path d="M-3-6l-5 15M-3-6l1 15M-3-6l6 15" fill="none" stroke="#c98a2a" stroke-width="1.6"/><rect x="-5" y="-10" width="5" height="4" fill="#555"/><rect x="6" y="-10" width="4" height="19" fill="#7ab8f0" stroke="#4a90d8" stroke-width="0.6"/><path d="M-9 6.500l-3 2.500 3 2.500z" fill="#333"/></g><g transform="translate(1185.5 243.5)"><rect x="-10" y="-5" width="20" height="3" fill="#e4e4e4" stroke="#999" stroke-width="0.6"/><path d="M-2-9l-4 16M-2-9l8 14" fill="none" stroke="#3a7a6a" stroke-width="1.6"/><circle cx="-2" cy="-9" r="1.5" fill="#555"/><path d="M6 5l2 4" fill="none" stroke="#c9a020" stroke-width="1.5"/><path d="M-9 6.500l-3 2.500 3 2.500z" fill="#333"/></g><g transform="translate(1185.5 271.5)"><path d="M-9-3l5 3 5-3 5 3M-9 5l5-3 5 3" fill="none" stroke="#2f6ec8" stroke-width="0.9"/><circle cx="-9" cy="-3" r="1.4" fill="#2a6fd0"/><circle cx="-4" cy="0" r="1.4" fill="#e02020"/><circle cx="1" cy="-3" r="1.4" fill="#2a6fd0"/><circle cx="-9" cy="5" r="1.4" fill="#e02020"/><circle cx="-4" cy="2" r="1.4" fill="#2a6fd0"/><circle cx="1" cy="5" r="1.4" fill="#2a6fd0"/><use href="#pen" transform="translate(6 -3) scale(0.95)"/><path d="M-9 6.500l-3 2.500 3 2.500z" fill="#333"/></g><g transform="translate(1185.5 297)"><g transform="translate(-2 1)"><path d="M-3-9l5 13M3-9l-5 13" fill="none" stroke="#7a8590" stroke-width="1.5"/><circle cx="-3.5" cy="6" r="2.5" fill="none" stroke="#2f7de0" stroke-width="1.4"/><circle cx="3.5" cy="6" r="2.5" fill="none" stroke="#2f7de0" stroke-width="1.4"/></g><use href="#pen" transform="translate(7 -3) scale(0.85)"/><path d="M-9 6.500l-3 2.500 3 2.500z" fill="#333"/></g><g transform="translate(1185.5 322.5)"><text x="-8" y="-5" font-size="6" fill="#333" text-anchor="middle" font-family="'Liberation Sans',sans-serif">2</text><text x="-1" y="-5" font-size="6" fill="#333" text-anchor="middle" font-family="'Liberation Sans',sans-serif">1</text><text x="-8" y="5" font-size="6" fill="#333" text-anchor="middle" font-family="'Liberation Sans',sans-serif">3</text><path d="M-6-2h6" fill="none" stroke="#2aa58c" stroke-width="0.9"/><circle cx="-6" cy="-2" r="1.2" fill="#2a6fd0"/><circle cx="0" cy="-2" r="1.2" fill="#2a6fd0"/><text x="3" y="9" font-size="6" fill="#333" text-anchor="middle" font-family="'Liberation Sans',sans-serif">ABC</text><use href="#pen" transform="translate(7 -4) scale(0.75)"/><path d="M-9 6.500l-3 2.500 3 2.500z" fill="#333"/></g><g transform="translate(1185.5 351.5)"><use href="#flL" transform="translate(1 -4)"/><circle cx="-5" cy="6" r="1.3" fill="#2a6fd0"/><circle cx="-1" cy="9" r="1.3" fill="#e02020"/><text x="6" y="11" font-size="12" fill="#444" text-anchor="middle" font-family="'Liberation Sans',sans-serif">A</text><path d="M-9 6.500l-3 2.500 3 2.500z" fill="#333"/></g><g transform="translate(1185.5 376)"><rect x="-13" y="-13" width="26" height="26" fill="#fafafa" stroke="#fff" stroke-width="1"/><path d="M-13 13h26v-26" fill="none" stroke="#c4c4c4" stroke-width="1"/><path d="M-6-3l2-7h9l2 7z" fill="#3d4852"/><rect x="-8" y="-3" width="17" height="8" fill="#56616c" rx="1"/><path d="M-5 3h11l1 6h-13z" fill="#fff" stroke="#9aa3ab" stroke-width="0.5"/><path d="M8-2l5-3M8 1l5-1" fill="none" stroke="#2f7de0" stroke-width="1"/><path d="M-9 6.500l-3 2.500 3 2.500z" fill="#333"/></g><g transform="translate(1185.5 400.5)"><path d="M-10-2l8-7 9 2-2 4-6 1-3 8z" fill="#f4d21a" stroke="#d49a10" stroke-width="0.7"/><rect x="-9" y="-11" width="12" height="3" fill="#888"/><rect x="-10" y="3" width="9" height="7" fill="#ddd" stroke="#777" stroke-width="0.7"/><use href="#pen" transform="translate(6 -1) scale(0.95)"/><path d="M-9 6.500l-3 2.500 3 2.500z" fill="#333"/></g><g transform="translate(1185.5 428)"><path d="M-8 10v-7q0-3 3-3t3-3v-6" fill="none" stroke="#f4b81a" stroke-width="3"/><path d="M-1 10v-6q0-3 3-3t3-3v-7" fill="none" stroke="#2f6ec8" stroke-width="3"/><path d="M5 10v-5q0-3 3-3" fill="none" stroke="#3d4852" stroke-width="3"/><path d="M-9 6.500l-3 2.500 3 2.500z" fill="#333"/></g><g transform="translate(1185.5 458)"><rect x="-13" y="-13" width="26" height="26" fill="#fafafa" stroke="#fff" stroke-width="1"/><path d="M-13 13h26v-26" fill="none" stroke="#c4c4c4" stroke-width="1"/><path d="M-11 3l11-5 11 5-11 5z" fill="#5fae4a"/><path d="M-11 3v3l11 5v-3zM11 3v3l-11 5v-3z" fill="#8a6a3a"/><path d="M-5-1l5-5 5 5v4h-10z" fill="#e8eef5" stroke="#3d7dcc" stroke-width="0.8"/><path d="M-6-1l6-6 6 6" fill="none" stroke="#2f6ec8" stroke-width="1.6"/><path d="M-9 6.500l-3 2.500 3 2.500z" fill="#333"/></g><g transform="translate(1185.5 482)"><path d="M-7-10h10l4 4v15h-14z" fill="#f4f4f4" stroke="#888" stroke-width="0.8"/><path d="M-4 5v-6l4-4 4 4v6h-3v-4h-2v4z" fill="#f4d21a" stroke="#7a6a10" stroke-width="0.7"/><rect x="-6" y="6" width="12" height="3" fill="#ccc" stroke="#888" stroke-width="0.5"/><path d="M-9 6.500l-3 2.500 3 2.500z" fill="#333"/></g><g transform="translate(1185.5 505)"><use href="#bino" transform="translate(0 -4) scale(0.95)"/><path d="M-5 3l5 6 5-6" fill="none" stroke="#e08a4a" stroke-width="1.2"/><path d="M-3 4l1.500 2M3 4l-1.500 2M-1 8h2" fill="none" stroke="#888" stroke-width="1.2"/></g><g transform="translate(1185.5 536)"><use href="#gear" transform="translate(0 0) scale(1.15)"/></g><g transform="translate(1185.5 555)"><path d="M-8-5h10v10h-10z" fill="#e8893a"/><path d="M0-3l9 1v6h-9z" fill="#4aa83c"/></g></svg><div class="sepv" style="left:34.5px;top:36px;height:24px"></div><div class="sepv" style="left:170.0px;top:36px;height:24px"></div><div class="sepv" style="left:226.0px;top:36px;height:24px"></div><div class="sepv" style="left:492.0px;top:36px;height:24px"></div><div class="sepv" style="left:522.0px;top:36px;height:24px"></div><div class="sepv" style="left:552.0px;top:36px;height:24px"></div><div class="sepv" style="left:661.0px;top:36px;height:24px"></div><div class="sepv" style="left:744.0px;top:36px;height:24px"></div><div class="sepv" style="left:774.0px;top:36px;height:24px"></div><div class="sepv" style="left:908.5px;top:36px;height:24px"></div><div class="sepv" style="left:939.0px;top:36px;height:24px"></div><div class="sepv" style="left:969.0px;top:36px;height:24px"></div><div class="sepv" style="left:1025.0px;top:36px;height:24px"></div><div class="sepv" style="left:1054.0px;top:36px;height:24px"></div><div class="grip" style="left:4.0px;top:36px;height:24px"></div><div class="grip" style="left:1057.0px;top:36px;height:24px"></div><div class="sepv" style="left:427.0px;top:65px;height:24px"></div><div class="sepv" style="left:805.0px;top:65px;height:24px"></div><div class="grip" style="left:4.0px;top:65px;height:24px"></div><div class="grip" style="left:431.0px;top:65px;height:24px"></div><div class="grip" style="left:808.0px;top:65px;height:24px"></div><div class="sepv" style="left:86.0px;top:563px;height:24px"></div><div class="sepv" style="left:143.0px;top:563px;height:24px"></div><div class="sepv" style="left:331.0px;top:563px;height:24px"></div><div class="sepv" style="left:439.5px;top:563px;height:24px"></div><div class="sepv" style="left:470.5px;top:563px;height:24px"></div><div class="sepv" style="left:657.0px;top:563px;height:24px"></div><div class="sepv" style="left:687.5px;top:563px;height:24px"></div><div class="sepv" style="left:717.5px;top:563px;height:24px"></div><div class="sepv" style="left:799.5px;top:563px;height:24px"></div><div class="sepv" style="left:855.0px;top:563px;height:24px"></div><div class="sepv" style="left:1020.7px;top:563px;height:24px"></div><div class="grip" style="left:4.0px;top:563px;height:24px"></div><div class="grip" style="left:858.0px;top:563px;height:24px"></div><div class="grip" style="left:1025.0px;top:563px;height:24px"></div><div class="sepv" style="left:218.0px;top:592px;height:24px"></div><div class="sepv" style="left:436.0px;top:592px;height:24px"></div><div class="sepv" style="left:497.0px;top:592px;height:24px"></div><div class="sepv" style="left:552.5px;top:592px;height:24px"></div><div class="sepv" style="left:609.5px;top:592px;height:24px"></div><div class="sepv" style="left:797.5px;top:592px;height:24px"></div><div class="sepv" style="left:852.5px;top:592px;height:24px"></div><div class="sepv" style="left:1020.0px;top:592px;height:24px"></div><div class="sepv" style="left:1075.7px;top:592px;height:24px"></div><div class="grip" style="left:4.0px;top:592px;height:24px"></div><div class="grip" style="left:221.0px;top:592px;height:24px"></div><div class="grip" style="left:439.0px;top:592px;height:24px"></div><div class="grip" style="left:855.0px;top:592px;height:24px"></div><div class="grip" style="left:1079.0px;top:592px;height:24px"></div><div class="a" style="left:100.5px;top:119.0px;width:424.0px;height:378.5px;background:#fff;border:1px solid #8c8c8c;box-shadow:0 2px 9px 1px rgba(0,0,0,.45)"></div><div class="a" style="left:102.0px;top:143.0px;width:421.0px;height:353.0px;background:#f3f3f3"></div><svg style="left:107.3px;top:125.8px" width="10.5" height="10.5" viewBox="0 0 20 20"><ellipse cx="6" cy="11.500" rx="5.800" ry="7.600" fill="#1b1b1b"/><ellipse cx="14" cy="11.500" rx="5.800" ry="7.600" fill="#1b1b1b"/><path d="M1.500 11a4.500 6 0 0 1 8.500-3v3z" fill="#2fb34a"/><path d="M18.500 11a4.500 6 0 0 0-8.500-3v3z" fill="#3b8eea"/><path d="M1.500 12a4.500 6 0 0 0 8.500 3v-3z" fill="#e94a5a"/><path d="M18.500 12a4.500 6 0 0 1-8.500 3v-3z" fill="#f2d21a"/><path d="M10 6q-.5-3 1.500-5" stroke="#1b1b1b" stroke-width="1.600" fill="none"/></svg><div class="t" style="left:122.0px;top:126.0px;font-size:10.80px;letter-spacing:-0.769px;color:#000;">Настройки схемы и отчета</div><svg style="left:506px;top:126px" width="10" height="10" viewBox="0 0 10 10"><path d="M1 1l8 8M9 1l-8 8" stroke="#222" stroke-width="1" fill="none"/></svg><div class="a" style="left:104.5px;top:146.5px;width:73.0px;height:13.0px;background:#f0f0f0;border:1px solid #d9d9d9"></div><div class="a" style="left:177.5px;top:146.5px;width:63.0px;height:13.0px;background:#f0f0f0;border:1px solid #d9d9d9;border-left:none"></div><div class="a" style="left:103.5px;top:158.5px;width:419.0px;height:314.5px;background:#fff;border:1px solid #dcdcdc"></div><div class="a" style="left:240.0px;top:145.0px;width:78.0px;height:14.5px;background:#fff;border:1px solid #d9d9d9;border-bottom:none"></div><div class="t" style="left:108.0px;top:148.6px;font-size:8.80px;letter-spacing:-0.638px;color:#000;">Параметры схемы</div><div class="t" style="left:181.9px;top:148.6px;font-size:8.80px;letter-spacing:-0.593px;color:#000;">Коды объектов</div><div class="t" style="left:244.5px;top:148.1px;font-size:8.80px;letter-spacing:-0.507px;color:#000;">Параметры отчета</div><div class="a" style="left:106.0px;top:167.5px;width:415.0px;height:36.0px;border:1px solid #e1e1e1;border-radius:1px"></div><div class="a" style="left:111.0px;top:163.0px;width:165.0px;height:9.0px;background:#fff"></div><div class="t" style="left:113.0px;top:163.0px;font-size:8.80px;letter-spacing:-0.456px;color:#000;">Формат представления числовых значений</div><div class="t" style="left:110.6px;top:182.6px;font-size:8.80px;letter-spacing:-0.630px;color:#000;">Координаты</div><div class="a" style="left:161.0px;top:178.6px;width:33.0px;height:16.6px;background:#e9e9e9;border:1px solid #b5b5b5"></div><div class="t" style="left:163.5px;top:182.7px;font-size:8.80px;letter-spacing:-0.132px;color:#000;">*.2</div><svg style="left:183.0px;top:184.9px" width="7" height="5" viewBox="0 0 7 5"><path d="M0.500 0.800l3 3 3-3" stroke="#444" stroke-width="0.9" fill="none"/></svg><div class="t" style="left:197.6px;top:182.6px;font-size:8.80px;letter-spacing:-0.661px;color:#000;">меры линий</div><div class="a" style="left:245.6px;top:178.6px;width:31.1px;height:16.6px;background:#e9e9e9;border:1px solid #b5b5b5"></div><div class="t" style="left:248.1px;top:182.7px;font-size:8.80px;letter-spacing:-0.182px;color:#000;">*.2</div><svg style="left:265.7px;top:184.9px" width="7" height="5" viewBox="0 0 7 5"><path d="M0.500 0.800l3 3 3-3" stroke="#444" stroke-width="0.9" fill="none"/></svg><div class="t" style="left:280.0px;top:182.6px;font-size:8.80px;letter-spacing:-0.959px;color:#000;">углы</div><div class="a" style="left:308.6px;top:178.6px;width:62.4px;height:16.6px;background:#e9e9e9;border:1px solid #b5b5b5"></div><div class="t" style="left:311.1px;top:182.7px;font-size:8.80px;letter-spacing:-0.440px;color:#000;">ггг мм сс</div><svg style="left:360.0px;top:184.9px" width="7" height="5" viewBox="0 0 7 5"><path d="M0.500 0.800l3 3 3-3" stroke="#444" stroke-width="0.9" fill="none"/></svg><div class="t" style="left:374.0px;top:182.6px;font-size:8.80px;letter-spacing:-0.718px;color:#000;">Площадь</div><div class="a" style="left:410.6px;top:178.6px;width:31.9px;height:16.6px;background:#e9e9e9;border:1px solid #b5b5b5"></div><div class="t" style="left:413.1px;top:182.7px;font-size:8.80px;letter-spacing:-0.182px;color:#000;">*.1</div><svg style="left:431.5px;top:184.9px" width="7" height="5" viewBox="0 0 7 5"><path d="M0.500 0.800l3 3 3-3" stroke="#444" stroke-width="0.9" fill="none"/></svg><div class="a" style="left:444.0px;top:178.6px;width:33.0px;height:16.6px;background:#e9e9e9;border:1px solid #b5b5b5"></div><div class="t" style="left:446.5px;top:182.7px;font-size:8.80px;letter-spacing:-0.007px;color:#000;">кв.м</div><svg style="left:466.0px;top:184.9px" width="7" height="5" viewBox="0 0 7 5"><path d="M0.500 0.800l3 3 3-3" stroke="#444" stroke-width="0.9" fill="none"/></svg><div class="a" style="left:106.0px;top:205.5px;width:415.0px;height:42.0px;border:1px solid #e6e6e6;border-right:1px solid #bdbdbd;border-bottom:1px solid #bdbdbd"></div><div class="a" style="left:110.6px;top:212.8px;width:9.5px;height:9.5px;background:#fff;border:1px solid #333"></div><div class="a" style="left:110.6px;top:226.2px;width:9.5px;height:9.5px;background:#fff;border:1px solid #333"></div><svg style="left:111.500px;top:227.0px" width="8" height="8" viewBox="0 0 8 8"><path d="M1.200 4.200l2 2 3.600-4.600" stroke="#222" stroke-width="1" fill="none"/></svg><div class="t" style="left:123.0px;top:213.0px;font-size:8.80px;letter-spacing:-0.415px;color:#000;">изображение схемы в черно-белых цветах</div><div class="t" style="left:123.0px;top:226.4px;font-size:8.80px;letter-spacing:-0.442px;color:#000;">автоматически начинать формирование отчета без управления составом схемы</div><div class="a" style="left:106.0px;top:253.0px;width:415.0px;height:54.5px;border:1px solid #e1e1e1"></div><div class="a" style="left:111.0px;top:248.5px;width:114.0px;height:9.0px;background:#fff"></div><div class="t" style="left:113.0px;top:248.6px;font-size:8.80px;letter-spacing:-0.424px;color:#000;">Шаблон создаваемого отчета</div><div class="a" style="left:110.6px;top:263.7px;width:346.9px;height:14.0px;background:#fff;border:1px solid #b5b5b5"></div><div class="t" style="left:113.1px;top:266.5px;font-size:8.80px;letter-spacing:-0.468px;color:#000;">Схема расположения земельного участка на кадастровом плане</div><svg style="left:446.5px;top:268.7px" width="7" height="5" viewBox="0 0 7 5"><path d="M0.500 0.800l3 3 3-3" stroke="#444" stroke-width="0.9" fill="none"/></svg><div class="a" style="left:110.6px;top:285.5px;width:347.0px;height:14.0px;background:#e9e9e9;border:1px solid #a8a8a8"></div><div class="t" style="left:112.5px;top:288.3px;font-size:8.80px;letter-spacing:-0.491px;color:#000;">C:\Program Files\Panorama\Panorama15\GEODESY.DOT\scheme.docx</div><div class="a" style="left:461.0px;top:285.5px;width:14.0px;height:14.0px;background:#e4e4e4;border:1px solid #b4b4b4"></div><div class="t" style="left:464.5px;top:289.5px;font-size:8.00px;letter-spacing:0.166px;color:#000;">...</div><div class="a" style="left:106.0px;top:313.5px;width:415.0px;height:34.5px;border:1px solid #e1e1e1"></div><div class="a" style="left:111.0px;top:309.0px;width:173.0px;height:9.0px;background:#fff"></div><div class="t" style="left:113.0px;top:309.4px;font-size:8.80px;letter-spacing:-0.464px;color:#000;">Папка для размещения отчетных документов</div><div class="a" style="left:110.6px;top:325.5px;width:347.0px;height:14.5px;background:#e9e9e9;border:1px solid #a8a8a8"></div><div class="t" style="left:112.5px;top:328.6px;font-size:8.80px;letter-spacing:-0.500px;color:#000;">C:\Program Files\Panorama\Panorama15\GEODESY.DOT\</div><div class="a" style="left:461.0px;top:325.5px;width:14.0px;height:14.5px;background:#e4e4e4;border:1px solid #b4b4b4"></div><div class="t" style="left:464.5px;top:330.0px;font-size:8.00px;letter-spacing:0.166px;color:#000;">...</div><div class="a" style="left:323.6px;top:478.5px;width:52.1px;height:13.0px;background:#e3e3e3;border:1px solid #b3b3b3"></div><div class="t" style="left:334.5px;top:481.1px;font-size:8.80px;letter-spacing:-0.679px;color:#000;">Принять</div><div class="a" style="left:378.0px;top:478.5px;width:50.6px;height:13.0px;background:#e3e3e3;border:1px solid #b3b3b3"></div><div class="t" style="left:388.8px;top:481.1px;font-size:8.80px;letter-spacing:-0.755px;color:#000;">Отмена</div><div class="a" style="left:430.5px;top:478.5px;width:51.3px;height:13.0px;background:#e3e3e3;border:1px solid #b3b3b3"></div><div class="t" style="left:441.3px;top:481.1px;font-size:8.80px;letter-spacing:-0.798px;color:#000;">Помощь</div><div class="a" style="left:561.5px;top:100.0px;width:436.0px;height:437.5px;background:#e6e6e6;box-shadow:0 1px 7px rgba(0,0,0,.5);outline:1px solid #2b579a"></div><div class="a" style="left:561.5px;top:100.0px;width:436.0px;height:27.0px;background:#2b579a"></div><div class="t" style="left:581.0px;top:108.1px;font-size:9.50px;letter-spacing:-0.284px;color:#fff;">»</div><div class="t" style="left:667.0px;top:108.5px;font-size:9.60px;letter-spacing:-0.233px;color:#fff;">Отч...</div><svg style="left:696px;top:112px" width="6" height="4" viewBox="0 0 6 4"><path d="M0 0h6l-3 3.500z" fill="#fff"/></svg><svg style="left:785px;top:107px" width="13" height="13" viewBox="0 0 13 13"><circle cx="7.800" cy="5" r="3.600" stroke="#fff" stroke-width="1" fill="none"/><path d="M5.300 7.700l-4 4" stroke="#fff" stroke-width="1.200"/></svg><div class="a" style="left:813.7px;top:107.0px;width:34.5px;height:14.5px;background:#fff"></div><div class="t" style="left:821.0px;top:109.2px;font-size:9.30px;letter-spacing:-0.346px;color:#2b579a;">Вход</div><svg style="left:865px;top:108px" width="12" height="11" viewBox="0 0 12 11"><rect x=".5" y="1.500" width="11" height="8" stroke="#fff" fill="none" stroke-width="1"/><path d="M.5 3.500h11" stroke="#fff"/><path d="M6 8.500v-3.500M4.300 6.500l1.700-1.700 1.700 1.700" stroke="#fff" stroke-width=".9" fill="none"/></svg><svg style="left:900px;top:107px" width="90" height="14" viewBox="0 0 90 14"><g stroke="#fff" stroke-width="1" fill="none"><path d="M4 7h7"/><rect x="40" y="3.500" width="6.500" height="6.500" rx="1"/><path d="M75.500 3.500l6.500 6.500M82 3.500l-6.500 6.500"/></g></svg><div class="a" style="left:561.5px;top:127.0px;width:436.0px;height:24.0px;background:#f3f3f3"></div><div class="t" style="left:573.0px;top:134.2px;font-size:10.30px;letter-spacing:-0.108px;color:#444;">Файл</div><div class="t" style="left:612.5px;top:134.2px;font-size:10.30px;letter-spacing:-0.136px;color:#444;">Глав</div><div class="t" style="left:640.0px;top:134.2px;font-size:10.30px;letter-spacing:-0.450px;color:#444;">Вста</div><div class="t" style="left:667.0px;top:134.2px;font-size:10.30px;letter-spacing:0.144px;color:#444;">Конс</div><div class="t" style="left:695.6px;top:134.2px;font-size:10.30px;letter-spacing:-0.766px;color:#444;">Макс</div><div class="t" style="left:722.5px;top:134.2px;font-size:10.30px;letter-spacing:-1.001px;color:#444;">Ссыл</div><div class="t" style="left:750.5px;top:134.2px;font-size:10.30px;letter-spacing:-0.519px;color:#444;">Расс</div><div class="t" style="left:777.0px;top:134.2px;font-size:10.30px;letter-spacing:-0.220px;color:#444;">Реце</div><div class="t" style="left:806.0px;top:134.2px;font-size:10.30px;letter-spacing:-0.817px;color:#444;">Вид</div><div class="t" style="left:832.5px;top:134.2px;font-size:10.30px;letter-spacing:-0.758px;color:#444;">Спра</div><div class="t" style="left:859.7px;top:134.2px;font-size:10.30px;letter-spacing:-2.253px;color:#444;">ACRO</div><div class="a" style="left:895.0px;top:130.0px;width:82.5px;height:18.0px;background:#fff"></div><svg style="left:900px;top:134px" width="11" height="10" viewBox="0 0 11 10"><path d="M1 4v5.500h7.500v-2" stroke="#2b579a" fill="none" stroke-width=".9"/><path d="M4 6.500q.5-3.500 4-3.500v-2l2.500 2.800-2.500 2.800v-2q-2.500 0-4 1.900z" stroke="#2b579a" fill="none" stroke-width=".8"/></svg><div class="t" style="left:914.0px;top:134.2px;font-size:10.30px;letter-spacing:-0.035px;font-weight:bold;color:#1f4788;">Поделиться</div><svg style="left:981px;top:136px" width="4" height="6" viewBox="0 0 4 6"><path d="M.5 0l3 3-3 3z" fill="#555"/></svg><div class="a" style="left:561.5px;top:150.5px;width:436.0px;height:1.0px;background:#d8d8d8"></div><div class="a" style="left:561.5px;top:151.5px;width:436.0px;height:17.5px;background:#e6e6e6"></div><div class="a" style="left:566.0px;top:156.0px;width:10.5px;height:10.5px;background:#f5f5f5;border:1px solid #e0e0e0"></div><svg style="left:568.5px;top:158.500px" width="6" height="6" viewBox="0 0 6 6"><path d="M1 0v5h4" stroke="#333" stroke-width="1.200" fill="none"/></svg><div class="a" style="left:580.0px;top:155.0px;width:411.0px;height:10.5px;background:#c9c9c9"></div><div class="a" style="left:600.5px;top:155.0px;width:362.0px;height:10.5px;background:#fff"></div><div class="t" style="left:618.8px;top:156.3px;font-size:8.00px;color:#333;">1</div><div class="a" style="left:610.2px;top:158.8px;width:1.0px;height:3.5px;background:#666"></div><div class="a" style="left:615.2px;top:160.0px;width:1.0px;height:1.0px;background:#777"></div><div class="a" style="left:625.5px;top:160.0px;width:1.0px;height:1.0px;background:#777"></div><div class="t" style="left:639.4px;top:156.3px;font-size:8.00px;color:#333;">2</div><div class="a" style="left:630.8px;top:158.8px;width:1.0px;height:3.5px;background:#666"></div><div class="a" style="left:635.8px;top:160.0px;width:1.0px;height:1.0px;background:#777"></div><div class="a" style="left:646.1px;top:160.0px;width:1.0px;height:1.0px;background:#777"></div><div class="t" style="left:660.0px;top:156.3px;font-size:8.00px;color:#333;">3</div><div class="a" style="left:651.4px;top:158.8px;width:1.0px;height:3.5px;background:#666"></div><div class="a" style="left:656.4px;top:160.0px;width:1.0px;height:1.0px;background:#777"></div><div class="a" style="left:666.7px;top:160.0px;width:1.0px;height:1.0px;background:#777"></div><div class="t" style="left:680.6px;top:156.3px;font-size:8.00px;color:#333;">4</div><div class="a" style="left:672.0px;top:158.8px;width:1.0px;height:3.5px;background:#666"></div><div class="a" style="left:677.0px;top:160.0px;width:1.0px;height:1.0px;background:#777"></div><div class="a" style="left:687.3px;top:160.0px;width:1.0px;height:1.0px;background:#777"></div><div class="t" style="left:701.2px;top:156.3px;font-size:8.00px;color:#333;">5</div><div class="a" style="left:692.6px;top:158.8px;width:1.0px;height:3.5px;background:#666"></div><div class="a" style="left:697.6px;top:160.0px;width:1.0px;height:1.0px;background:#777"></div><div class="a" style="left:707.9px;top:160.0px;width:1.0px;height:1.0px;background:#777"></div><div class="t" style="left:721.8px;top:156.3px;font-size:8.00px;color:#333;">6</div><div class="a" style="left:713.2px;top:158.8px;width:1.0px;height:3.5px;background:#666"></div><div class="a" style="left:718.2px;top:160.0px;width:1.0px;height:1.0px;background:#777"></div><div class="a" style="left:728.5px;top:160.0px;width:1.0px;height:1.0px;background:#777"></div><div class="t" style="left:742.4px;top:156.3px;font-size:8.00px;color:#333;">7</div><div class="a" style="left:733.8px;top:158.8px;width:1.0px;height:3.5px;background:#666"></div><div class="a" style="left:738.8px;top:160.0px;width:1.0px;height:1.0px;background:#777"></div><div class="a" style="left:749.1px;top:160.0px;width:1.0px;height:1.0px;background:#777"></div><div class="t" style="left:763.0px;top:156.3px;font-size:8.00px;color:#333;">8</div><div class="a" style="left:754.4px;top:158.8px;width:1.0px;height:3.5px;background:#666"></div><div class="a" style="left:759.4px;top:160.0px;width:1.0px;height:1.0px;background:#777"></div><div class="a" style="left:769.7px;top:160.0px;width:1.0px;height:1.0px;background:#777"></div><div class="t" style="left:783.6px;top:156.3px;font-size:8.00px;color:#333;">9</div><div class="a" style="left:775.0px;top:158.8px;width:1.0px;height:3.5px;background:#666"></div><div class="a" style="left:780.0px;top:160.0px;width:1.0px;height:1.0px;background:#777"></div><div class="a" style="left:790.3px;top:160.0px;width:1.0px;height:1.0px;background:#777"></div><div class="t" style="left:802.0px;top:156.3px;font-size:8.00px;color:#333;">10</div><div class="a" style="left:795.6px;top:158.8px;width:1.0px;height:3.5px;background:#666"></div><div class="a" style="left:800.6px;top:160.0px;width:1.0px;height:1.0px;background:#777"></div><div class="a" style="left:810.9px;top:160.0px;width:1.0px;height:1.0px;background:#777"></div><div class="t" style="left:822.8px;top:156.3px;font-size:8.00px;color:#333;">11</div><div class="a" style="left:816.2px;top:158.8px;width:1.0px;height:3.5px;background:#666"></div><div class="a" style="left:821.2px;top:160.0px;width:1.0px;height:1.0px;background:#777"></div><div class="a" style="left:831.5px;top:160.0px;width:1.0px;height:1.0px;background:#777"></div><div class="t" style="left:843.2px;top:156.3px;font-size:8.00px;color:#333;">12</div><div class="a" style="left:836.8px;top:158.8px;width:1.0px;height:3.5px;background:#666"></div><div class="a" style="left:841.8px;top:160.0px;width:1.0px;height:1.0px;background:#777"></div><div class="a" style="left:852.1px;top:160.0px;width:1.0px;height:1.0px;background:#777"></div><div class="t" style="left:863.8px;top:156.3px;font-size:8.00px;color:#333;">13</div><div class="a" style="left:857.4px;top:158.8px;width:1.0px;height:3.5px;background:#666"></div><div class="a" style="left:862.4px;top:160.0px;width:1.0px;height:1.0px;background:#777"></div><div class="a" style="left:872.7px;top:160.0px;width:1.0px;height:1.0px;background:#777"></div><div class="t" style="left:884.4px;top:156.3px;font-size:8.00px;color:#333;">14</div><div class="a" style="left:878.0px;top:158.8px;width:1.0px;height:3.5px;background:#666"></div><div class="a" style="left:883.0px;top:160.0px;width:1.0px;height:1.0px;background:#777"></div><div class="a" style="left:893.3px;top:160.0px;width:1.0px;height:1.0px;background:#777"></div><div class="t" style="left:905.0px;top:156.3px;font-size:8.00px;color:#333;">15</div><div class="a" style="left:898.6px;top:158.8px;width:1.0px;height:3.5px;background:#666"></div><div class="a" style="left:903.6px;top:160.0px;width:1.0px;height:1.0px;background:#777"></div><div class="a" style="left:913.9px;top:160.0px;width:1.0px;height:1.0px;background:#777"></div><div class="t" style="left:925.6px;top:156.3px;font-size:8.00px;color:#333;">16</div><div class="a" style="left:919.2px;top:158.8px;width:1.0px;height:3.5px;background:#666"></div><div class="a" style="left:924.2px;top:160.0px;width:1.0px;height:1.0px;background:#777"></div><div class="a" style="left:934.5px;top:160.0px;width:1.0px;height:1.0px;background:#777"></div><div class="t" style="left:946.2px;top:156.3px;font-size:8.00px;color:#333;">17</div><div class="a" style="left:939.8px;top:158.8px;width:1.0px;height:3.5px;background:#666"></div><div class="a" style="left:944.8px;top:160.0px;width:1.0px;height:1.0px;background:#777"></div><div class="a" style="left:955.1px;top:160.0px;width:1.0px;height:1.0px;background:#777"></div><div class="t" style="left:966.8px;top:156.3px;font-size:8.00px;color:#333;">18</div><div class="a" style="left:960.4px;top:158.8px;width:1.0px;height:3.5px;background:#666"></div><div class="a" style="left:965.4px;top:160.0px;width:1.0px;height:1.0px;background:#777"></div><div class="a" style="left:975.7px;top:160.0px;width:1.0px;height:1.0px;background:#777"></div><div class="a" style="left:590.0px;top:160.0px;width:1.0px;height:1.0px;background:#555"></div><div class="a" style="left:584.5px;top:160.0px;width:1.0px;height:1.0px;background:#555"></div><div class="a" style="left:595.0px;top:160.0px;width:1.0px;height:1.0px;background:#555"></div><div class="a" style="left:982.0px;top:160.0px;width:1.0px;height:1.0px;background:#555"></div><div class="a" style="left:986.5px;top:160.0px;width:1.0px;height:1.0px;background:#555"></div><svg style="left:596px;top:152px" width="9" height="18" viewBox="0 0 9 18"><path d="M.5 1h8v2l-4 3.500-4-3.500z" fill="#fff" stroke="#888" stroke-width=".7"/><path d="M.5 13.500v-2l4-3.500 4 3.500v2z" fill="#fff" stroke="#888" stroke-width=".7"/><rect x=".5" y="13.500" width="8" height="3.500" fill="#fff" stroke="#888" stroke-width=".7"/></svg><svg style="left:957.5px;top:159px" width="9" height="8" viewBox="0 0 9 8"><path d="M.5 7v-2l4-4 4 4v2z" fill="#fff" stroke="#888" stroke-width=".7"/></svg><div class="a" style="left:566.0px;top:169.0px;width:11.0px;height:348.0px;background:#fff"></div><div class="t" style="left:567.3px;top:181.2px;font-size:8px;color:#333;transform:rotate(-90deg);transform-origin:0 0;">6</div><div class="a" style="left:569.7px;top:189.3px;width:3.5px;height:1.0px;background:#666"></div><div class="a" style="left:571.0px;top:184.4px;width:1.0px;height:1.0px;background:#777"></div><div class="a" style="left:571.0px;top:173.6px;width:1.0px;height:1.0px;background:#777"></div><div class="t" style="left:567.3px;top:201.8px;font-size:8px;color:#333;transform:rotate(-90deg);transform-origin:0 0;">7</div><div class="a" style="left:569.7px;top:209.9px;width:3.5px;height:1.0px;background:#666"></div><div class="a" style="left:571.0px;top:205.0px;width:1.0px;height:1.0px;background:#777"></div><div class="a" style="left:571.0px;top:194.2px;width:1.0px;height:1.0px;background:#777"></div><div class="t" style="left:567.3px;top:222.4px;font-size:8px;color:#333;transform:rotate(-90deg);transform-origin:0 0;">8</div><div class="a" style="left:569.7px;top:230.5px;width:3.5px;height:1.0px;background:#666"></div><div class="a" style="left:571.0px;top:225.6px;width:1.0px;height:1.0px;background:#777"></div><div class="a" style="left:571.0px;top:214.8px;width:1.0px;height:1.0px;background:#777"></div><div class="t" style="left:567.3px;top:243.0px;font-size:8px;color:#333;transform:rotate(-90deg);transform-origin:0 0;">9</div><div class="a" style="left:569.7px;top:251.1px;width:3.5px;height:1.0px;background:#666"></div><div class="a" style="left:571.0px;top:246.2px;width:1.0px;height:1.0px;background:#777"></div><div class="a" style="left:571.0px;top:235.4px;width:1.0px;height:1.0px;background:#777"></div><div class="t" style="left:567.3px;top:265.8px;font-size:8px;color:#333;transform:rotate(-90deg);transform-origin:0 0;">10</div><div class="a" style="left:569.7px;top:271.7px;width:3.5px;height:1.0px;background:#666"></div><div class="a" style="left:571.0px;top:266.8px;width:1.0px;height:1.0px;background:#777"></div><div class="a" style="left:571.0px;top:256.0px;width:1.0px;height:1.0px;background:#777"></div><div class="t" style="left:567.3px;top:286.2px;font-size:8px;color:#333;transform:rotate(-90deg);transform-origin:0 0;">11</div><div class="a" style="left:569.7px;top:292.3px;width:3.5px;height:1.0px;background:#666"></div><div class="a" style="left:571.0px;top:287.4px;width:1.0px;height:1.0px;background:#777"></div><div class="a" style="left:571.0px;top:276.6px;width:1.0px;height:1.0px;background:#777"></div><div class="t" style="left:567.3px;top:307.0px;font-size:8px;color:#333;transform:rotate(-90deg);transform-origin:0 0;">12</div><div class="a" style="left:569.7px;top:312.9px;width:3.5px;height:1.0px;background:#666"></div><div class="a" style="left:571.0px;top:308.0px;width:1.0px;height:1.0px;background:#777"></div><div class="a" style="left:571.0px;top:297.2px;width:1.0px;height:1.0px;background:#777"></div><div class="t" style="left:567.3px;top:327.6px;font-size:8px;color:#333;transform:rotate(-90deg);transform-origin:0 0;">13</div><div class="a" style="left:569.7px;top:333.5px;width:3.5px;height:1.0px;background:#666"></div><div class="a" style="left:571.0px;top:328.6px;width:1.0px;height:1.0px;background:#777"></div><div class="a" style="left:571.0px;top:317.8px;width:1.0px;height:1.0px;background:#777"></div><div class="t" style="left:567.3px;top:348.2px;font-size:8px;color:#333;transform:rotate(-90deg);transform-origin:0 0;">14</div><div class="a" style="left:569.7px;top:354.1px;width:3.5px;height:1.0px;background:#666"></div><div class="a" style="left:571.0px;top:349.2px;width:1.0px;height:1.0px;background:#777"></div><div class="a" style="left:571.0px;top:338.4px;width:1.0px;height:1.0px;background:#777"></div><div class="t" style="left:567.3px;top:368.8px;font-size:8px;color:#333;transform:rotate(-90deg);transform-origin:0 0;">15</div><div class="a" style="left:569.7px;top:374.7px;width:3.5px;height:1.0px;background:#666"></div><div class="a" style="left:571.0px;top:369.8px;width:1.0px;height:1.0px;background:#777"></div><div class="a" style="left:571.0px;top:359.0px;width:1.0px;height:1.0px;background:#777"></div><div class="t" style="left:567.3px;top:389.4px;font-size:8px;color:#333;transform:rotate(-90deg);transform-origin:0 0;">16</div><div class="a" style="left:569.7px;top:395.3px;width:3.5px;height:1.0px;background:#666"></div><div class="a" style="left:571.0px;top:390.4px;width:1.0px;height:1.0px;background:#777"></div><div class="a" style="left:571.0px;top:379.6px;width:1.0px;height:1.0px;background:#777"></div><div class="t" style="left:567.3px;top:410.0px;font-size:8px;color:#333;transform:rotate(-90deg);transform-origin:0 0;">17</div><div class="a" style="left:569.7px;top:415.9px;width:3.5px;height:1.0px;background:#666"></div><div class="a" style="left:571.0px;top:411.0px;width:1.0px;height:1.0px;background:#777"></div><div class="a" style="left:571.0px;top:400.2px;width:1.0px;height:1.0px;background:#777"></div><div class="t" style="left:567.3px;top:430.6px;font-size:8px;color:#333;transform:rotate(-90deg);transform-origin:0 0;">18</div><div class="a" style="left:569.7px;top:436.5px;width:3.5px;height:1.0px;background:#666"></div><div class="a" style="left:571.0px;top:431.6px;width:1.0px;height:1.0px;background:#777"></div><div class="a" style="left:571.0px;top:420.8px;width:1.0px;height:1.0px;background:#777"></div><div class="t" style="left:567.3px;top:451.2px;font-size:8px;color:#333;transform:rotate(-90deg);transform-origin:0 0;">19</div><div class="a" style="left:569.7px;top:457.1px;width:3.5px;height:1.0px;background:#666"></div><div class="a" style="left:571.0px;top:452.2px;width:1.0px;height:1.0px;background:#777"></div><div class="a" style="left:571.0px;top:441.4px;width:1.0px;height:1.0px;background:#777"></div><div class="t" style="left:567.3px;top:471.8px;font-size:8px;color:#333;transform:rotate(-90deg);transform-origin:0 0;">20</div><div class="a" style="left:569.7px;top:477.7px;width:3.5px;height:1.0px;background:#666"></div><div class="a" style="left:571.0px;top:472.8px;width:1.0px;height:1.0px;background:#777"></div><div class="a" style="left:571.0px;top:462.0px;width:1.0px;height:1.0px;background:#777"></div><div class="t" style="left:567.3px;top:492.4px;font-size:8px;color:#333;transform:rotate(-90deg);transform-origin:0 0;">21</div><div class="a" style="left:569.7px;top:498.3px;width:3.5px;height:1.0px;background:#666"></div><div class="a" style="left:571.0px;top:493.4px;width:1.0px;height:1.0px;background:#777"></div><div class="a" style="left:571.0px;top:482.6px;width:1.0px;height:1.0px;background:#777"></div><div class="t" style="left:567.3px;top:513.0px;font-size:8px;color:#333;transform:rotate(-90deg);transform-origin:0 0;">22</div><div class="a" style="left:571.0px;top:514.0px;width:1.0px;height:1.0px;background:#777"></div><div class="a" style="left:571.0px;top:503.2px;width:1.0px;height:1.0px;background:#777"></div><div class="a" style="left:580.0px;top:169.0px;width:404.0px;height:338.0px;background:#fff"></div><div class="t" style="left:804.0px;top:172.1px;font-size:7.60px;letter-spacing:-0.021px;font-family:'Liberation Serif',serif;color:#000;">от</div><div class="a" style="left:814.0px;top:178.5px;width:51.0px;height:0.8px;background:#000"></div><div class="t" style="left:868.5px;top:172.1px;font-size:7.60px;letter-spacing:0.249px;font-family:'Liberation Serif',serif;color:#000;">№</div><div class="a" style="left:878.0px;top:178.5px;width:68.0px;height:0.8px;background:#000"></div><div class="t" style="left:649.0px;top:204.1px;font-size:8.10px;letter-spacing:0.349px;font-weight:bold;font-family:'Liberation Serif',serif;color:#000;">Схема расположения земельного участка или земельных участков</div><div class="t" style="left:713.0px;top:214.1px;font-size:8.10px;letter-spacing:0.362px;font-weight:bold;font-family:'Liberation Serif',serif;color:#000;">на кадастровом плане территории</div><div class="a" style="left:604.8px;top:233.2px;width:346.9px;height:1.6px;background:#5a5a5a"></div><div class="a" style="left:604.8px;top:252.0px;width:346.9px;height:1.3px;background:#5a5a5a"></div><div class="a" style="left:604.8px;top:353.8px;width:346.9px;height:1.3px;background:#5a5a5a"></div><div class="a" style="left:604.2px;top:234.0px;width:1.7px;height:273.0px;background:#5a5a5a"></div><div class="a" style="left:950.6px;top:234.0px;width:1.7px;height:273.0px;background:#5a5a5a"></div><div class="a" style="left:745.0px;top:354.4px;width:1.0px;height:152.6px;background:#5a5a5a"></div><div class="a" style="left:745.5px;top:428.8px;width:206.2px;height:1.0px;background:#5a5a5a"></div><div class="a" style="left:847.7px;top:429.3px;width:1.0px;height:77.7px;background:#5a5a5a"></div><div class="a" style="left:604.8px;top:441.1px;width:346.9px;height:1.0px;background:#5a5a5a"></div><div class="a" style="left:604.8px;top:451.8px;width:346.9px;height:1.0px;background:#5a5a5a"></div><div class="a" style="left:604.8px;top:464.5px;width:346.9px;height:1.0px;background:#5a5a5a"></div><div class="a" style="left:604.8px;top:477.5px;width:346.9px;height:1.0px;background:#5a5a5a"></div><div class="a" style="left:604.8px;top:490.1px;width:346.9px;height:1.0px;background:#5a5a5a"></div><div class="a" style="left:604.8px;top:502.2px;width:346.9px;height:1.2px;background:#5a5a5a"></div><div class="t" style="left:609.4px;top:234.6px;font-size:7.60px;letter-spacing:0.248px;font-weight:bold;font-family:'Liberation Serif',serif;color:#000;">Условный номер земельного участка:</div><div class="t" style="left:750.0px;top:234.6px;font-size:7.60px;letter-spacing:0.900px;font-family:'Liberation Serif',serif;color:#000;text-decoration:underline;">ЗУ1</div><div class="t" style="left:609.4px;top:244.0px;font-size:7.60px;letter-spacing:0.199px;font-family:'Liberation Serif',serif;color:#000;">(указывается в случае, если предусматривается образование двух и более земельных участков)</div><div class="t" style="left:609.4px;top:254.6px;font-size:7.60px;letter-spacing:0.236px;font-weight:bold;font-family:'Liberation Serif',serif;color:#000;">Площадь земельного участка</div><div class="t" style="left:719.0px;top:254.6px;font-size:7.60px;letter-spacing:-0.367px;font-family:'Liberation Serif',serif;color:#000;text-decoration:underline;">1333.05</div><div class="t" style="left:744.0px;top:254.6px;font-size:7.60px;letter-spacing:1.544px;font-weight:bold;font-family:'Liberation Serif',serif;color:#000;">м²</div><div class="t" style="left:609.4px;top:263.9px;font-size:7.60px;letter-spacing:0.209px;font-family:'Liberation Serif',serif;color:#000;">(указывается проектная площадь образуемого земельного участка, вычисленная с использованием</div><div class="t" style="left:609.4px;top:273.1px;font-size:7.60px;letter-spacing:0.214px;font-family:'Liberation Serif',serif;color:#000;">технологических и программных средств, в том числе размещенных на официальном сайте</div><div class="t" style="left:609.4px;top:282.4px;font-size:7.60px;letter-spacing:0.222px;font-family:'Liberation Serif',serif;color:#000;">федерального органа исполнительной власти, уполномоченного Правительством Российской</div><div class="t" style="left:609.4px;top:291.6px;font-size:7.60px;letter-spacing:0.213px;font-family:'Liberation Serif',serif;color:#000;">Федерации на осуществление государственного кадастрового учета, государственной</div><div class="t" style="left:609.4px;top:300.8px;font-size:7.60px;letter-spacing:0.204px;font-family:'Liberation Serif',serif;color:#000;">регистрации прав, ведение Единого государственного реестра недвижимости и предоставление</div><div class="t" style="left:609.4px;top:310.0px;font-size:7.60px;letter-spacing:0.228px;font-family:'Liberation Serif',serif;color:#000;">сведений, содержащихся в Едином государственном реестре недвижимости, в информационно-</div><div class="t" style="left:609.4px;top:319.2px;font-size:7.60px;letter-spacing:0.251px;font-family:'Liberation Serif',serif;color:#000;">телекоммуникационной сети "Интернет" (далее - официальный сайт), с округлением до 1</div><div class="t" style="left:609.4px;top:328.5px;font-size:7.60px;letter-spacing:0.227px;font-family:'Liberation Serif',serif;color:#000;">квадратного метра. Указанное значение площади земельного участка может быть уточнено при</div><div class="t" style="left:609.4px;top:337.7px;font-size:7.60px;letter-spacing:0.188px;font-family:'Liberation Serif',serif;color:#000;">проведении кадастровых работ не более чем на десять процентов)</div><div class="t" style="left:821.0px;top:356.1px;font-size:7.60px;letter-spacing:0.358px;font-weight:bold;font-family:'Liberation Serif',serif;color:#000;">Координаты, м</div><div class="t" style="left:749.7px;top:365.5px;font-size:7.60px;letter-spacing:0.238px;font-family:'Liberation Serif',serif;color:#000;">(указываются в случае подготовки схемы расположения</div><div class="t" style="left:749.7px;top:374.7px;font-size:7.60px;letter-spacing:0.205px;font-family:'Liberation Serif',serif;color:#000;">земельного участка с использованием технологических и</div><div class="t" style="left:749.7px;top:383.9px;font-size:7.60px;letter-spacing:0.211px;font-family:'Liberation Serif',serif;color:#000;">программных средств, в том числе размещенных на</div><div class="t" style="left:749.7px;top:393.1px;font-size:7.60px;letter-spacing:0.208px;font-family:'Liberation Serif',serif;color:#000;">официальном сайте. Значения координат, полученные с</div><div class="t" style="left:749.7px;top:402.3px;font-size:7.60px;letter-spacing:0.200px;font-family:'Liberation Serif',serif;color:#000;">использованием указанных технологических и</div><div class="t" style="left:749.7px;top:411.5px;font-size:7.60px;letter-spacing:0.207px;font-family:'Liberation Serif',serif;color:#000;">программных средств, указываются с округлением до</div><div class="t" style="left:749.7px;top:420.7px;font-size:7.60px;letter-spacing:0.140px;font-family:'Liberation Serif',serif;color:#000;">0,01 метра)</div><div class="t" style="left:615.0px;top:390.1px;font-size:7.60px;letter-spacing:0.266px;font-weight:bold;font-family:'Liberation Serif',serif;color:#000;">Обозначение характерных точек</div><div class="t" style="left:663.0px;top:399.3px;font-size:7.60px;letter-spacing:0.217px;font-weight:bold;font-family:'Liberation Serif',serif;color:#000;">границ</div><div class="t" style="left:794.5px;top:431.8px;font-size:7.60px;letter-spacing:-0.489px;font-weight:bold;font-family:'Liberation Serif',serif;color:#000;">X</div><div class="t" style="left:897.5px;top:431.8px;font-size:7.60px;letter-spacing:-0.489px;font-weight:bold;font-family:'Liberation Serif',serif;color:#000;">Y</div><div class="t" style="left:673.0px;top:443.3px;font-size:7.60px;letter-spacing:-0.300px;font-weight:bold;font-family:'Liberation Serif',serif;color:#000;">1</div><div class="t" style="left:795.0px;top:443.3px;font-size:7.60px;letter-spacing:0.200px;font-weight:bold;font-family:'Liberation Serif',serif;color:#000;">2</div><div class="t" style="left:898.0px;top:443.3px;font-size:7.60px;letter-spacing:0.200px;font-weight:bold;font-family:'Liberation Serif',serif;color:#000;">3</div><div class="t" style="left:611.0px;top:454.9px;font-size:7.60px;letter-spacing:-0.300px;font-family:'Liberation Serif',serif;color:#000;">1</div><div class="t" style="left:749.7px;top:454.9px;font-size:7.60px;letter-spacing:-0.222px;font-family:'Liberation Serif',serif;color:#000;">7523557.78</div><div class="t" style="left:852.8px;top:454.9px;font-size:7.60px;letter-spacing:-0.235px;font-family:'Liberation Serif',serif;color:#000;">5511869.67</div><div class="t" style="left:611.0px;top:467.9px;font-size:7.60px;letter-spacing:-0.300px;font-family:'Liberation Serif',serif;color:#000;">2</div><div class="t" style="left:749.7px;top:467.9px;font-size:7.60px;letter-spacing:-0.222px;font-family:'Liberation Serif',serif;color:#000;">7523592.98</div><div class="t" style="left:852.8px;top:467.9px;font-size:7.60px;letter-spacing:-0.235px;font-family:'Liberation Serif',serif;color:#000;">5511905.69</div><div class="t" style="left:611.0px;top:480.6px;font-size:7.60px;letter-spacing:-0.300px;font-family:'Liberation Serif',serif;color:#000;">3</div><div class="t" style="left:749.7px;top:480.6px;font-size:7.60px;letter-spacing:-0.222px;font-family:'Liberation Serif',serif;color:#000;">7523534.99</div><div class="t" style="left:852.8px;top:480.6px;font-size:7.60px;letter-spacing:-0.235px;font-family:'Liberation Serif',serif;color:#000;">5511966.70</div><div class="t" style="left:611.0px;top:493.1px;font-size:7.60px;letter-spacing:-0.300px;font-family:'Liberation Serif',serif;color:#000;">4</div><div class="t" style="left:749.7px;top:493.1px;font-size:7.60px;letter-spacing:-0.222px;font-family:'Liberation Serif',serif;color:#000;">7523499.89</div><div class="t" style="left:852.8px;top:493.1px;font-size:7.60px;letter-spacing:-0.235px;font-family:'Liberation Serif',serif;color:#000;">5511932.25</div><div class="a" style="left:561.5px;top:520.3px;width:436.0px;height:17.2px;background:#f3f3f3"></div><div class="t" style="left:567.5px;top:524.8px;font-size:8.60px;letter-spacing:-0.390px;color:#444;">Страница 1 из 2</div><svg style="left:686.5px;top:523.500px" width="12" height="12" viewBox="0 0 12 12"><g stroke="#444" fill="none" stroke-width=".9"><path d="M.5 3v-2.500h2.500M9 .5h2.500v2.500M11.500 9v2.500h-2.500M3 11.500h-2.500v-2.500"/><path d="M3.500 2.500h3.500l1.500 1.500v5.500h-5z"/></g></svg><div class="t" style="left:699.5px;top:524.8px;font-size:8.60px;letter-spacing:-0.286px;color:#444;">Фокусировка</div><svg style="left:766px;top:524px" width="12" height="11" viewBox="0 0 12 11"><g stroke="#444" fill="none" stroke-width=".9"><path d="M6 1.500v8.500M6 1.500q-2.500-1.500-5 0v8.500q2.500-1.500 5 0q2.500-1.500 5 0v-8.500q-2.500-1.500-5 0"/></g></svg><div class="a" style="left:789.6px;top:520.3px;width:28.5px;height:17.2px;background:#cfcfcf"></div><svg style="left:799px;top:523.500px" width="10" height="12" viewBox="0 0 10 12"><rect x=".5" y=".5" width="9" height="11" stroke="#444" fill="none" stroke-width=".9"/><path d="M2.500 3h5M2.500 5h5M2.500 7h5M2.500 9h5" stroke="#444" stroke-width=".8"/></svg><svg style="left:830px;top:523.500px" width="12" height="12" viewBox="0 0 12 12"><rect x=".5" y=".5" width="9" height="10" stroke="#444" fill="none" stroke-width=".9"/><path d="M2 3h6M2 5h4" stroke="#444" stroke-width=".8"/><circle cx="8.500" cy="8.500" r="3" fill="#444"/></svg><div class="a" style="left:856.0px;top:529.0px;width:5.0px;height:1.0px;background:#444"></div><div class="a" style="left:866.0px;top:529.0px;width:77.0px;height:1.0px;background:#8a8a8a"></div><div class="a" style="left:904.5px;top:527.0px;width:1.0px;height:5.0px;background:#8a8a8a"></div><div class="a" style="left:890.5px;top:525.0px;width:3.0px;height:9.0px;background:#555"></div><div class="a" style="left:948.0px;top:529.0px;width:5.5px;height:1.0px;background:#444"></div><div class="a" style="left:950.2px;top:526.8px;width:1.0px;height:5.5px;background:#444"></div><div class="t" style="left:964.0px;top:524.8px;font-size:8.60px;letter-spacing:-0.867px;color:#444;">70 %</div></body></html>
